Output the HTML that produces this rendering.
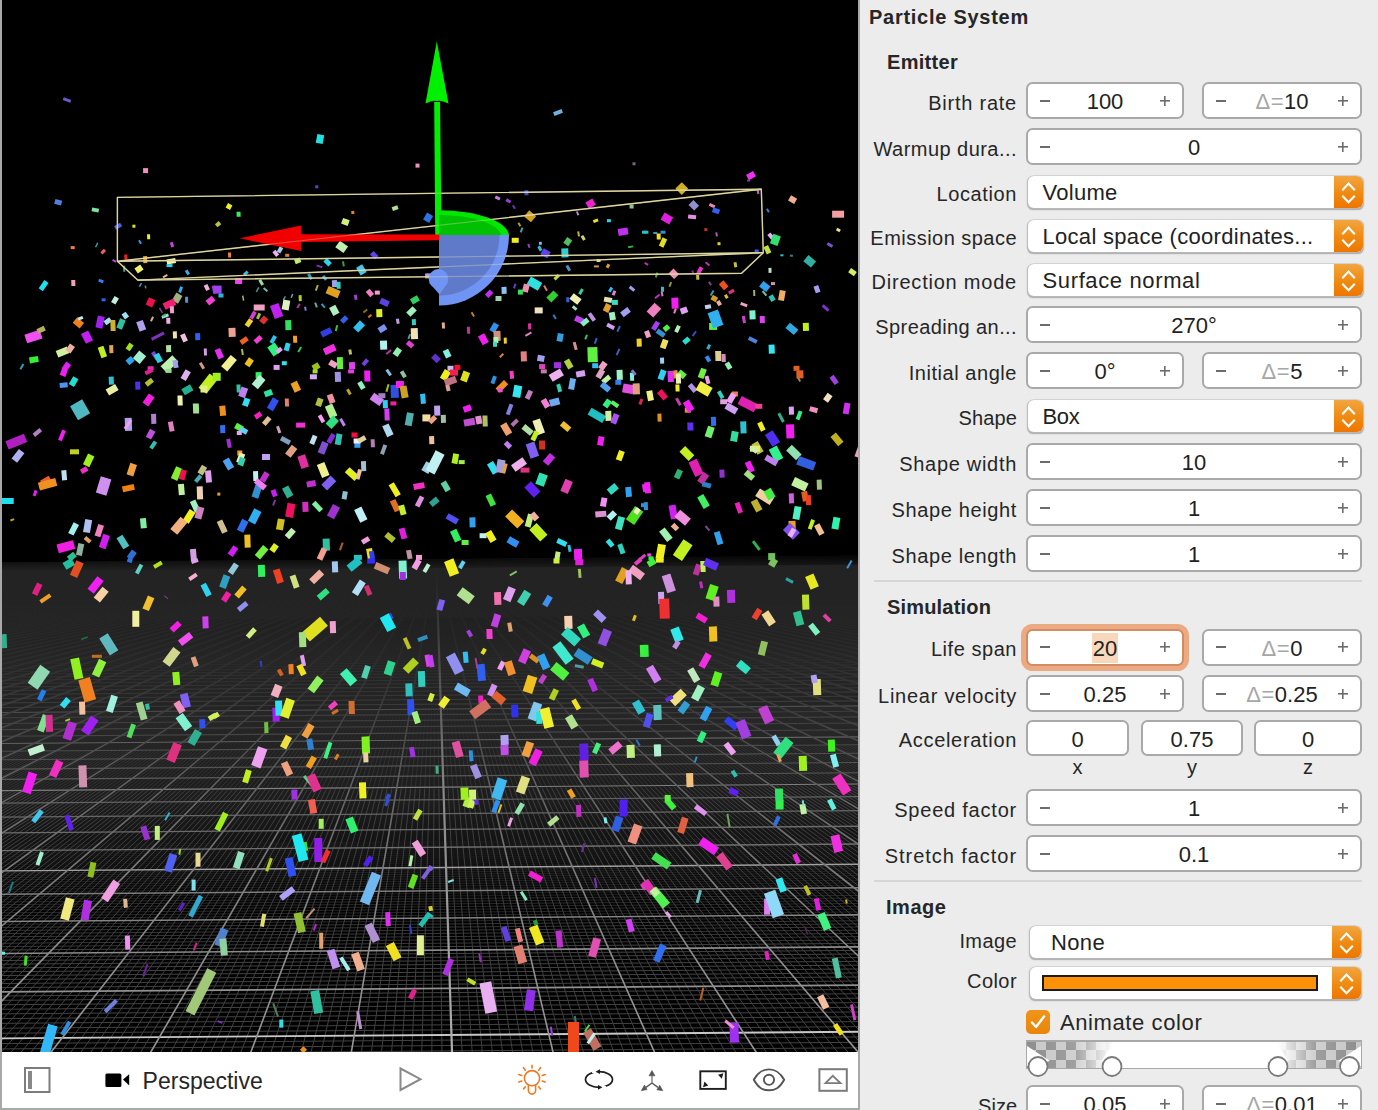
<!DOCTYPE html>
<html><head><meta charset="utf-8"><style>
*{box-sizing:border-box}
html,body{margin:0;padding:0;width:1378px;height:1110px;overflow:hidden;background:#ececec;font-family:"Liberation Sans",sans-serif}
#view{position:absolute;left:0;top:0;width:860px;height:1110px;background:#a9a9a9}
#scene{position:absolute;left:2px;top:0}
#tb{position:absolute;left:2px;top:1052px;width:856px;height:56px;background:#fff}
#persp{position:absolute;left:140.6px;top:15.5px;font-size:23px;color:#262626;letter-spacing:0px;white-space:nowrap}
#insp{position:absolute;left:860px;top:0;width:518px;height:1110px;background:#ececec;color:#262626}
.ptitle{position:absolute;left:869px;top:6px;font-size:20px;font-weight:700;letter-spacing:0.73px;white-space:nowrap;color:#262626}
.hdr{position:absolute;font-size:20px;font-weight:700;white-space:nowrap;color:#262626}
.lbl{position:absolute;right:361px;font-size:20px;white-space:nowrap;color:#262626;line-height:20px;height:20px}
.stp{position:absolute;background:#fff;border:2px solid #a9a9a9;border-radius:6.5px}
.stp.focus{border-color:#d38b61;box-shadow:0 0 0 5px #ebaa81}
.stp .mi{position:absolute;left:12px;top:50%;margin-top:-1px;width:10px;height:2px;background:#6c6c6c}
.stp .pl{position:absolute;right:12px;top:50%;margin-top:-5px;width:10px;height:10px;background:linear-gradient(#6c6c6c,#6c6c6c) center/10px 1.6px no-repeat,linear-gradient(#6c6c6c,#6c6c6c) center/1.6px 10px no-repeat}
.stp .val{position:absolute;left:0;right:0;top:50%;margin-top:-11.5px;text-align:center;font-size:22px;line-height:26px;color:#222;white-space:nowrap}
.dl{color:#a6a6a6;letter-spacing:0.5px}
.hl{background:#f8d7bb;padding:3px 1px 2px}
.pop{position:absolute;background:#fff;border-radius:6px;box-shadow:0 0 0 0.6px #c4c4c4,0 1px 1.2px 0.3px rgba(0,0,0,0.28)}
.ptxt{position:absolute;left:14.5px;top:4.2px;font-size:22px;line-height:26px;color:#222;white-space:nowrap;letter-spacing:0.45px}
.arr{position:absolute;right:0;top:0;width:29px;height:100%;border-radius:0 6px 6px 0;background:linear-gradient(#f2a540,#ef8a10 55%,#ee7500)}
.arr svg{position:absolute;left:0;top:0}
.sw{position:absolute;left:12px;top:8px;width:276px;height:16px;background:#fd9208;border:2px solid #1a1a1a}
.sep{position:absolute;left:874px;width:488px;height:2px;background:#d6d6d6}
.axl{position:absolute;top:756px;text-align:center;font-size:20px;color:#262626}
.chk{position:absolute;left:1026px;top:1010px;width:24px;height:24px;border-radius:5px;background:linear-gradient(#f0951a,#e8850c)}
.chk svg{position:absolute;left:0;top:0}
.anim{position:absolute;left:1060px;top:1010px;font-size:22px;white-space:nowrap;letter-spacing:0.6px;color:#262626}
.grad{position:absolute;left:1026px;top:1040px;width:336px;height:29px}
</style></head><body>
<div id="view">
<svg id="scene" width="856" height="1052" viewBox="2 0 856 1052">
<rect x="2" y="0" width="856" height="1052" fill="#000"/>
<defs><linearGradient id="haze" gradientUnits="userSpaceOnUse" x1="0" y1="559" x2="0" y2="1052"><stop offset="0" stop-color="#1e1e1e"/><stop offset="0.08" stop-color="#242424"/><stop offset="0.20" stop-color="#262626"/><stop offset="0.35" stop-color="#232323"/><stop offset="0.50" stop-color="#1c1c1c"/><stop offset="0.62" stop-color="#0e0e0e"/><stop offset="0.72" stop-color="#000"/><stop offset="1" stop-color="#000"/></linearGradient></defs>
<path d="M-1563.9 574.4L2435.9 543.6L858 1052L2 1052Z" fill="url(#haze)"/>
<path d="M-260.1 1061.98L1139.8 1051.20M-260.2 1056.39L1139.8 1045.61M-260.2 1050.94L1139.7 1040.16M-260.3 1045.60L1139.7 1034.82M-260.4 1035.27L1139.6 1024.49M-260.4 1030.26L1139.6 1019.48M-260.4 1025.37L1139.5 1014.59M-260.5 1020.57L1139.5 1009.79M-260.5 1015.88L1139.5 1005.10M-260.5 1011.28L1139.4 1000.50M-260.6 1006.77L1139.4 995.99M-260.6 1002.35L1139.4 991.57M-260.6 998.02L1139.3 987.24M-260.7 989.61L1139.3 978.83M-260.7 985.53L1139.2 974.75M-260.8 981.52L1139.2 970.74M-260.8 977.59L1139.2 966.81M-260.8 973.74L1139.1 962.96M-260.9 969.95L1139.1 959.17M-260.9 966.24L1139.1 955.46M-260.9 962.59L1139.0 951.81M-260.9 959.00L1139.0 948.23M-261.0 952.03L1139.0 941.25" stroke="#434343" stroke-opacity="1.0" stroke-width="1" fill="none"/>
<path d="M-261.0 948.63L1138.9 937.85M-261.0 945.30L1138.9 934.52M-261.1 942.02L1138.9 931.24M-261.1 938.79L1138.9 928.01M-261.1 935.62L1138.8 924.84M-261.1 932.51L1138.8 921.73M-261.2 929.44L1138.8 918.66" stroke="#434343" stroke-opacity="0.8" stroke-width="1" fill="none"/>
<path d="M-261.2 926.43L1138.8 915.65M-261.2 920.55L1138.7 909.77M-261.3 917.68L1138.7 906.90M-261.3 914.86L1138.7 904.08M-261.3 912.08L1138.7 901.30M-261.3 909.35L1138.6 898.57M-261.3 906.65L1138.6 895.87M-261.4 904.00L1138.6 893.22" stroke="#434343" stroke-opacity="0.6" stroke-width="1" fill="none"/>
<path d="M-261.4 901.39L1138.6 890.61M-261.4 898.82L1138.6 888.04M-261.4 893.80L1138.5 883.02M-261.5 891.34L1138.5 880.56M-261.5 888.92L1138.5 878.15M-261.5 886.54L1138.5 875.76M-261.5 884.19L1138.4 873.41M-261.5 881.88L1138.4 871.10M-261.6 879.60L1138.4 868.82M-261.6 877.35L1138.4 866.57M-261.6 875.13L1138.4 864.35" stroke="#434343" stroke-opacity="0.4" stroke-width="1" fill="none"/>
<path d="M-261.6 870.79L1138.3 860.01M-261.6 868.66L1138.3 857.88M-261.7 866.57L1138.3 855.79M-261.7 864.50L1138.3 853.72M-261.7 862.46L1138.3 851.68M-261.7 860.45L1138.3 849.67M-261.7 858.46L1138.2 847.68M-261.7 856.50L1138.2 845.72M-261.7 854.57L1138.2 843.79M-261.8 850.78L1138.2 840.00M-261.8 848.92L1138.2 838.14M-261.8 847.09L1138.2 836.31" stroke="#434343" stroke-opacity="0.2" stroke-width="1" fill="none"/>
<path d="M2.2 712.3L-113.4 753.2M5.3 712.3L-109.5 753.2M8.4 712.3L-105.7 753.2M14.5 712.2L-97.9 753.1M17.6 712.2L-94.0 753.1M20.6 712.2L-90.1 753.1M23.7 712.2L-86.2 753.0M26.8 712.2L-82.4 753.0M29.8 712.1L-78.5 753.0M32.9 712.1L-74.6 752.9M36.0 712.1L-70.7 752.9M39.0 712.1L-66.8 752.9M45.2 712.0L-59.0 752.8M48.2 712.0L-55.2 752.8M51.3 712.0L-51.3 752.8M54.4 711.9L-47.4 752.7M57.4 711.9L-43.5 752.7M60.5 711.9L-39.6 752.7M63.6 711.9L-35.7 752.6M66.7 711.8L-31.8 752.6M69.7 711.8L-28.0 752.6M75.9 711.8L-20.2 752.5M78.9 711.8L-16.3 752.5M82.0 711.7L-12.4 752.5M85.1 711.7L-8.5 752.4M88.1 711.7L-4.6 752.4M91.2 711.7L-0.8 752.4M94.3 711.6L3.1 752.3M97.3 711.6L7.0 752.3M100.4 711.6L10.9 752.3M106.5 711.5L18.7 752.2M109.6 711.5L22.6 752.2M112.7 711.5L26.4 752.2M115.7 711.5L30.3 752.1M118.8 711.4L34.2 752.1M121.9 711.4L38.1 752.1M124.9 711.4L42.0 752.0M128.0 711.4L45.9 752.0M131.1 711.4L49.8 752.0M137.2 711.3L57.5 751.9M140.3 711.3L61.4 751.9M143.3 711.3L65.3 751.9M146.4 711.2L69.2 751.8M149.5 711.2L73.1 751.8M152.5 711.2L76.9 751.8M155.6 711.2L80.8 751.7M158.7 711.1L84.7 751.7M161.7 711.1L88.6 751.7M167.9 711.1L96.4 751.6M170.9 711.0L100.3 751.6M174.0 711.0L104.1 751.6M177.1 711.0L108.0 751.5M180.1 711.0L111.9 751.5M183.2 711.0L115.8 751.5M186.3 710.9L119.7 751.4M189.3 710.9L123.6 751.4M192.4 710.9L127.5 751.4M198.5 710.8L135.2 751.3M201.6 710.8L139.1 751.3M204.7 710.8L143.0 751.3M207.8 710.8L146.9 751.2M210.8 710.7L150.8 751.2M213.9 710.7L154.7 751.2M217.0 710.7L158.5 751.1M220.0 710.7L162.4 751.1M223.1 710.6L166.3 751.1M229.2 710.6L174.1 751.0M232.3 710.6L178.0 751.0M235.4 710.5L181.9 751.0M238.4 710.5L185.7 750.9M241.5 710.5L189.6 750.9M244.6 710.5L193.5 750.9M247.6 710.5L197.4 750.8M250.7 710.4L201.3 750.8M253.8 710.4L205.2 750.8M259.9 710.4L212.9 750.7M263.0 710.3L216.8 750.7M266.0 710.3L220.7 750.7M269.1 710.3L224.6 750.6M272.2 710.3L228.5 750.6M275.2 710.2L232.4 750.6M278.3 710.2L236.2 750.5M281.4 710.2L240.1 750.5M284.4 710.2L244.0 750.5M290.6 710.1L251.8 750.4M293.6 710.1L255.7 750.4M296.7 710.1L259.6 750.4M299.8 710.1L263.4 750.3M302.8 710.0L267.3 750.3M305.9 710.0L271.2 750.3M309.0 710.0L275.1 750.2M312.0 710.0L279.0 750.2M315.1 709.9L282.9 750.2M321.2 709.9L290.6 750.1M324.3 709.9L294.5 750.1M327.4 709.8L298.4 750.1M330.4 709.8L302.3 750.0M333.5 709.8L306.2 750.0M336.6 709.8L310.1 750.0M339.7 709.7L314.0 749.9M342.7 709.7L317.8 749.9M345.8 709.7L321.7 749.9M351.9 709.7L329.5 749.8M355.0 709.6L333.4 749.8M358.1 709.6L337.3 749.8M361.1 709.6L341.2 749.7M364.2 709.6L345.0 749.7M367.3 709.5L348.9 749.7M370.3 709.5L352.8 749.6M373.4 709.5L356.7 749.6M376.5 709.5L360.6 749.6M382.6 709.4L368.4 749.5M385.7 709.4L372.2 749.5M388.7 709.4L376.1 749.5M391.8 709.3L380.0 749.4M394.9 709.3L383.9 749.4M397.9 709.3L387.8 749.4M401.0 709.3L391.7 749.3M404.1 709.3L395.6 749.3M407.1 709.2L399.4 749.3M413.3 709.2L407.2 749.2M416.3 709.2L411.1 749.2M419.4 709.1L415.0 749.2M422.5 709.1L418.9 749.1M425.5 709.1L422.7 749.1M428.6 709.1L426.6 749.1M431.7 709.0L430.5 749.0M434.7 709.0L434.4 749.0M437.8 709.0L438.3 749.0M443.9 708.9L446.1 748.9M447.0 708.9L449.9 748.9M450.1 708.9L453.8 748.9M453.1 708.9L457.7 748.8M456.2 708.8L461.6 748.8M459.3 708.8L465.5 748.8M462.3 708.8L469.4 748.7M465.4 708.8L473.3 748.7M468.5 708.8L477.1 748.7M474.6 708.7L484.9 748.6M477.7 708.7L488.8 748.6M480.8 708.7L492.7 748.6M483.8 708.6L496.6 748.5M486.9 708.6L500.5 748.5M490.0 708.6L504.3 748.5M493.0 708.6L508.2 748.4M496.1 708.5L512.1 748.4M499.2 708.5L516.0 748.4M505.3 708.5L523.8 748.3M508.4 708.4L527.7 748.3M511.4 708.4L531.5 748.3M514.5 708.4L535.4 748.2M517.6 708.4L539.3 748.2M520.6 708.4L543.2 748.2M523.7 708.3L547.1 748.2M526.8 708.3L551.0 748.1M529.8 708.3L554.9 748.1M536.0 708.2L562.6 748.0M539.0 708.2L566.5 748.0M542.1 708.2L570.4 748.0M545.2 708.2L574.3 747.9M548.2 708.1L578.2 747.9M551.3 708.1L582.0 747.9M554.4 708.1L585.9 747.9M557.4 708.1L589.8 747.8M560.5 708.0L593.7 747.8M566.6 708.0L601.5 747.7M569.7 708.0L605.4 747.7M572.8 708.0L609.2 747.7M575.8 707.9L613.1 747.6M578.9 707.9L617.0 747.6M582.0 707.9L620.9 747.6M585.0 707.9L624.8 747.6M588.1 707.8L628.7 747.5M591.2 707.8L632.6 747.5M597.3 707.8L640.3 747.4M600.4 707.7L644.2 747.4M603.4 707.7L648.1 747.4M606.5 707.7L652.0 747.3M609.6 707.7L655.9 747.3M612.6 707.6L659.8 747.3M615.7 707.6L663.6 747.3M618.8 707.6L667.5 747.2M621.9 707.6L671.4 747.2M628.0 707.5L679.2 747.1M631.1 707.5L683.1 747.1M634.1 707.5L687.0 747.1M637.2 707.5L690.8 747.0M640.3 707.4L694.7 747.0M643.3 707.4L698.6 747.0M646.4 707.4L702.5 747.0M649.5 707.4L706.4 746.9M652.5 707.3L710.3 746.9M658.7 707.3L718.0 746.8M661.7 707.3L721.9 746.8M664.8 707.2L725.8 746.8M667.9 707.2L729.7 746.7M670.9 707.2L733.6 746.7M674.0 707.2L737.5 746.7M677.1 707.1L741.3 746.7M680.1 707.1L745.2 746.6M683.2 707.1L749.1 746.6M689.3 707.1L756.9 746.5M692.4 707.0L760.8 746.5M695.5 707.0L764.7 746.5M698.5 707.0L768.5 746.4M701.6 707.0L772.4 746.4M704.7 706.9L776.3 746.4M707.7 706.9L780.2 746.4M710.8 706.9L784.1 746.3M713.9 706.9L788.0 746.3M720.0 706.8L795.7 746.2M723.1 706.8L799.6 746.2M726.1 706.8L803.5 746.2M729.2 706.7L807.4 746.1M732.3 706.7L811.3 746.1M735.3 706.7L815.2 746.1M738.4 706.7L819.1 746.1M741.5 706.7L822.9 746.0M744.5 706.6L826.8 746.0M750.7 706.6L834.6 745.9M753.8 706.6L838.5 745.9M756.8 706.5L842.4 745.9M759.9 706.5L846.3 745.8M763.0 706.5L850.1 745.8M766.0 706.5L854.0 745.8M769.1 706.4L857.9 745.8M772.2 706.4L861.8 745.7M775.2 706.4L865.7 745.7M781.4 706.3L873.5 745.6M784.4 706.3L877.3 745.6M787.5 706.3L881.2 745.6M790.6 706.3L885.1 745.5M793.6 706.3L889.0 745.5M796.7 706.2L892.9 745.5M799.8 706.2L896.8 745.5M802.8 706.2L900.7 745.4M805.9 706.2L904.5 745.4M812.0 706.1L912.3 745.3M815.1 706.1L916.2 745.3M818.2 706.1L920.1 745.3M821.2 706.0L924.0 745.2M824.3 706.0L927.8 745.2M827.4 706.0L931.7 745.2M830.4 706.0L935.6 745.2M833.5 705.9L939.5 745.1M836.6 705.9L943.4 745.1M842.7 705.9L951.2 745.0M845.8 705.8L955.0 745.0M848.8 705.8L958.9 745.0M851.9 705.8L962.8 744.9M855.0 705.8L966.7 744.9" stroke="#404040" stroke-opacity="0.3" stroke-width="1" fill="none"/>
<path d="M3.1 752.3L-88.0 793.0M7.0 752.3L-83.3 793.0M10.9 752.3L-78.6 793.0M18.7 752.2L-69.2 792.9M22.6 752.2L-64.5 792.9M26.4 752.2L-59.8 792.8M30.3 752.1L-55.1 792.8M34.2 752.1L-50.4 792.8M38.1 752.1L-45.7 792.7M42.0 752.0L-41.0 792.7M45.9 752.0L-36.3 792.6M49.8 752.0L-31.6 792.6M57.5 751.9L-22.2 792.5M61.4 751.9L-17.5 792.5M65.3 751.9L-12.8 792.5M69.2 751.8L-8.0 792.4M73.1 751.8L-3.3 792.4M76.9 751.8L1.4 792.4M80.8 751.7L6.1 792.3M84.7 751.7L10.8 792.3M88.6 751.7L15.5 792.2M96.4 751.6L24.9 792.2M100.3 751.6L29.6 792.1M104.1 751.6L34.3 792.1M108.0 751.5L39.0 792.1M111.9 751.5L43.7 792.0M115.8 751.5L48.4 792.0M119.7 751.4L53.1 792.0M123.6 751.4L57.8 791.9M127.5 751.4L62.5 791.9M135.2 751.3L71.9 791.8M139.1 751.3L76.6 791.8M143.0 751.3L81.3 791.7M146.9 751.2L86.0 791.7M150.8 751.2L90.7 791.7M154.7 751.2L95.4 791.6M158.5 751.1L100.1 791.6M162.4 751.1L104.8 791.6M166.3 751.1L109.5 791.5M174.1 751.0L118.9 791.4M178.0 751.0L123.6 791.4M181.9 751.0L128.3 791.4M185.7 750.9L133.1 791.3M189.6 750.9L137.8 791.3M193.5 750.9L142.5 791.3M197.4 750.8L147.2 791.2M201.3 750.8L151.9 791.2M205.2 750.8L156.6 791.2M212.9 750.7L166.0 791.1M216.8 750.7L170.7 791.0M220.7 750.7L175.4 791.0M224.6 750.6L180.1 791.0M228.5 750.6L184.8 790.9M232.4 750.6L189.5 790.9M236.2 750.5L194.2 790.9M240.1 750.5L198.9 790.8M244.0 750.5L203.6 790.8M251.8 750.4L213.0 790.7M255.7 750.4L217.7 790.7M259.6 750.4L222.4 790.7M263.4 750.3L227.1 790.6M267.3 750.3L231.8 790.6M271.2 750.3L236.5 790.5M275.1 750.2L241.2 790.5M279.0 750.2L245.9 790.5M282.9 750.2L250.6 790.4M290.6 750.1L260.0 790.4M294.5 750.1L264.7 790.3M298.4 750.1L269.5 790.3M302.3 750.0L274.2 790.3M306.2 750.0L278.9 790.2M310.1 750.0L283.6 790.2M314.0 749.9L288.3 790.1M317.8 749.9L293.0 790.1M321.7 749.9L297.7 790.1M329.5 749.8L307.1 790.0M333.4 749.8L311.8 790.0M337.3 749.8L316.5 789.9M341.2 749.7L321.2 789.9M345.0 749.7L325.9 789.9M348.9 749.7L330.6 789.8M352.8 749.6L335.3 789.8M356.7 749.6L340.0 789.7M360.6 749.6L344.7 789.7M368.4 749.5L354.1 789.6M372.2 749.5L358.8 789.6M376.1 749.5L363.5 789.6M380.0 749.4L368.2 789.5M383.9 749.4L372.9 789.5M387.8 749.4L377.6 789.5M391.7 749.3L382.3 789.4M395.6 749.3L387.0 789.4M399.4 749.3L391.7 789.3M407.2 749.2L401.1 789.3M411.1 749.2L405.8 789.2M415.0 749.2L410.6 789.2M418.9 749.1L415.3 789.2M422.7 749.1L420.0 789.1M426.6 749.1L424.7 789.1M430.5 749.0L429.4 789.1M434.4 749.0L434.1 789.0M438.3 749.0L438.8 789.0M446.1 748.9L448.2 788.9M449.9 748.9L452.9 788.9M453.8 748.9L457.6 788.8M457.7 748.8L462.3 788.8M461.6 748.8L467.0 788.8M465.5 748.8L471.7 788.7M469.4 748.7L476.4 788.7M473.3 748.7L481.1 788.7M477.1 748.7L485.8 788.6M484.9 748.6L495.2 788.6M488.8 748.6L499.9 788.5M492.7 748.6L504.6 788.5M496.6 748.5L509.3 788.4M500.5 748.5L514.0 788.4M504.3 748.5L518.7 788.4M508.2 748.4L523.4 788.3M512.1 748.4L528.1 788.3M516.0 748.4L532.8 788.3M523.8 748.3L542.2 788.2M527.7 748.3L546.9 788.2M531.5 748.3L551.7 788.1M535.4 748.2L556.4 788.1M539.3 748.2L561.1 788.0M543.2 748.2L565.8 788.0M547.1 748.2L570.5 788.0M551.0 748.1L575.2 787.9M554.9 748.1L579.9 787.9M562.6 748.0L589.3 787.8M566.5 748.0L594.0 787.8M570.4 748.0L598.7 787.8M574.3 747.9L603.4 787.7M578.2 747.9L608.1 787.7M582.0 747.9L612.8 787.6M585.9 747.9L617.5 787.6M589.8 747.8L622.2 787.6M593.7 747.8L626.9 787.5M601.5 747.7L636.3 787.5M605.4 747.7L641.0 787.4M609.2 747.7L645.7 787.4M613.1 747.6L650.4 787.4M617.0 747.6L655.1 787.3M620.9 747.6L659.8 787.3M624.8 747.6L664.5 787.2M628.7 747.5L669.2 787.2M632.6 747.5L673.9 787.2M640.3 747.4L683.3 787.1M644.2 747.4L688.0 787.1M648.1 747.4L692.8 787.0M652.0 747.3L697.5 787.0M655.9 747.3L702.2 787.0M659.8 747.3L706.9 786.9M663.6 747.3L711.6 786.9M667.5 747.2L716.3 786.8M671.4 747.2L721.0 786.8M679.2 747.1L730.4 786.7M683.1 747.1L735.1 786.7M687.0 747.1L739.8 786.7M690.8 747.0L744.5 786.6M694.7 747.0L749.2 786.6M698.6 747.0L753.9 786.6M702.5 747.0L758.6 786.5M706.4 746.9L763.3 786.5M710.3 746.9L768.0 786.5M718.0 746.8L777.4 786.4M721.9 746.8L782.1 786.3M725.8 746.8L786.8 786.3M729.7 746.7L791.5 786.3M733.6 746.7L796.2 786.2M737.5 746.7L800.9 786.2M741.3 746.7L805.6 786.2M745.2 746.6L810.3 786.1M749.1 746.6L815.0 786.1M756.9 746.5L824.4 786.0M760.8 746.5L829.2 786.0M764.7 746.5L833.9 785.9M768.5 746.4L838.6 785.9M772.4 746.4L843.3 785.9M776.3 746.4L848.0 785.8M780.2 746.4L852.7 785.8M784.1 746.3L857.4 785.8M788.0 746.3L862.1 785.7M795.7 746.2L871.5 785.7M799.6 746.2L876.2 785.6M803.5 746.2L880.9 785.6M807.4 746.1L885.6 785.5M811.3 746.1L890.3 785.5M815.2 746.1L895.0 785.5M819.1 746.1L899.7 785.4M822.9 746.0L904.4 785.4M826.8 746.0L909.1 785.4M834.6 745.9L918.5 785.3M838.5 745.9L923.2 785.3M842.4 745.9L927.9 785.2M846.3 745.8L932.6 785.2M850.1 745.8L937.3 785.1M854.0 745.8L942.0 785.1M857.9 745.8L946.7 785.1" stroke="#404040" stroke-opacity="0.6" stroke-width="1" fill="none"/>
<path d="M6.1 792.3L-536.0 1086.5M10.8 792.3L-525.4 1086.4M15.5 792.2L-514.8 1086.3M24.9 792.2L-493.5 1086.2M29.6 792.1L-482.9 1086.1M34.3 792.1L-472.2 1086.0M39.0 792.1L-461.6 1085.9M43.7 792.0L-451.0 1085.8M48.4 792.0L-440.3 1085.8M53.1 792.0L-429.7 1085.7M57.8 791.9L-419.1 1085.6M62.5 791.9L-408.4 1085.5M71.9 791.8L-387.2 1085.4M76.6 791.8L-376.5 1085.3M81.3 791.7L-365.9 1085.2M86.0 791.7L-355.3 1085.1M90.7 791.7L-344.6 1085.0M95.4 791.6L-334.0 1084.9M100.1 791.6L-323.4 1084.9M104.8 791.6L-312.7 1084.8M109.5 791.5L-302.1 1084.7M118.9 791.4L-280.8 1084.5M123.6 791.4L-270.2 1084.5M128.3 791.4L-259.6 1084.4M133.1 791.3L-248.9 1084.3M137.8 791.3L-238.3 1084.2M142.5 791.3L-227.7 1084.1M147.2 791.2L-217.0 1084.0M151.9 791.2L-206.4 1084.0M156.6 791.2L-195.8 1083.9M166.0 791.1L-174.5 1083.7M170.7 791.0L-163.9 1083.6M175.4 791.0L-153.2 1083.6M180.1 791.0L-142.6 1083.5M184.8 790.9L-132.0 1083.4M189.5 790.9L-121.3 1083.3M194.2 790.9L-110.7 1083.2M198.9 790.8L-100.1 1083.1M203.6 790.8L-89.4 1083.1M213.0 790.7L-68.2 1082.9M217.7 790.7L-57.5 1082.8M222.4 790.7L-46.9 1082.7M227.1 790.6L-36.3 1082.7M231.8 790.6L-25.6 1082.6M236.5 790.5L-15.0 1082.5M241.2 790.5L-4.3 1082.4M245.9 790.5L6.3 1082.3M250.6 790.4L16.9 1082.2M260.0 790.4L38.2 1082.1M264.7 790.3L48.8 1082.0M269.5 790.3L59.5 1081.9M274.2 790.3L70.1 1081.8M278.9 790.2L80.7 1081.8M283.6 790.2L91.4 1081.7M288.3 790.1L102.0 1081.6M293.0 790.1L112.6 1081.5M297.7 790.1L123.3 1081.4M307.1 790.0L144.5 1081.3M311.8 790.0L155.2 1081.2M316.5 789.9L165.8 1081.1M321.2 789.9L176.4 1081.0M325.9 789.9L187.1 1080.9M330.6 789.8L197.7 1080.9M335.3 789.8L208.3 1080.8M340.0 789.7L219.0 1080.7M344.7 789.7L229.6 1080.6M354.1 789.6L250.9 1080.4M358.8 789.6L261.5 1080.4M363.5 789.6L272.1 1080.3M368.2 789.5L282.8 1080.2M372.9 789.5L293.4 1080.1M377.6 789.5L304.0 1080.0M382.3 789.4L314.7 1079.9M387.0 789.4L325.3 1079.9M391.7 789.3L335.9 1079.8M401.1 789.3L357.2 1079.6M405.8 789.2L367.8 1079.5M410.6 789.2L378.5 1079.5M415.3 789.2L389.1 1079.4M420.0 789.1L399.7 1079.3M424.7 789.1L410.4 1079.2M429.4 789.1L421.0 1079.1M434.1 789.0L431.6 1079.0M438.8 789.0L442.3 1079.0M448.2 788.9L463.5 1078.8M452.9 788.9L474.2 1078.7M457.6 788.8L484.8 1078.6M462.3 788.8L495.4 1078.6M467.0 788.8L506.1 1078.5M471.7 788.7L516.7 1078.4M476.4 788.7L527.3 1078.3M481.1 788.7L538.0 1078.2M485.8 788.6L548.6 1078.1M495.2 788.6L569.9 1078.0M499.9 788.5L580.5 1077.9M504.6 788.5L591.1 1077.8M509.3 788.4L601.8 1077.7M514.0 788.4L612.4 1077.7M518.7 788.4L623.0 1077.6M523.4 788.3L633.7 1077.5M528.1 788.3L644.3 1077.4M532.8 788.3L654.9 1077.3M542.2 788.2L676.2 1077.2M546.9 788.2L686.8 1077.1M551.7 788.1L697.5 1077.0M556.4 788.1L708.1 1076.9M561.1 788.0L718.7 1076.8M565.8 788.0L729.4 1076.8M570.5 788.0L740.0 1076.7M575.2 787.9L750.6 1076.6M579.9 787.9L761.3 1076.5M589.3 787.8L782.5 1076.3M594.0 787.8L793.2 1076.3M598.7 787.8L803.8 1076.2M603.4 787.7L814.4 1076.1M608.1 787.7L825.1 1076.0M612.8 787.6L835.7 1075.9M617.5 787.6L846.3 1075.9M622.2 787.6L857.0 1075.8M626.9 787.5L867.6 1075.7M636.3 787.5L888.9 1075.5M641.0 787.4L899.5 1075.4M645.7 787.4L910.1 1075.4M650.4 787.4L920.8 1075.3M655.1 787.3L931.4 1075.2M659.8 787.3L942.0 1075.1M664.5 787.2L952.7 1075.0M669.2 787.2L963.3 1075.0M673.9 787.2L974.0 1074.9M683.3 787.1L995.2 1074.7M688.0 787.1L1005.9 1074.6M692.8 787.0L1016.5 1074.5M697.5 787.0L1027.1 1074.5M702.2 787.0L1037.8 1074.4M706.9 786.9L1048.4 1074.3M711.6 786.9L1059.0 1074.2M716.3 786.8L1069.7 1074.1M721.0 786.8L1080.3 1074.1M730.4 786.7L1101.6 1073.9M735.1 786.7L1112.2 1073.8M739.8 786.7L1122.8 1073.7M744.5 786.6L1133.5 1073.6M749.2 786.6L1144.1 1073.6M753.9 786.6L1154.7 1073.5M758.6 786.5L1165.4 1073.4M763.3 786.5L1176.0 1073.3M768.0 786.5L1186.6 1073.2M777.4 786.4L1207.9 1073.1M782.1 786.3L1218.5 1073.0M786.8 786.3L1229.2 1072.9M791.5 786.3L1239.8 1072.8M796.2 786.2L1250.4 1072.7M800.9 786.2L1261.1 1072.7M805.6 786.2L1271.7 1072.6M810.3 786.1L1282.3 1072.5M815.0 786.1L1293.0 1072.4M824.4 786.0L1314.2 1072.3M829.2 786.0L1324.9 1072.2M833.9 785.9L1335.5 1072.1M838.6 785.9L1346.1 1072.0M843.3 785.9L1356.8 1071.9M848.0 785.8L1367.4 1071.8M852.7 785.8L1378.0 1071.8M857.4 785.8L1388.7 1071.7" stroke="#404040" stroke-opacity="1.0" stroke-width="1" fill="none"/>
<path d="M-260.3 1040.38L1139.6 1029.60" stroke="rgb(200,200,200)" stroke-width="1.89"/>
<path d="M-260.7 993.78L1139.3 983.00" stroke="rgb(145,145,145)" stroke-width="1.76"/>
<path d="M-261.0 955.49L1139.0 944.71" stroke="rgb(139,139,139)" stroke-width="1.65"/>
<path d="M-261.2 923.47L1138.7 912.69" stroke="rgb(132,132,132)" stroke-width="1.55"/>
<path d="M-261.4 896.29L1138.5 885.51" stroke="rgb(126,126,126)" stroke-width="1.48"/>
<path d="M-261.6 872.94L1138.4 862.16" stroke="rgb(162,162,162)" stroke-width="1.41"/>
<path d="M-261.8 852.66L1138.2 841.88" stroke="rgb(113,113,113)" stroke-width="1.35"/>
<path d="M-261.9 834.88L1138.1 824.10" stroke="rgb(107,107,107)" stroke-width="1.30"/>
<path d="M-262.0 819.17L1137.9 808.39" stroke="rgb(102,102,102)" stroke-width="1.26"/>
<path d="M-262.1 805.18L1137.8 794.40" stroke="rgb(98,98,98)" stroke-width="1.22"/>
<path d="M-262.2 792.65L1137.7 781.87" stroke="rgb(127,127,127)" stroke-width="1.18"/>
<path d="M-262.3 781.36L1137.6 770.58" stroke="rgb(90,90,90)" stroke-width="1.15"/>
<path d="M-262.4 771.13L1137.6 760.35" stroke="rgb(86,86,86)" stroke-width="1.12"/>
<path d="M-262.5 761.82L1137.5 751.04" stroke="rgb(83,83,83)" stroke-width="1.10"/>
<path d="M-262.5 753.32L1137.4 742.54" stroke="rgb(80,80,80)" stroke-width="1.10"/>
<path d="M-262.6 745.52L1137.4 734.74" stroke="rgb(105,105,105)" stroke-width="1.10"/>
<path d="M-262.6 738.33L1137.3 727.55" stroke="rgb(75,75,75)" stroke-width="1.10"/>
<path d="M-262.7 731.70L1137.3 720.92" stroke="rgb(73,73,73)" stroke-width="1.10"/>
<path d="M-262.7 725.55L1137.2 714.77" stroke="rgb(71,71,71)" stroke-width="1.10"/>
<path d="M-262.8 719.84L1137.2 709.06" stroke="rgb(68,68,68)" stroke-width="1.10"/>
<path d="M-262.8 714.52L1137.1 703.74" stroke="rgb(90,90,90)" stroke-width="1.10"/>
<path d="M-262.9 709.55L1137.1 698.77" stroke="rgb(65,65,65)" stroke-width="1.10"/>
<path d="M-262.9 704.90L1137.1 694.12" stroke="rgb(63,63,63)" stroke-width="1.10"/>
<path d="M-262.9 700.54L1137.0 689.76" stroke="rgb(61,61,61)" stroke-width="1.10"/>
<path d="M-263.0 696.44L1137.0 685.66" stroke="rgb(60,60,60)" stroke-width="1.10"/>
<path d="M-263.0 692.58L1137.0 681.80" stroke="rgb(59,59,59)" stroke-width="1.10"/>
<path d="M-263.0 688.94L1136.9 678.16" stroke="rgb(57,57,57)" stroke-width="1.10"/>
<path d="M-263.0 685.50L1136.9 674.72" stroke="rgb(56,56,56)" stroke-width="1.10"/>
<path d="M-263.1 682.24L1136.9 671.46" stroke="rgb(55,55,55)" stroke-width="1.10"/>
<path d="M-263.1 679.16L1136.9 668.38" stroke="rgb(54,54,54)" stroke-width="1.10"/>
<path d="M-263.1 676.23L1136.8 665.45" stroke="rgb(52,52,52)" stroke-width="1.10"/>
<path d="M-263.1 673.45L1136.8 662.67" stroke="rgb(50,50,50)" stroke-width="1.10"/>
<path d="M-263.2 670.81L1136.8 660.03" stroke="rgb(48,48,48)" stroke-width="1.10"/>
<path d="M-263.2 668.28L1136.8 657.50" stroke="rgb(46,46,46)" stroke-width="1.10"/>
<path d="M-263.2 665.88L1136.8 655.10" stroke="rgb(45,45,45)" stroke-width="1.10"/>
<path d="M-263.2 663.58L1136.7 652.81" stroke="rgb(43,43,43)" stroke-width="1.10"/>
<path d="M-263.2 661.39L1136.7 650.61" stroke="rgb(42,42,42)" stroke-width="1.10"/>
<path d="M-263.2 659.29L1136.7 648.51" stroke="rgb(41,41,41)" stroke-width="1.10"/>
<path d="M-263.3 657.28L1136.7 646.50" stroke="rgb(40,40,40)" stroke-width="1.10"/>
<path d="M-263.3 655.36L1136.7 644.58" stroke="rgb(39,39,39)" stroke-width="1.10"/>
<path d="M-263.3 653.51L1136.7 642.73" stroke="rgb(38,38,38)" stroke-width="1.10"/>
<path d="M-263.3 651.73L1136.7 640.95" stroke="rgb(38,38,38)" stroke-width="1.10"/>
<path d="M-263.3 650.03L1136.6 639.25" stroke="rgb(37,37,37)" stroke-width="1.10"/>
<path d="M-263.3 648.39L1136.6 637.61" stroke="rgb(36,36,36)" stroke-width="1.10"/>
<path d="M-263.3 646.81L1136.6 636.03" stroke="rgb(36,36,36)" stroke-width="1.10"/>
<path d="M-263.4 645.29L1136.6 634.51" stroke="rgb(35,35,35)" stroke-width="1.10"/>
<path d="M-263.4 643.82L1136.6 633.04" stroke="rgb(35,35,35)" stroke-width="1.10"/>
<path d="M-263.4 642.41L1136.6 631.63" stroke="rgb(34,34,34)" stroke-width="1.10"/>
<path d="M-263.4 641.05L1136.6 630.27" stroke="rgb(34,34,34)" stroke-width="1.10"/>
<path d="M-263.4 639.73L1136.6 628.95" stroke="rgb(34,34,34)" stroke-width="1.10"/>
<path d="M-263.4 638.46L1136.5 627.68" stroke="rgb(33,33,33)" stroke-width="1.10"/>
<path d="M-263.4 637.23L1136.5 626.45" stroke="rgb(33,33,33)" stroke-width="1.10"/>
<path d="M-263.4 636.04L1136.5 625.26" stroke="rgb(33,33,33)" stroke-width="1.10"/>
<path d="M-263.4 634.89L1136.5 624.11" stroke="rgb(32,32,32)" stroke-width="1.10"/>
<path d="M-263.4 633.77L1136.5 622.99" stroke="rgb(32,32,32)" stroke-width="1.10"/>
<path d="M-263.5 632.69L1136.5 621.91" stroke="rgb(32,32,32)" stroke-width="1.10"/>
<path d="M-263.5 631.64L1136.5 620.86" stroke="rgb(32,32,32)" stroke-width="1.10"/>
<path d="M-263.5 630.63L1136.5 619.85" stroke="rgb(32,32,32)" stroke-width="1.10"/>
<path d="M-263.5 629.64L1136.5 618.86" stroke="rgb(31,31,31)" stroke-width="1.10"/>
<path d="M-263.5 628.68L1136.5 617.91" stroke="rgb(31,31,31)" stroke-width="1.10"/>
<path d="M-263.5 627.76L1136.5 616.98" stroke="rgb(31,31,31)" stroke-width="1.10"/>
<path d="M-263.5 626.85L1136.5 616.07" stroke="rgb(31,31,31)" stroke-width="1.10"/>
<path d="M-263.5 625.98L1136.5 615.20" stroke="rgb(31,31,31)" stroke-width="1.10"/>
<path d="M-263.5 625.12L1136.4 614.34" stroke="rgb(31,31,31)" stroke-width="1.10"/>
<path d="M-263.5 624.29L1136.4 613.51" stroke="rgb(31,31,31)" stroke-width="1.10"/>
<path d="M-263.5 623.49L1136.4 612.71" stroke="rgb(31,31,31)" stroke-width="1.10"/>
<defs><linearGradient id="dmaj" gradientUnits="userSpaceOnUse" x1="0" y1="559" x2="0" y2="1052">
<stop offset="0.000" stop-color="rgb(30,30,30)"/>
<stop offset="0.081" stop-color="rgb(36,36,36)"/>
<stop offset="0.162" stop-color="rgb(46,46,46)"/>
<stop offset="0.243" stop-color="rgb(58,58,58)"/>
<stop offset="0.365" stop-color="rgb(80,80,80)"/>
<stop offset="0.487" stop-color="rgb(100,100,100)"/>
<stop offset="0.649" stop-color="rgb(125,125,125)"/>
<stop offset="0.811" stop-color="rgb(142,142,142)"/>
<stop offset="1.000" stop-color="rgb(152,152,152)"/>
</linearGradient>
<linearGradient id="dctr" gradientUnits="userSpaceOnUse" x1="0" y1="559" x2="0" y2="1052"><stop offset="0" stop-color="#3a3a3a"/><stop offset="0.1" stop-color="#555"/><stop offset="0.5" stop-color="#8a8a8a"/><stop offset="1" stop-color="#b0b0b0"/></linearGradient></defs>
<path d="M411.5 561.2L-5927.3 1128.0" stroke="url(#dmaj)" stroke-width="1.6"/>
<path d="M411.9 561.2L-5821.0 1127.2" stroke="url(#dmaj)" stroke-width="1.6"/>
<path d="M412.3 561.2L-5714.6 1126.4" stroke="url(#dmaj)" stroke-width="1.6"/>
<path d="M412.8 561.2L-5608.3 1125.6" stroke="url(#dmaj)" stroke-width="1.6"/>
<path d="M413.2 561.2L-5502.0 1124.7" stroke="url(#dmaj)" stroke-width="1.6"/>
<path d="M413.6 561.2L-5395.6 1123.9" stroke="url(#dmaj)" stroke-width="1.6"/>
<path d="M414.0 561.2L-5289.3 1123.1" stroke="url(#dmaj)" stroke-width="1.6"/>
<path d="M414.4 561.2L-5183.0 1122.3" stroke="url(#dmaj)" stroke-width="1.6"/>
<path d="M414.8 561.2L-5076.6 1121.5" stroke="url(#dmaj)" stroke-width="1.6"/>
<path d="M415.2 561.2L-4970.3 1120.6" stroke="url(#dmaj)" stroke-width="1.6"/>
<path d="M415.6 561.2L-4863.9 1119.8" stroke="url(#dmaj)" stroke-width="1.6"/>
<path d="M416.0 561.2L-4757.6 1119.0" stroke="url(#dmaj)" stroke-width="1.6"/>
<path d="M416.4 561.2L-4651.3 1118.2" stroke="url(#dmaj)" stroke-width="1.6"/>
<path d="M416.8 561.1L-4544.9 1117.4" stroke="url(#dmaj)" stroke-width="1.6"/>
<path d="M417.3 561.1L-4438.6 1116.5" stroke="url(#dmaj)" stroke-width="1.6"/>
<path d="M417.7 561.1L-4332.3 1115.7" stroke="url(#dmaj)" stroke-width="1.6"/>
<path d="M418.1 561.1L-4225.9 1114.9" stroke="url(#dmaj)" stroke-width="1.6"/>
<path d="M418.5 561.1L-4119.6 1114.1" stroke="url(#dmaj)" stroke-width="1.6"/>
<path d="M418.9 561.1L-4013.2 1113.3" stroke="url(#dmaj)" stroke-width="1.6"/>
<path d="M419.3 561.1L-3906.9 1112.5" stroke="url(#dmaj)" stroke-width="1.6"/>
<path d="M419.7 561.1L-3800.6 1111.6" stroke="url(#dmaj)" stroke-width="1.6"/>
<path d="M420.1 561.1L-3694.2 1110.8" stroke="url(#dmaj)" stroke-width="1.6"/>
<path d="M420.5 561.1L-3587.9 1110.0" stroke="url(#dmaj)" stroke-width="1.6"/>
<path d="M420.9 561.1L-3481.6 1109.2" stroke="url(#dmaj)" stroke-width="1.6"/>
<path d="M421.3 561.1L-3375.2 1108.4" stroke="url(#dmaj)" stroke-width="1.6"/>
<path d="M421.8 561.1L-3268.9 1107.5" stroke="url(#dmaj)" stroke-width="1.6"/>
<path d="M422.2 561.1L-3162.6 1106.7" stroke="url(#dmaj)" stroke-width="1.6"/>
<path d="M422.6 561.1L-3056.2 1105.9" stroke="url(#dmaj)" stroke-width="1.6"/>
<path d="M423.0 561.1L-2949.9 1105.1" stroke="url(#dmaj)" stroke-width="1.6"/>
<path d="M423.4 561.1L-2843.5 1104.3" stroke="url(#dmaj)" stroke-width="1.6"/>
<path d="M423.8 561.1L-2737.2 1103.4" stroke="url(#dmaj)" stroke-width="1.6"/>
<path d="M424.2 561.1L-2630.9 1102.6" stroke="url(#dmaj)" stroke-width="1.6"/>
<path d="M424.6 561.1L-2524.5 1101.8" stroke="url(#dmaj)" stroke-width="1.6"/>
<path d="M425.0 561.1L-2418.2 1101.0" stroke="url(#dmaj)" stroke-width="1.6"/>
<path d="M425.4 561.1L-2311.9 1100.2" stroke="url(#dmaj)" stroke-width="1.6"/>
<path d="M425.8 561.1L-2205.5 1099.4" stroke="url(#dmaj)" stroke-width="1.6"/>
<path d="M426.2 561.1L-2099.2 1098.5" stroke="url(#dmaj)" stroke-width="1.6"/>
<path d="M426.7 561.1L-1992.8 1097.7" stroke="url(#dmaj)" stroke-width="1.6"/>
<path d="M427.1 561.1L-1886.5 1096.9" stroke="url(#dmaj)" stroke-width="1.6"/>
<path d="M427.5 561.1L-1780.2 1096.1" stroke="url(#dmaj)" stroke-width="1.6"/>
<path d="M427.9 561.1L-1673.8 1095.3" stroke="url(#dmaj)" stroke-width="1.6"/>
<path d="M428.3 561.1L-1567.5 1094.4" stroke="url(#dmaj)" stroke-width="1.6"/>
<path d="M428.7 561.1L-1461.2 1093.6" stroke="url(#dmaj)" stroke-width="1.6"/>
<path d="M429.1 561.1L-1354.8 1092.8" stroke="url(#dmaj)" stroke-width="1.6"/>
<path d="M429.5 561.0L-1248.5 1092.0" stroke="url(#dmaj)" stroke-width="1.6"/>
<path d="M429.9 561.0L-1142.2 1091.2" stroke="url(#dmaj)" stroke-width="1.6"/>
<path d="M430.3 561.0L-1035.8 1090.3" stroke="url(#dmaj)" stroke-width="1.6"/>
<path d="M430.7 561.0L-929.5 1089.5" stroke="url(#dmaj)" stroke-width="1.6"/>
<path d="M431.2 561.0L-823.1 1088.7" stroke="url(#dmaj)" stroke-width="1.6"/>
<path d="M431.6 561.0L-716.8 1087.9" stroke="url(#dmaj)" stroke-width="1.6"/>
<path d="M432.0 561.0L-610.5 1087.1" stroke="url(#dmaj)" stroke-width="1.6"/>
<path d="M432.4 561.0L-504.1 1086.3" stroke="url(#dmaj)" stroke-width="1.6"/>
<path d="M432.8 561.0L-397.8 1085.4" stroke="url(#dmaj)" stroke-width="1.6"/>
<path d="M433.2 561.0L-291.5 1084.6" stroke="url(#dmaj)" stroke-width="1.6"/>
<path d="M433.6 561.0L-185.1 1083.8" stroke="url(#dmaj)" stroke-width="1.6"/>
<path d="M434.0 561.0L-78.8 1083.0" stroke="url(#dmaj)" stroke-width="1.6"/>
<path d="M434.4 561.0L27.6 1082.2" stroke="url(#dmaj)" stroke-width="1.6"/>
<path d="M434.8 561.0L133.9 1081.3" stroke="url(#dmaj)" stroke-width="1.6"/>
<path d="M435.2 561.0L240.2 1080.5" stroke="url(#dmaj)" stroke-width="1.6"/>
<path d="M435.7 561.0L346.6 1079.7" stroke="url(#dmaj)" stroke-width="1.6"/>
<path d="M436.1 561.0L452.9 1078.9" stroke="url(#dctr)" stroke-width="2.2"/>
<path d="M436.5 561.0L559.2 1078.1" stroke="url(#dmaj)" stroke-width="1.6"/>
<path d="M436.9 561.0L665.6 1077.2" stroke="url(#dmaj)" stroke-width="1.6"/>
<path d="M437.3 561.0L771.9 1076.4" stroke="url(#dmaj)" stroke-width="1.6"/>
<path d="M437.7 561.0L878.2 1075.6" stroke="url(#dmaj)" stroke-width="1.6"/>
<path d="M438.1 561.0L984.6 1074.8" stroke="url(#dmaj)" stroke-width="1.6"/>
<path d="M438.5 561.0L1090.9 1074.0" stroke="url(#dmaj)" stroke-width="1.6"/>
<path d="M438.9 561.0L1197.3 1073.2" stroke="url(#dmaj)" stroke-width="1.6"/>
<path d="M439.3 561.0L1303.6 1072.3" stroke="url(#dmaj)" stroke-width="1.6"/>
<path d="M439.7 561.0L1409.9 1071.5" stroke="url(#dmaj)" stroke-width="1.6"/>
<path d="M440.2 561.0L1516.3 1070.7" stroke="url(#dmaj)" stroke-width="1.6"/>
<path d="M440.6 561.0L1622.6 1069.9" stroke="url(#dmaj)" stroke-width="1.6"/>
<path d="M441.0 561.0L1728.9 1069.1" stroke="url(#dmaj)" stroke-width="1.6"/>
<path d="M441.4 561.0L1835.3 1068.2" stroke="url(#dmaj)" stroke-width="1.6"/>
<path d="M441.8 561.0L1941.6 1067.4" stroke="url(#dmaj)" stroke-width="1.6"/>
<path d="M442.2 561.0L2048.0 1066.6" stroke="url(#dmaj)" stroke-width="1.6"/>
<path d="M442.6 560.9L2154.3 1065.8" stroke="url(#dmaj)" stroke-width="1.6"/>
<path d="M443.0 560.9L2260.6 1065.0" stroke="url(#dmaj)" stroke-width="1.6"/>
<path d="M443.4 560.9L2367.0 1064.1" stroke="url(#dmaj)" stroke-width="1.6"/>
<path d="M443.8 560.9L2473.3 1063.3" stroke="url(#dmaj)" stroke-width="1.6"/>
<path d="M444.2 560.9L2579.6 1062.5" stroke="url(#dmaj)" stroke-width="1.6"/>
<path d="M444.7 560.9L2686.0 1061.7" stroke="url(#dmaj)" stroke-width="1.6"/>
<path d="M445.1 560.9L2792.3 1060.9" stroke="url(#dmaj)" stroke-width="1.6"/>
<path d="M445.5 560.9L2898.6 1060.1" stroke="url(#dmaj)" stroke-width="1.6"/>
<path d="M445.9 560.9L3005.0 1059.2" stroke="url(#dmaj)" stroke-width="1.6"/>
<path d="M446.3 560.9L3111.3 1058.4" stroke="url(#dmaj)" stroke-width="1.6"/>
<path d="M446.7 560.9L3217.7 1057.6" stroke="url(#dmaj)" stroke-width="1.6"/>
<path d="M447.1 560.9L3324.0 1056.8" stroke="url(#dmaj)" stroke-width="1.6"/>
<path d="M447.5 560.9L3430.3 1056.0" stroke="url(#dmaj)" stroke-width="1.6"/>
<path d="M447.9 560.9L3536.7 1055.1" stroke="url(#dmaj)" stroke-width="1.6"/>
<path d="M448.3 560.9L3643.0 1054.3" stroke="url(#dmaj)" stroke-width="1.6"/>
<path d="M448.7 560.9L3749.3 1053.5" stroke="url(#dmaj)" stroke-width="1.6"/>
<path d="M449.2 560.9L3855.7 1052.7" stroke="url(#dmaj)" stroke-width="1.6"/>
<path d="M449.6 560.9L3962.0 1051.9" stroke="url(#dmaj)" stroke-width="1.6"/>
<path d="M450.0 560.9L4068.4 1051.0" stroke="url(#dmaj)" stroke-width="1.6"/>
<path d="M450.4 560.9L4174.7 1050.2" stroke="url(#dmaj)" stroke-width="1.6"/>
<path d="M450.8 560.9L4281.0 1049.4" stroke="url(#dmaj)" stroke-width="1.6"/>
<path d="M451.2 560.9L4387.4 1048.6" stroke="url(#dmaj)" stroke-width="1.6"/>
<path d="M451.6 560.9L4493.7 1047.8" stroke="url(#dmaj)" stroke-width="1.6"/>
<path d="M452.0 560.9L4600.0 1047.0" stroke="url(#dmaj)" stroke-width="1.6"/>
<path d="M452.4 560.9L4706.4 1046.1" stroke="url(#dmaj)" stroke-width="1.6"/>
<path d="M452.8 560.9L4812.7 1045.3" stroke="url(#dmaj)" stroke-width="1.6"/>
<path d="M453.2 560.9L4919.0 1044.5" stroke="url(#dmaj)" stroke-width="1.6"/>
<path d="M453.7 560.9L5025.4 1043.7" stroke="url(#dmaj)" stroke-width="1.6"/>
<path d="M454.1 560.9L5131.7 1042.9" stroke="url(#dmaj)" stroke-width="1.6"/>
<path d="M454.5 560.9L5238.1 1042.0" stroke="url(#dmaj)" stroke-width="1.6"/>
<path d="M454.9 560.9L5344.4 1041.2" stroke="url(#dmaj)" stroke-width="1.6"/>
<path d="M455.3 560.9L5450.7 1040.4" stroke="url(#dmaj)" stroke-width="1.6"/>
<path d="M455.7 560.8L5557.1 1039.6" stroke="url(#dmaj)" stroke-width="1.6"/>
<path d="M456.1 560.8L5663.4 1038.8" stroke="url(#dmaj)" stroke-width="1.6"/>
<path d="M456.5 560.8L5769.7 1037.9" stroke="url(#dmaj)" stroke-width="1.6"/>
<path d="M456.9 560.8L5876.1 1037.1" stroke="url(#dmaj)" stroke-width="1.6"/>
<path d="M457.3 560.8L5982.4 1036.3" stroke="url(#dmaj)" stroke-width="1.6"/>
<path d="M457.7 560.8L6088.8 1035.5" stroke="url(#dmaj)" stroke-width="1.6"/>
<path d="M458.2 560.8L6195.1 1034.7" stroke="url(#dmaj)" stroke-width="1.6"/>
<path d="M458.6 560.8L6301.4 1033.9" stroke="url(#dmaj)" stroke-width="1.6"/>
<path d="M459.0 560.8L6407.8 1033.0" stroke="url(#dmaj)" stroke-width="1.6"/>
<path d="M459.4 560.8L6514.1 1032.2" stroke="url(#dmaj)" stroke-width="1.6"/>
<path d="M459.8 560.8L6620.4 1031.4" stroke="url(#dmaj)" stroke-width="1.6"/>
<path d="M460.2 560.8L6726.8 1030.6" stroke="url(#dmaj)" stroke-width="1.6"/>
<defs><linearGradient id="fog2" gradientUnits="userSpaceOnUse" x1="0" y1="555" x2="0" y2="780"><stop offset="0" stop-color="#232323" stop-opacity="1"/><stop offset="0.12" stop-color="#232323" stop-opacity="0.92"/><stop offset="0.30" stop-color="#232323" stop-opacity="0.6"/><stop offset="0.55" stop-color="#232323" stop-opacity="0.3"/><stop offset="1" stop-color="#232323" stop-opacity="0"/></linearGradient></defs>
<rect x="2" y="550" width="856" height="232" fill="url(#fog2)"/>
<path d="M2 0L858 0L858 555.8L2 562.3Z" fill="#000"/>
<defs><linearGradient id="hzsoft" x1="0" y1="0" x2="0" y2="1"><stop offset="0" stop-color="#000" stop-opacity="0.85"/><stop offset="1" stop-color="#000" stop-opacity="0"/></linearGradient></defs>
<path d="M2 562.3L858 555.8L858 564.8L2 571.3Z" fill="url(#hzsoft)"/>
<g><rect x="63.0" y="98.5" width="8" height="3" fill="#6a5ad0" transform="rotate(20 67.0 100.0)"/><rect x="316.5" y="134.5" width="7" height="9" fill="#20e0e0" transform="rotate(10 320.0 139.0)"/><rect x="143.1" y="168.1" width="5" height="5" fill="#f090c0" transform="rotate(0 145.6 170.6)"/><rect x="415.5" y="163.6" width="4" height="4" fill="#f090c0" transform="rotate(0 417.5 165.6)"/><rect x="553.5" y="110.5" width="9" height="4" fill="#70b0e0" transform="rotate(-20 558.0 112.5)"/><rect x="747.0" y="172.6" width="8" height="6" fill="#f030f0" transform="rotate(-30 751.0 175.6)"/><rect x="632.5" y="162.3" width="3" height="3" fill="#806080" transform="rotate(0 634.0 163.8)"/><rect x="54.7" y="199.8" width="7" height="5" fill="#5080e0" transform="rotate(15 58.2 202.3)"/><rect x="91.8" y="208.0" width="7" height="4" fill="#80e0a0" transform="rotate(10 95.3 210.0)"/><rect x="114.6" y="224.2" width="7" height="4" fill="#5060e0" transform="rotate(-30 118.1 226.2)"/><rect x="132.4" y="224.7" width="3" height="3" fill="#e0e020" transform="rotate(0 133.9 226.2)"/><rect x="146.1" y="235.3" width="5" height="3" fill="#f0f020" transform="rotate(88 148.6 236.8)"/><rect x="138.0" y="241.0" width="4" height="2" fill="#30a0f0" transform="rotate(60 140.0 242.0)"/><rect x="169.5" y="243.2" width="5" height="3" fill="#d040e0" transform="rotate(70 172.0 244.7)"/><rect x="70.7" y="246.1" width="4" height="3" fill="#f08040" transform="rotate(0 72.7 247.6)"/><rect x="94.2" y="244.2" width="5" height="1.5" fill="#30a0a0" transform="rotate(-65 96.7 245.0)"/><rect x="100.7" y="250.1" width="5" height="3" fill="#f06060" transform="rotate(-45 103.2 251.6)"/><rect x="112.3" y="259.8" width="4" height="2" fill="#c040e0" transform="rotate(30 114.3 260.8)"/><rect x="123.3" y="255.5" width="5" height="3" fill="#f02020" transform="rotate(88 125.8 257.0)"/><rect x="141.7" y="257.6" width="7" height="4" fill="#f0a020" transform="rotate(88 145.2 259.6)"/><rect x="166.7" y="258.8" width="9" height="5" fill="#f0f0b0" transform="rotate(-10 171.2 261.3)"/><rect x="166.5" y="264.1" width="6" height="3" fill="#30d0f0" transform="rotate(0 169.5 265.6)"/><rect x="135.5" y="266.0" width="7" height="6" fill="#f0f070" transform="rotate(-35 139.0 269.0)"/><rect x="121.1" y="267.7" width="6" height="2" fill="#40a090" transform="rotate(88 124.1 268.7)"/><rect x="184.9" y="270.9" width="5" height="3" fill="#30b0f0" transform="rotate(60 187.4 272.4)"/><rect x="162.7" y="275.2" width="5" height="2" fill="#f0b090" transform="rotate(-30 165.2 276.2)"/><rect x="38.6" y="283.1" width="10" height="5" fill="#20e0f0" transform="rotate(-55 43.6 285.6)"/><rect x="70.3" y="281.0" width="6" height="4" fill="#f0a0c0" transform="rotate(88 73.3 283.0)"/><rect x="98.5" y="279.5" width="5" height="3" fill="#3080f0" transform="rotate(20 101.0 281.0)"/><rect x="203.8" y="285.5" width="6" height="4" fill="#f0b0e0" transform="rotate(65 206.8 287.5)"/><rect x="177.6" y="288.1" width="6" height="3" fill="#30b0f0" transform="rotate(-70 180.6 289.6)"/><rect x="138.4" y="284.1" width="4" height="1.5" fill="#30a0c0" transform="rotate(-60 140.4 284.8)"/><rect x="144.0" y="286.2" width="3" height="1.5" fill="#40a080" transform="rotate(80 145.5 287.0)"/><rect x="101.6" y="298.3" width="4" height="3" fill="#3060f0" transform="rotate(0 103.6 299.8)"/><rect x="111.5" y="297.7" width="7" height="5" fill="#c0f0e0" transform="rotate(-60 115.0 300.2)"/><rect x="146.6" y="298.9" width="8" height="7" fill="#f01050" transform="rotate(-65 150.6 302.4)"/><rect x="172.7" y="294.6" width="9" height="7" fill="#a0b080" transform="rotate(-60 177.2 298.1)"/><rect x="163.5" y="300.6" width="12" height="7" fill="#f02070" transform="rotate(-25 169.5 304.1)"/><rect x="168.5" y="307.8" width="7" height="4" fill="#f0a0d0" transform="rotate(88 172.0 309.8)"/><rect x="183.6" y="298.3" width="6" height="3" fill="#6090c0" transform="rotate(88 186.6 299.8)"/><rect x="206.5" y="297.7" width="8" height="6" fill="#f040d0" transform="rotate(-38 210.5 300.7)"/><rect x="210.0" y="288.1" width="8" height="3" fill="#a040e0" transform="rotate(80 214.0 289.6)"/><rect x="157.9" y="309.6" width="6" height="1.5" fill="#8040a0" transform="rotate(60 160.9 310.4)"/><rect x="161.7" y="314.6" width="7" height="3" fill="#a0e0f0" transform="rotate(-20 165.2 316.1)"/><rect x="162.3" y="314.2" width="4" height="2" fill="#40c040" transform="rotate(-30 164.3 315.2)"/><rect x="165.3" y="318.7" width="6" height="4" fill="#f0b0e0" transform="rotate(88 168.3 320.7)"/><rect x="149.5" y="318.0" width="5" height="2" fill="#d0b090" transform="rotate(-65 152.0 319.0)"/><rect x="122.3" y="313.1" width="6" height="5" fill="#a0e0f8" transform="rotate(55 125.3 315.6)"/><rect x="94.1" y="318.6" width="12" height="7" fill="#a020f0" transform="rotate(-78 100.1 322.1)"/><rect x="104.3" y="318.7" width="7" height="5" fill="#a0e0f0" transform="rotate(-35 107.8 321.2)"/><rect x="107.5" y="323.0" width="11" height="5" fill="#d0b030" transform="rotate(88 113.0 325.5)"/><rect x="116.0" y="321.1" width="10" height="6" fill="#30c0a0" transform="rotate(-68 121.0 324.1)"/><rect x="73.9" y="319.4" width="9" height="7" fill="#f08020" transform="rotate(40 78.4 322.9)"/><rect x="78.0" y="316.8" width="5" height="3" fill="#c0f0f0" transform="rotate(-20 80.5 318.3)"/><rect x="136.2" y="322.3" width="10" height="7" fill="#b0a0f0" transform="rotate(70 141.2 325.8)"/><rect x="150.8" y="334.6" width="14" height="3" fill="#8030c0" transform="rotate(-28 157.8 336.1)"/><rect x="171.4" y="332.9" width="7" height="4" fill="#f0e0b0" transform="rotate(88 174.9 334.9)"/><rect x="180.0" y="335.3" width="8" height="5" fill="#f0c0e0" transform="rotate(66 184.0 337.8)"/><rect x="194.2" y="334.1" width="7" height="5" fill="#3060f0" transform="rotate(88 197.7 336.6)"/><rect x="25.4" y="332.1" width="16" height="9" fill="#f050f0" transform="rotate(-18 33.4 336.6)"/><rect x="37.1" y="327.3" width="8" height="5" fill="#b0b060" transform="rotate(-25 41.1 329.8)"/><rect x="81.5" y="333.1" width="11" height="8" fill="#c020f0" transform="rotate(63 87.0 337.1)"/><rect x="96.9" y="349.0" width="11" height="6" fill="#c0f020" transform="rotate(70 102.4 352.0)"/><rect x="107.3" y="347.1" width="8" height="4" fill="#e0a060" transform="rotate(88 111.3 349.1)"/><rect x="126.1" y="344.4" width="7" height="5" fill="#a0e020" transform="rotate(-56 129.6 346.9)"/><rect x="56.6" y="348.5" width="12" height="7" fill="#d0f0a0" transform="rotate(-22 62.6 352.0)"/><rect x="66.2" y="345.6" width="8" height="6" fill="#f0b0a0" transform="rotate(-56 70.2 348.6)"/><rect x="29.4" y="356.7" width="9" height="6" fill="#30f030" transform="rotate(-10 33.9 359.7)"/><rect x="134.5" y="352.7" width="10" height="9" fill="#a0f0d0" transform="rotate(-50 139.5 357.2)"/><rect x="126.6" y="357.6" width="7" height="6" fill="#30a0f0" transform="rotate(-40 130.1 360.6)"/><rect x="150.9" y="353.5" width="8" height="4" fill="#8040e0" transform="rotate(55 154.9 355.5)"/><rect x="153.8" y="355.0" width="9" height="6" fill="#30d0e0" transform="rotate(63 158.3 358.0)"/><rect x="165.1" y="346.1" width="7" height="5" fill="#b0e0a0" transform="rotate(88 168.6 348.6)"/><rect x="161.5" y="359.5" width="16" height="9" fill="#c0f0b0" transform="rotate(-43 169.5 364.0)"/><rect x="171.5" y="361.5" width="8" height="5" fill="#a0a0f0" transform="rotate(80 175.5 364.0)"/><rect x="201.9" y="350.5" width="7" height="3" fill="#d0a0e0" transform="rotate(88 205.4 352.0)"/><rect x="198.5" y="364.2" width="7" height="3" fill="#d0a080" transform="rotate(60 202.0 365.7)"/><rect x="62.4" y="363.6" width="8" height="6" fill="#e020f0" transform="rotate(-55 66.4 366.6)"/><rect x="18.9" y="365.6" width="6" height="2" fill="#30a0b0" transform="rotate(-60 21.9 366.6)"/><rect x="147.6" y="366.3" width="6" height="4" fill="#e030c0" transform="rotate(0 150.6 368.3)"/><rect x="226.5" y="204.0" width="5" height="5" fill="#f0f020" transform="rotate(30 229.0 206.5)"/><rect x="236.1" y="212.2" width="5" height="4" fill="#30f060" transform="rotate(88 238.6 214.2)"/><rect x="215.6" y="222.2" width="5" height="4" fill="#c0c040" transform="rotate(-40 218.1 224.2)"/><rect x="341.9" y="218.9" width="7" height="6" fill="#d0f080" transform="rotate(20 345.4 221.9)"/><rect x="392.1" y="206.2" width="6" height="4" fill="#b0e090" transform="rotate(-20 395.1 208.2)"/><rect x="351.3" y="211.0" width="3" height="3" fill="#f08020" transform="rotate(0 352.8 212.5)"/><rect x="336.7" y="242.8" width="10" height="8" fill="#c0f0b0" transform="rotate(35 341.7 246.8)"/><rect x="370.7" y="252.8" width="7" height="5" fill="#6040f0" transform="rotate(45 374.2 255.3)"/><rect x="272.8" y="251.3" width="6" height="4" fill="#f0b0f0" transform="rotate(52 275.8 253.3)"/><rect x="277.0" y="247.8" width="6" height="4" fill="#a0d0f0" transform="rotate(-60 280.0 249.8)"/><rect x="227.1" y="253.5" width="5" height="3" fill="#f08040" transform="rotate(88 229.6 255.0)"/><rect x="285.2" y="253.8" width="4" height="3" fill="#e08030" transform="rotate(0 287.2 255.3)"/><rect x="294.7" y="258.3" width="6" height="5" fill="#c0f060" transform="rotate(-20 297.7 260.8)"/><rect x="324.1" y="259.7" width="7" height="5" fill="#30d0f0" transform="rotate(45 327.6 262.2)"/><rect x="356.9" y="266.4" width="9" height="7" fill="#40c8f0" transform="rotate(60 361.4 269.9)"/><rect x="340.9" y="262.9" width="5" height="2" fill="#30a040" transform="rotate(80 343.4 263.9)"/><rect x="316.4" y="265.4" width="6" height="2" fill="#8030c0" transform="rotate(20 319.4 266.4)"/><rect x="243.3" y="271.8" width="5" height="3" fill="#30c0f0" transform="rotate(-40 245.8 273.3)"/><rect x="235.1" y="278.0" width="7" height="6" fill="#f040f0" transform="rotate(0 238.6 281.0)"/><rect x="213.6" y="285.6" width="8" height="8" fill="#a040f0" transform="rotate(0 217.6 289.6)"/><rect x="218.5" y="293.5" width="5" height="4" fill="#30b0e0" transform="rotate(0 221.0 295.5)"/><rect x="258.2" y="280.9" width="6" height="3" fill="#90e0a0" transform="rotate(60 261.2 282.4)"/><rect x="255.0" y="288.9" width="5" height="1.5" fill="#40a090" transform="rotate(-60 257.5 289.6)"/><rect x="263.0" y="288.6" width="5" height="2" fill="#60c0c0" transform="rotate(40 265.5 289.6)"/><rect x="307.0" y="275.2" width="6" height="3" fill="#30a0d0" transform="rotate(60 310.0 276.7)"/><rect x="322.1" y="276.4" width="5" height="3" fill="#30a0e0" transform="rotate(50 324.6 277.9)"/><rect x="331.0" y="281.1" width="7" height="5" fill="#a0a0f0" transform="rotate(88 334.5 283.6)"/><rect x="335.1" y="283.3" width="7" height="4" fill="#30d0c0" transform="rotate(88 338.6 285.3)"/><rect x="326.6" y="288.1" width="13" height="8" fill="#e0a020" transform="rotate(23 333.1 292.1)"/><rect x="313.8" y="286.8" width="6" height="2" fill="#b0b020" transform="rotate(-70 316.8 287.8)"/><rect x="366.4" y="290.5" width="7" height="5" fill="#f080c0" transform="rotate(50 369.9 293.0)"/><rect x="374.8" y="290.6" width="5" height="4" fill="#f0a0d0" transform="rotate(0 377.3 292.6)"/><rect x="353.2" y="295.8" width="5" height="3" fill="#a040d0" transform="rotate(80 355.7 297.3)"/><rect x="297.2" y="296.6" width="6" height="3" fill="#b0d020" transform="rotate(88 300.2 298.1)"/><rect x="282.3" y="297.4" width="4" height="1.5" fill="#40a0a0" transform="rotate(-60 284.3 298.1)"/><rect x="290.0" y="295.2" width="4" height="1.5" fill="#60b0a0" transform="rotate(-70 292.0 296.0)"/><rect x="240.7" y="297.4" width="5" height="1.5" fill="#a0c060" transform="rotate(80 243.2 298.1)"/><rect x="380.0" y="299.4" width="9" height="6" fill="#6040e0" transform="rotate(25 384.5 302.4)"/><rect x="410.9" y="296.8" width="8" height="6" fill="#30d060" transform="rotate(-30 414.9 299.8)"/><rect x="281.0" y="301.5" width="10" height="7" fill="#e0f0c0" transform="rotate(-80 286.0 305.0)"/><rect x="253.7" y="304.5" width="11" height="6" fill="#f0a0c0" transform="rotate(0 259.2 307.5)"/><rect x="269.6" y="306.5" width="14" height="9" fill="#c020f0" transform="rotate(70 276.6 311.0)"/><rect x="313.5" y="304.0" width="5" height="2" fill="#50b0a0" transform="rotate(70 316.0 305.0)"/><rect x="320.7" y="304.8" width="5" height="2" fill="#30a0c0" transform="rotate(50 323.2 305.8)"/><rect x="329.8" y="306.9" width="9" height="7" fill="#b0f0c0" transform="rotate(62 334.3 310.4)"/><rect x="296.0" y="304.8" width="5" height="2" fill="#b030a0" transform="rotate(-60 298.5 305.8)"/><rect x="303.4" y="307.7" width="4" height="2" fill="#8080e0" transform="rotate(80 305.4 308.7)"/><rect x="375.3" y="310.2" width="8" height="6" fill="#e0f020" transform="rotate(88 379.3 313.2)"/><rect x="407.0" y="308.5" width="9" height="6" fill="#a0f0c0" transform="rotate(-45 411.5 311.5)"/><rect x="249.0" y="313.2" width="8" height="4" fill="#d040d0" transform="rotate(-60 253.0 315.2)"/><rect x="255.6" y="314.6" width="6" height="3" fill="#a0c040" transform="rotate(-65 258.6 316.1)"/><rect x="260.3" y="317.0" width="7" height="6" fill="#e03030" transform="rotate(-50 263.8 320.0)"/><rect x="244.9" y="320.4" width="8" height="5" fill="#f0d030" transform="rotate(-55 248.9 322.9)"/><rect x="283.3" y="322.2" width="10" height="6" fill="#30e060" transform="rotate(88 288.3 325.2)"/><rect x="340.7" y="317.0" width="7" height="5" fill="#3060f0" transform="rotate(-45 344.2 319.5)"/><rect x="362.8" y="310.0" width="5" height="2" fill="#807020" transform="rotate(-40 365.3 311.0)"/><rect x="367.9" y="315.1" width="4" height="2" fill="#e07020" transform="rotate(-40 369.9 316.1)"/><rect x="354.1" y="322.9" width="10" height="7" fill="#30c0f0" transform="rotate(-47 359.1 326.4)"/><rect x="378.4" y="325.6" width="8" height="6" fill="#8090f0" transform="rotate(-33 382.4 328.6)"/><rect x="395.3" y="319.7" width="5" height="3" fill="#c0a0e0" transform="rotate(80 397.8 321.2)"/><rect x="410.9" y="320.1" width="6" height="4" fill="#30d0c0" transform="rotate(88 413.9 322.1)"/><rect x="408.9" y="330.2" width="11" height="7" fill="#f0e0b0" transform="rotate(88 414.4 333.7)"/><rect x="406.8" y="335.6" width="5" height="2" fill="#50a0a0" transform="rotate(-70 409.3 336.6)"/><rect x="320.8" y="329.3" width="11" height="6" fill="#3040e0" transform="rotate(-27 326.3 332.3)"/><rect x="333.5" y="327.1" width="6" height="2" fill="#40c040" transform="rotate(-75 336.5 328.1)"/><rect x="227.6" y="328.8" width="9" height="7" fill="#f0a090" transform="rotate(88 232.1 332.3)"/><rect x="240.1" y="338.1" width="8" height="5" fill="#f06020" transform="rotate(-35 244.1 340.6)"/><rect x="254.1" y="337.0" width="8" height="5" fill="#f040d0" transform="rotate(-43 258.1 339.5)"/><rect x="269.2" y="337.5" width="8" height="4" fill="#30c0f0" transform="rotate(-60 273.2 339.5)"/><rect x="291.6" y="337.2" width="7" height="4" fill="#f0a020" transform="rotate(88 295.1 339.2)"/><rect x="268.6" y="345.0" width="11" height="9" fill="#30f080" transform="rotate(55 274.1 349.5)"/><rect x="276.2" y="348.3" width="6" height="4" fill="#f0a0f0" transform="rotate(-40 279.2 350.3)"/><rect x="283.2" y="344.4" width="8" height="5" fill="#30d0f0" transform="rotate(-75 287.2 346.9)"/><rect x="296.7" y="348.5" width="6" height="2" fill="#40c040" transform="rotate(-60 299.7 349.5)"/><rect x="323.7" y="346.0" width="12" height="7" fill="#f030e0" transform="rotate(-25 329.7 349.5)"/><rect x="347.7" y="350.5" width="5" height="3" fill="#c0c060" transform="rotate(80 350.2 352.0)"/><rect x="379.1" y="341.7" width="9" height="7" fill="#b0f0f0" transform="rotate(88 383.6 345.2)"/><rect x="385.7" y="351.0" width="6" height="2" fill="#c030a0" transform="rotate(-40 388.7 352.0)"/><rect x="393.3" y="349.0" width="8" height="6" fill="#90f0b0" transform="rotate(-55 397.3 352.0)"/><rect x="406.6" y="341.8" width="7" height="5" fill="#e040d0" transform="rotate(40 410.1 344.3)"/><rect x="214.3" y="350.7" width="10" height="6" fill="#e030f0" transform="rotate(66 219.3 353.7)"/><rect x="239.4" y="351.0" width="6" height="2" fill="#a0c040" transform="rotate(80 242.4 352.0)"/><rect x="221.5" y="359.2" width="15" height="8" fill="#f0f090" transform="rotate(-50 229.0 363.2)"/><rect x="245.2" y="359.3" width="8" height="6" fill="#f0c020" transform="rotate(-56 249.2 362.3)"/><rect x="281.8" y="361.2" width="5" height="4" fill="#30e0f0" transform="rotate(0 284.3 363.2)"/><rect x="273.6" y="364.9" width="6" height="5" fill="#e0a0f0" transform="rotate(0 276.6 367.4)"/><rect x="312.5" y="363.6" width="7" height="6" fill="#a0c020" transform="rotate(-30 316.0 366.6)"/><rect x="334.0" y="360.2" width="12" height="6" fill="#60f040" transform="rotate(88 340.0 363.2)"/><rect x="329.1" y="361.0" width="8" height="6" fill="#f0a0c0" transform="rotate(30 333.1 364.0)"/><rect x="348.5" y="362.7" width="7" height="6" fill="#e040f0" transform="rotate(88 352.0 365.7)"/><rect x="361.8" y="360.3" width="7" height="4" fill="#7040e0" transform="rotate(-50 365.3 362.3)"/><rect x="424.1" y="214.2" width="8" height="7" fill="#3070e0" transform="rotate(-60 428.1 217.7)"/><rect x="425.1" y="273.4" width="6" height="5" fill="#b0a0f0" transform="rotate(0 428.1 275.9)"/><rect x="315.3" y="185.3" width="3" height="3" fill="#6040d0" transform="rotate(0 316.8 186.8)"/><rect x="523.9" y="190.8" width="5" height="4" fill="#3050e0" transform="rotate(88 526.4 192.8)"/><rect x="495.1" y="196.5" width="5" height="3" fill="#c080e0" transform="rotate(25 497.6 198.0)"/><rect x="505.9" y="199.4" width="5" height="3" fill="#9040d0" transform="rotate(30 508.4 200.9)"/><rect x="511.9" y="206.0" width="4" height="2" fill="#7030c0" transform="rotate(60 513.9 207.0)"/><rect x="525.6" y="212.3" width="9" height="8" fill="#d0a020" transform="rotate(40 530.1 216.3)"/><rect x="586.6" y="200.1" width="8" height="7" fill="#f020d0" transform="rotate(-30 590.6 203.6)"/><rect x="629.6" y="204.5" width="4" height="4" fill="#90c090" transform="rotate(0 631.6 206.5)"/><rect x="593.2" y="219.2" width="5" height="3" fill="#f0e020" transform="rotate(-20 595.7 220.7)"/><rect x="606.9" y="219.2" width="4" height="3" fill="#30d0f0" transform="rotate(0 608.9 220.7)"/><rect x="575.6" y="212.4" width="4" height="2" fill="#c080e0" transform="rotate(70 577.6 213.4)"/><rect x="618.1" y="228.2" width="10" height="7" fill="#c030f0" transform="rotate(-10 623.1 231.7)"/><rect x="511.7" y="237.8" width="7" height="5" fill="#f0f020" transform="rotate(0 515.2 240.3)"/><rect x="517.4" y="223.5" width="4" height="2" fill="#b0a020" transform="rotate(60 519.4 224.5)"/><rect x="519.1" y="229.0" width="5" height="2" fill="#40a0a0" transform="rotate(-70 521.6 230.0)"/><rect x="564.3" y="238.6" width="7" height="6" fill="#50c060" transform="rotate(-55 567.8 241.6)"/><rect x="576.1" y="232.9" width="5" height="2" fill="#c0b040" transform="rotate(80 578.6 233.9)"/><rect x="580.7" y="236.4" width="5" height="3" fill="#d0d080" transform="rotate(60 583.2 237.9)"/><rect x="560.4" y="249.3" width="9" height="7" fill="#30d0d0" transform="rotate(88 564.9 252.8)"/><rect x="541.5" y="249.8" width="8" height="7" fill="#6040f0" transform="rotate(30 545.5 253.3)"/><rect x="537.4" y="247.0" width="5" height="3" fill="#30c0d0" transform="rotate(60 539.9 248.5)"/><rect x="538.9" y="241.8" width="3" height="3" fill="#80b0f0" transform="rotate(0 540.4 243.3)"/><rect x="526.9" y="244.9" width="4" height="2" fill="#a040d0" transform="rotate(70 528.9 245.9)"/><rect x="628.1" y="245.8" width="5" height="2" fill="#30b040" transform="rotate(-10 630.6 246.8)"/><rect x="565.3" y="266.7" width="6" height="3" fill="#5090c0" transform="rotate(60 568.3 268.2)"/><rect x="553.7" y="275.7" width="6" height="3" fill="#c0e030" transform="rotate(-45 556.7 277.2)"/><rect x="596.6" y="259.0" width="4" height="3" fill="#e0e080" transform="rotate(0 598.6 260.5)"/><rect x="606.0" y="264.4" width="4" height="3" fill="#e0a020" transform="rotate(-60 608.0 265.9)"/><rect x="593.9" y="265.4" width="5" height="2" fill="#d09060" transform="rotate(0 596.4 266.4)"/><rect x="527.9" y="279.1" width="13" height="9" fill="#30e0e0" transform="rotate(30 534.4 283.6)"/><rect x="521.9" y="285.2" width="8" height="6" fill="#f090b0" transform="rotate(-75 525.9 288.2)"/><rect x="517.9" y="289.6" width="5" height="5" fill="#30e060" transform="rotate(0 520.4 292.1)"/><rect x="542.5" y="287.2" width="6" height="2" fill="#d08070" transform="rotate(60 545.5 288.2)"/><rect x="512.2" y="285.1" width="5" height="2" fill="#6040d0" transform="rotate(-70 514.7 286.1)"/><rect x="485.6" y="291.3" width="7" height="5" fill="#c030f0" transform="rotate(-45 489.1 293.8)"/><rect x="500.6" y="287.9" width="7" height="5" fill="#90c0f0" transform="rotate(88 504.1 290.4)"/><rect x="495.5" y="296.0" width="6" height="5" fill="#a0d0b0" transform="rotate(0 498.5 298.5)"/><rect x="547.4" y="292.9" width="10" height="7" fill="#30d030" transform="rotate(-45 552.4 296.4)"/><rect x="565.3" y="298.3" width="5" height="3" fill="#3060e0" transform="rotate(88 567.8 299.8)"/><rect x="570.5" y="295.5" width="10" height="7" fill="#f0f0b0" transform="rotate(38 575.5 299.0)"/><rect x="578.0" y="290.1" width="6" height="3" fill="#30d0a0" transform="rotate(-60 581.0 291.6)"/><rect x="572.1" y="306.5" width="5" height="3" fill="#a0e0c0" transform="rotate(40 574.6 308.0)"/><rect x="534.7" y="307.4" width="8" height="6" fill="#f0e0c0" transform="rotate(0 538.7 310.4)"/><rect x="552.1" y="315.9" width="5" height="2" fill="#3080c0" transform="rotate(60 554.6 316.9)"/><rect x="574.8" y="317.0" width="10" height="6" fill="#c040f0" transform="rotate(25 579.8 320.0)"/><rect x="580.9" y="319.6" width="8" height="5" fill="#80f0c0" transform="rotate(-40 584.9 322.1)"/><rect x="587.3" y="315.0" width="9" height="4" fill="#c090e0" transform="rotate(56 591.8 317.0)"/><rect x="604.0" y="297.3" width="8" height="5" fill="#e0e0b0" transform="rotate(10 608.0 299.8)"/><rect x="611.9" y="299.9" width="6" height="5" fill="#30e0c0" transform="rotate(0 614.9 302.4)"/><rect x="608.1" y="288.1" width="5" height="3" fill="#30c0f0" transform="rotate(-60 610.6 289.6)"/><rect x="611.5" y="291.5" width="5" height="3" fill="#e080d0" transform="rotate(-70 614.0 293.0)"/><rect x="629.0" y="287.2" width="6" height="3" fill="#a0a0f0" transform="rotate(40 632.0 288.7)"/><rect x="603.2" y="305.0" width="8" height="6" fill="#e0a030" transform="rotate(-65 607.2 308.0)"/><rect x="608.3" y="313.1" width="8" height="6" fill="#a0f0c0" transform="rotate(80 612.3 316.1)"/><rect x="621.0" y="309.1" width="9" height="6" fill="#a0a0f0" transform="rotate(-37 625.5 312.1)"/><rect x="606.6" y="324.4" width="8" height="4" fill="#d0a0f0" transform="rotate(28 610.6 326.4)"/><rect x="615.6" y="327.9" width="6" height="2" fill="#3070c0" transform="rotate(-65 618.6 328.9)"/><rect x="440.4" y="324.0" width="6" height="3" fill="#e0b080" transform="rotate(88 443.4 325.5)"/><rect x="465.0" y="328.8" width="7" height="3" fill="#c030a0" transform="rotate(88 468.5 330.3)"/><rect x="470.3" y="313.4" width="5" height="2" fill="#c08020" transform="rotate(60 472.8 314.4)"/><rect x="489.7" y="324.6" width="9" height="6" fill="#3090f0" transform="rotate(-60 494.2 327.6)"/><rect x="492.1" y="332.3" width="10" height="7" fill="#d09080" transform="rotate(88 497.1 335.8)"/><rect x="493.4" y="337.0" width="5" height="6" fill="#b0f0b0" transform="rotate(0 495.9 340.0)"/><rect x="493.0" y="341.8" width="4" height="5" fill="#30e0c0" transform="rotate(0 495.0 344.3)"/><rect x="478.4" y="335.7" width="10" height="7" fill="#f020f0" transform="rotate(62 483.4 339.2)"/><rect x="502.3" y="339.1" width="6" height="3" fill="#f0d020" transform="rotate(88 505.3 340.6)"/><rect x="526.6" y="324.9" width="6" height="3" fill="#e030a0" transform="rotate(88 529.6 326.4)"/><rect x="524.9" y="333.1" width="7" height="2" fill="#e080c0" transform="rotate(-30 528.4 334.1)"/><rect x="556.1" y="334.5" width="8" height="6" fill="#30a0e0" transform="rotate(-80 560.1 337.5)"/><rect x="583.6" y="336.1" width="5" height="2" fill="#30c080" transform="rotate(-70 586.1 337.1)"/><rect x="592.7" y="339.9" width="6" height="2" fill="#3060c0" transform="rotate(-70 595.7 340.9)"/><rect x="571.2" y="344.5" width="8" height="3" fill="#d09090" transform="rotate(75 575.2 346.0)"/><rect x="585.1" y="349.6" width="15" height="10" fill="#60f040" transform="rotate(88 592.6 354.6)"/><rect x="432.0" y="355.4" width="8" height="6" fill="#6030d0" transform="rotate(45 436.0 358.4)"/><rect x="443.1" y="350.7" width="8" height="6" fill="#80f0e0" transform="rotate(65 447.1 353.7)"/><rect x="499.1" y="354.5" width="5" height="2" fill="#e08020" transform="rotate(-45 501.6 355.5)"/><rect x="518.8" y="353.3" width="10" height="6" fill="#e08080" transform="rotate(88 523.8 356.3)"/><rect x="537.4" y="355.4" width="7" height="6" fill="#a0a0f0" transform="rotate(10 540.9 358.4)"/><rect x="564.2" y="361.0" width="9" height="6" fill="#b0d040" transform="rotate(60 568.7 364.0)"/><rect x="554.0" y="362.2" width="7" height="6" fill="#a030e0" transform="rotate(0 557.5 365.2)"/><rect x="539.1" y="364.1" width="6" height="5" fill="#e040c0" transform="rotate(0 542.1 366.6)"/><rect x="592.2" y="363.2" width="6" height="5" fill="#30c0f0" transform="rotate(0 595.2 365.7)"/><rect x="598.9" y="362.7" width="8" height="6" fill="#f0a0c0" transform="rotate(-55 602.9 365.7)"/><rect x="614.5" y="351.0" width="7" height="2" fill="#4060c0" transform="rotate(-65 618.0 352.0)"/><rect x="635.2" y="340.1" width="8" height="5" fill="#f0d020" transform="rotate(88 639.2 342.6)"/><rect x="447.5" y="365.8" width="6" height="5" fill="#c0c0f0" transform="rotate(0 450.5 368.3)"/><rect x="454.4" y="364.9" width="6" height="5" fill="#f01030" transform="rotate(0 457.4 367.4)"/><rect x="642.0" y="230.7" width="4" height="3" fill="#30c0c0" transform="rotate(0 644.0 232.2)"/><rect x="677.3" y="184.1" width="9" height="9" fill="#d0b020" transform="rotate(45 681.8 188.6)"/><rect x="689.8" y="201.8" width="8" height="7" fill="#9090d0" transform="rotate(45 693.8 205.3)"/><rect x="709.1" y="204.2" width="6" height="3" fill="#f080c0" transform="rotate(25 712.1 205.7)"/><rect x="712.5" y="208.3" width="7" height="5" fill="#3060f0" transform="rotate(20 716.0 210.8)"/><rect x="661.9" y="214.5" width="10" height="8" fill="#e020e0" transform="rotate(30 666.9 218.5)"/><rect x="688.1" y="214.8" width="8" height="4" fill="#e090e0" transform="rotate(5 692.1 216.8)"/><rect x="789.1" y="196.7" width="7" height="6" fill="#f0b090" transform="rotate(30 792.6 199.7)"/><rect x="832.1" y="210.7" width="12" height="7" fill="#f0a0a0" transform="rotate(0 838.1 214.2)"/><rect x="756.0" y="191.0" width="4" height="2" fill="#c060c0" transform="rotate(80 758.0 192.0)"/><rect x="765.9" y="209.5" width="4" height="2" fill="#3080d0" transform="rotate(60 767.9 210.5)"/><rect x="836.4" y="228.5" width="4" height="3" fill="#f0e080" transform="rotate(30 838.4 230.0)"/><rect x="644.4" y="230.7" width="4" height="3" fill="#30c0c0" transform="rotate(0 646.4 232.2)"/><rect x="653.3" y="232.0" width="4" height="2" fill="#30a0c0" transform="rotate(0 655.3 233.0)"/><rect x="660.5" y="230.7" width="5" height="3" fill="#3090d0" transform="rotate(0 663.0 232.2)"/><rect x="655.7" y="234.5" width="6" height="4" fill="#f0e020" transform="rotate(88 658.7 236.5)"/><rect x="658.5" y="240.0" width="9" height="5" fill="#e0e020" transform="rotate(-65 663.0 242.5)"/><rect x="704.3" y="228.1" width="3" height="3" fill="#c03020" transform="rotate(0 705.8 229.6)"/><rect x="714.6" y="233.4" width="4" height="2" fill="#a060c0" transform="rotate(80 716.6 234.4)"/><rect x="717.5" y="242.2" width="3" height="3" fill="#e0d020" transform="rotate(0 719.0 243.7)"/><rect x="767.8" y="234.1" width="6" height="4" fill="#e0b0f0" transform="rotate(50 770.8 236.1)"/><rect x="770.4" y="235.9" width="10" height="8" fill="#30e070" transform="rotate(-70 775.4 239.9)"/><rect x="763.4" y="247.3" width="8" height="5" fill="#c0e040" transform="rotate(65 767.4 249.8)"/><rect x="754.6" y="249.5" width="4" height="4" fill="#3060e0" transform="rotate(0 756.6 251.5)"/><rect x="826.9" y="243.5" width="6" height="3" fill="#8050d0" transform="rotate(30 829.9 245.0)"/><rect x="804.7" y="257.3" width="10" height="8" fill="#30b0a0" transform="rotate(40 809.7 261.3)"/><rect x="780.4" y="254.3" width="3" height="2" fill="#30c0c0" transform="rotate(0 781.9 255.3)"/><rect x="789.9" y="254.7" width="3" height="2" fill="#308080" transform="rotate(0 791.4 255.7)"/><rect x="849.0" y="269.6" width="7" height="5" fill="#d0f060" transform="rotate(35 852.5 272.1)"/><rect x="705.0" y="262.9" width="5" height="2" fill="#c030c0" transform="rotate(40 707.5 263.9)"/><rect x="644.4" y="262.9" width="4" height="2" fill="#c030c0" transform="rotate(30 646.4 263.9)"/><rect x="732.9" y="263.2" width="5" height="3" fill="#c0c040" transform="rotate(80 735.4 264.7)"/><rect x="696.3" y="268.4" width="7" height="4" fill="#f030d0" transform="rotate(-60 699.8 270.4)"/><rect x="690.9" y="271.4" width="4" height="2" fill="#8030a0" transform="rotate(70 692.9 272.4)"/><rect x="669.8" y="270.3" width="8" height="7" fill="#f090c0" transform="rotate(45 673.8 273.8)"/><rect x="695.2" y="275.7" width="5" height="3" fill="#c0c040" transform="rotate(88 697.7 277.2)"/><rect x="654.1" y="274.0" width="5" height="2" fill="#50a040" transform="rotate(-70 656.6 275.0)"/><rect x="767.5" y="268.9" width="5" height="3" fill="#c0e0c0" transform="rotate(88 770.0 270.4)"/><rect x="719.7" y="282.3" width="8" height="6" fill="#f05020" transform="rotate(50 723.7 285.3)"/><rect x="667.8" y="283.4" width="5" height="2" fill="#80a040" transform="rotate(-70 670.3 284.4)"/><rect x="660.0" y="287.7" width="5" height="3" fill="#30c0d0" transform="rotate(88 662.5 289.2)"/><rect x="659.6" y="292.8" width="5" height="2" fill="#d080c0" transform="rotate(80 662.1 293.8)"/><rect x="654.3" y="295.4" width="6" height="2" fill="#c030c0" transform="rotate(-40 657.3 296.4)"/><rect x="708.0" y="282.6" width="4" height="2" fill="#8040a0" transform="rotate(60 710.0 283.6)"/><rect x="709.1" y="292.0" width="6" height="2" fill="#30a0b0" transform="rotate(-60 712.1 293.0)"/><rect x="728.4" y="290.1" width="6" height="3" fill="#e03080" transform="rotate(-30 731.4 291.6)"/><rect x="711.3" y="296.0" width="6" height="5" fill="#d0a020" transform="rotate(30 714.3 298.5)"/><rect x="716.5" y="301.2" width="5" height="4" fill="#f0b0a0" transform="rotate(60 719.0 303.2)"/><rect x="724.3" y="294.9" width="4" height="3" fill="#e0c020" transform="rotate(60 726.3 296.4)"/><rect x="760.3" y="283.0" width="9" height="7" fill="#30a0f0" transform="rotate(38 764.8 286.5)"/><rect x="751.2" y="292.0" width="6" height="2" fill="#a0b060" transform="rotate(88 754.2 293.0)"/><rect x="761.5" y="292.3" width="6" height="2" fill="#70c0a0" transform="rotate(50 764.5 293.3)"/><rect x="769.0" y="295.6" width="6" height="5" fill="#30c0b0" transform="rotate(60 772.0 298.1)"/><rect x="771.0" y="282.1" width="4" height="3" fill="#d090c0" transform="rotate(0 773.0 283.6)"/><rect x="776.9" y="292.5" width="10" height="6" fill="#f0b060" transform="rotate(-80 781.9 295.5)"/><rect x="813.5" y="286.7" width="7" height="5" fill="#a0a0f0" transform="rotate(70 817.0 289.2)"/><rect x="821.6" y="306.5" width="8" height="3" fill="#8030d0" transform="rotate(42 825.6 308.0)"/><rect x="647.9" y="305.6" width="12" height="9" fill="#f080c0" transform="rotate(-48 653.9 310.1)"/><rect x="669.5" y="299.7" width="11" height="7" fill="#f020f0" transform="rotate(88 675.0 303.2)"/><rect x="672.5" y="310.0" width="5" height="2" fill="#f080c0" transform="rotate(-70 675.0 311.0)"/><rect x="680.5" y="307.4" width="7" height="6" fill="#e0a0f0" transform="rotate(-20 684.0 310.4)"/><rect x="705.0" y="304.7" width="6" height="4" fill="#c0d0f0" transform="rotate(-10 708.0 306.7)"/><rect x="740.4" y="303.1" width="7" height="3" fill="#f0a0c0" transform="rotate(20 743.9 304.6)"/><rect x="748.0" y="311.9" width="9" height="6" fill="#80f0d0" transform="rotate(88 752.5 314.9)"/><rect x="758.8" y="317.0" width="7" height="5" fill="#e040f0" transform="rotate(88 762.3 319.5)"/><rect x="740.4" y="318.0" width="7" height="3" fill="#d040d0" transform="rotate(80 743.9 319.5)"/><rect x="709.1" y="322.9" width="8" height="7" fill="#60f040" transform="rotate(0 713.1 326.4)"/><rect x="707.5" y="313.5" width="16" height="11" fill="#30b0f0" transform="rotate(70 715.5 319.0)"/><rect x="651.1" y="323.3" width="9" height="5" fill="#a040f0" transform="rotate(-58 655.6 325.8)"/><rect x="663.4" y="325.6" width="6" height="5" fill="#50f040" transform="rotate(-40 666.4 328.1)"/><rect x="656.2" y="330.7" width="9" height="5" fill="#3090d0" transform="rotate(35 660.7 333.2)"/><rect x="674.0" y="326.9" width="7" height="4" fill="#b0f0b0" transform="rotate(-65 677.5 328.9)"/><rect x="691.3" y="332.7" width="6" height="2" fill="#3050c0" transform="rotate(-55 694.3 333.7)"/><rect x="644.1" y="331.6" width="7" height="5" fill="#f0a0c0" transform="rotate(70 647.6 334.1)"/><rect x="659.7" y="341.0" width="9" height="6" fill="#f0e060" transform="rotate(-70 664.2 344.0)"/><rect x="682.9" y="338.1" width="7" height="5" fill="#20e0d0" transform="rotate(-40 686.4 340.6)"/><rect x="706.2" y="345.4" width="5" height="3" fill="#30b0d0" transform="rotate(-65 708.7 346.9)"/><rect x="786.4" y="325.4" width="11" height="7" fill="#30a8e0" transform="rotate(40 791.9 328.9)"/><rect x="801.9" y="323.9" width="8" height="6" fill="#c0f020" transform="rotate(88 805.9 326.9)"/><rect x="748.3" y="338.0" width="9" height="4" fill="#5080e0" transform="rotate(26 752.8 340.0)"/><rect x="767.2" y="346.1" width="9" height="6" fill="#30e8f0" transform="rotate(88 771.7 349.1)"/><rect x="713.3" y="353.0" width="10" height="6" fill="#e0d090" transform="rotate(88 718.3 356.0)"/><rect x="719.7" y="356.0" width="8" height="4" fill="#d090c0" transform="rotate(88 723.7 358.0)"/><rect x="705.0" y="356.9" width="6" height="4" fill="#3090f0" transform="rotate(60 708.0 358.9)"/><rect x="659.1" y="358.6" width="6" height="4" fill="#a0d0f0" transform="rotate(88 662.1 360.6)"/><rect x="725.0" y="363.2" width="7" height="5" fill="#90f0b0" transform="rotate(60 728.5 365.7)"/><rect x="793.5" y="365.8" width="6" height="5" fill="#e06020" transform="rotate(0 796.5 368.3)"/><rect x="747.1" y="179.5" width="3" height="2" fill="#8040c0" transform="rotate(0 748.6 180.5)"/><rect x="60.2" y="369.6" width="7" height="6" fill="#f020f0" transform="rotate(-70 63.7 372.6)"/><rect x="59.7" y="382.6" width="8" height="5" fill="#5090f0" transform="rotate(-5 63.7 385.1)"/><rect x="69.1" y="378.6" width="9" height="6" fill="#20e0d0" transform="rotate(-60 73.6 381.6)"/><rect x="72.1" y="402.7" width="16" height="14" fill="#50b8c0" transform="rotate(60 80.1 409.7)"/><rect x="107.3" y="378.1" width="8" height="5" fill="#30c0d0" transform="rotate(88 111.3 380.6)"/><rect x="106.6" y="386.2" width="11" height="7" fill="#e8f0a0" transform="rotate(-30 112.1 389.7)"/><rect x="133.8" y="383.2" width="8" height="5" fill="#5030f0" transform="rotate(88 137.8 385.7)"/><rect x="145.3" y="379.8" width="8" height="5" fill="#b0c030" transform="rotate(-38 149.3 382.3)"/><rect x="143.1" y="396.5" width="11" height="7" fill="#f020e0" transform="rotate(-55 148.6 400.0)"/><rect x="144.9" y="369.7" width="8" height="4" fill="#e02090" transform="rotate(-25 148.9 371.7)"/><rect x="165.6" y="368.9" width="6" height="4" fill="#90e090" transform="rotate(0 168.6 370.9)"/><rect x="180.7" y="372.1" width="10" height="6" fill="#e0b0f0" transform="rotate(-60 185.7 375.1)"/><rect x="199.0" y="378.7" width="18" height="10" fill="#c0f020" transform="rotate(-52 208.0 383.7)"/><rect x="200.5" y="385.5" width="7" height="7" fill="#e0f080" transform="rotate(0 204.0 389.0)"/><rect x="182.4" y="386.2" width="10" height="7" fill="#20b090" transform="rotate(-30 187.4 389.7)"/><rect x="175.1" y="398.0" width="10" height="5" fill="#f0f0b0" transform="rotate(88 180.1 400.5)"/><rect x="191.0" y="405.5" width="10" height="6" fill="#a0e090" transform="rotate(88 196.0 408.5)"/><rect x="121.9" y="420.9" width="13" height="7" fill="#b0a0f0" transform="rotate(88 128.4 424.4)"/><rect x="122.5" y="422.9" width="11" height="3" fill="#f0a0f0" transform="rotate(-55 128.0 424.4)"/><rect x="148.7" y="416.3" width="10" height="5" fill="#b080d0" transform="rotate(88 153.7 418.8)"/><rect x="166.2" y="424.0" width="10" height="5" fill="#e080c0" transform="rotate(80 171.2 426.5)"/><rect x="146.1" y="431.2" width="9" height="6" fill="#c050e0" transform="rotate(-62 150.6 434.2)"/><rect x="149.2" y="443.0" width="8" height="4" fill="#30c0b0" transform="rotate(-55 153.2 445.0)"/><rect x="6.3" y="437.1" width="20" height="9" fill="#b020c0" transform="rotate(-22 16.3 441.6)"/><rect x="32.8" y="430.5" width="9" height="4" fill="#b080c0" transform="rotate(-40 37.3 432.5)"/><rect x="56.5" y="433.4" width="11" height="4" fill="#f020f0" transform="rotate(-68 62.0 435.4)"/><rect x="12.0" y="452.4" width="12" height="7" fill="#b0b0f0" transform="rotate(-52 18.0 455.9)"/><rect x="70.0" y="449.3" width="9" height="5" fill="#c0d020" transform="rotate(0 74.5 451.8)"/><rect x="82.7" y="456.9" width="12" height="7" fill="#a0f020" transform="rotate(-65 88.7 460.4)"/><rect x="80.7" y="467.6" width="7" height="5" fill="#f030c0" transform="rotate(-30 84.2 470.1)"/><rect x="59.2" y="472.8" width="10" height="5" fill="#c0e0f0" transform="rotate(85 64.2 475.3)"/><rect x="41.6" y="477.6" width="10" height="9" fill="#f06020" transform="rotate(-30 46.6 482.1)"/><rect x="38.6" y="480.3" width="18" height="8" fill="#f09020" transform="rotate(-15 47.6 484.3)"/><rect x="32.1" y="491.7" width="6" height="3" fill="#e020f0" transform="rotate(-70 35.1 493.2)"/><rect x="1.7" y="498.0" width="12" height="6" fill="#20e0f0" transform="rotate(0 7.7 501.0)"/><rect x="95.1" y="480.6" width="17" height="11" fill="#d090f0" transform="rotate(-73 103.6 486.1)"/><rect x="125.8" y="466.1" width="12" height="7" fill="#f0a040" transform="rotate(-72 131.8 469.6)"/><rect x="122.4" y="485.1" width="12" height="6" fill="#f08010" transform="rotate(-12 128.4 488.1)"/><rect x="170.2" y="470.1" width="13" height="7" fill="#80f030" transform="rotate(-66 176.7 473.6)"/><rect x="177.8" y="471.8" width="10" height="6" fill="#f01050" transform="rotate(-75 182.8 474.8)"/><rect x="197.8" y="467.1" width="9" height="6" fill="#c0c080" transform="rotate(-60 202.3 470.1)"/><rect x="194.2" y="476.7" width="8" height="4" fill="#40b0c0" transform="rotate(-50 198.2 478.7)"/><rect x="202.5" y="473.5" width="12" height="6" fill="#e0a0f0" transform="rotate(85 208.5 476.5)"/><rect x="175.9" y="486.5" width="11" height="6" fill="#c0f0a0" transform="rotate(85 181.4 489.5)"/><rect x="193.4" y="489.9" width="13" height="6" fill="#f0d0b0" transform="rotate(88 199.9 492.9)"/><rect x="189.1" y="503.1" width="12" height="6" fill="#a0f0c0" transform="rotate(65 195.1 506.1)"/><rect x="193.4" y="509.4" width="12" height="7" fill="#d080c0" transform="rotate(-75 199.4 512.9)"/><rect x="182.7" y="512.9" width="13" height="7" fill="#f0f020" transform="rotate(-58 189.2 516.4)"/><rect x="170.9" y="521.3" width="16" height="9" fill="#f0b080" transform="rotate(-50 178.9 525.8)"/><rect x="138.4" y="520.2" width="10" height="6" fill="#80f0a0" transform="rotate(85 143.4 523.2)"/><rect x="67.6" y="525.9" width="12" height="6" fill="#a0f0f0" transform="rotate(-63 73.6 528.9)"/><rect x="81.1" y="522.6" width="13" height="7" fill="#b0c0f0" transform="rotate(-80 87.6 526.1)"/><rect x="93.3" y="527.6" width="12" height="6" fill="#f080c0" transform="rotate(-72 99.3 530.6)"/><rect x="97.4" y="538.0" width="14" height="7" fill="#d020f0" transform="rotate(-72 104.4 541.5)"/><rect x="116.4" y="538.5" width="13" height="7" fill="#50c0c0" transform="rotate(58 122.9 542.0)"/><rect x="84.1" y="537.8" width="7" height="4" fill="#e0a060" transform="rotate(40 87.6 539.8)"/><rect x="57.4" y="542.2" width="17" height="9" fill="#f020e0" transform="rotate(-15 65.9 546.7)"/><rect x="74.1" y="546.4" width="12" height="6" fill="#90b0a0" transform="rotate(-78 80.1 549.4)"/><rect x="67.9" y="553.6" width="8" height="6" fill="#30c090" transform="rotate(-40 71.9 556.6)"/><rect x="127.3" y="551.9" width="9" height="6" fill="#3070d0" transform="rotate(-55 131.8 554.9)"/><rect x="187.9" y="551.5" width="11" height="6" fill="#d0a0e0" transform="rotate(85 193.4 554.5)"/><rect x="10.3" y="518.8" width="4" height="2" fill="#c0a020" transform="rotate(-20 12.3 519.8)"/><rect x="212.7" y="372.8" width="8" height="8" fill="#a0f020" transform="rotate(0 216.7 376.8)"/><rect x="255.6" y="372.1" width="6" height="6" fill="#30f060" transform="rotate(0 258.6 375.1)"/><rect x="252.6" y="378.0" width="12" height="8" fill="#b0f0d0" transform="rotate(-50 258.6 382.0)"/><rect x="234.6" y="386.5" width="8" height="4" fill="#30c0a0" transform="rotate(88 238.6 388.5)"/><rect x="238.2" y="388.8" width="10" height="7" fill="#c080f0" transform="rotate(-70 243.2 392.3)"/><rect x="242.2" y="399.2" width="8" height="6" fill="#30e0f0" transform="rotate(-70 246.2 402.2)"/><rect x="264.4" y="390.1" width="8" height="6" fill="#30e0a0" transform="rotate(-20 268.4 393.1)"/><rect x="266.9" y="400.7" width="12" height="7" fill="#3050f0" transform="rotate(-60 272.9 404.2)"/><rect x="290.8" y="383.3" width="10" height="7" fill="#f0a020" transform="rotate(65 295.8 386.8)"/><rect x="282.9" y="400.5" width="8" height="4" fill="#e08070" transform="rotate(88 286.9 402.5)"/><rect x="217.7" y="407.7" width="10" height="6" fill="#f09020" transform="rotate(85 222.7 410.7)"/><rect x="254.6" y="412.9" width="7" height="5" fill="#f020c0" transform="rotate(-35 258.1 415.4)"/><rect x="262.2" y="418.5" width="9" height="5" fill="#e0c090" transform="rotate(-50 266.7 421.0)"/><rect x="218.7" y="426.6" width="8" height="5" fill="#3070f0" transform="rotate(88 222.7 429.1)"/><rect x="235.0" y="424.3" width="8" height="6" fill="#60f040" transform="rotate(30 239.0 427.3)"/><rect x="239.6" y="428.0" width="8" height="5" fill="#60d0f0" transform="rotate(30 243.6 430.5)"/><rect x="236.8" y="431.0" width="5" height="4" fill="#f0a0f0" transform="rotate(0 239.3 433.0)"/><rect x="275.2" y="428.1" width="7" height="3" fill="#d0a0c0" transform="rotate(70 278.7 429.6)"/><rect x="296.1" y="422.6" width="9" height="5" fill="#f030d0" transform="rotate(0 300.6 425.1)"/><rect x="315.4" y="399.2" width="8" height="6" fill="#b0c040" transform="rotate(-70 319.4 402.2)"/><rect x="326.6" y="395.8" width="9" height="6" fill="#f090a0" transform="rotate(70 331.1 398.8)"/><rect x="324.6" y="407.1" width="13" height="8" fill="#b0f090" transform="rotate(66 331.1 411.1)"/><rect x="326.8" y="418.2" width="11" height="8" fill="#30e080" transform="rotate(-47 332.3 422.2)"/><rect x="317.5" y="416.8" width="8" height="4" fill="#f0a0f0" transform="rotate(60 321.5 418.8)"/><rect x="338.5" y="420.7" width="8" height="3" fill="#c080f0" transform="rotate(60 342.5 422.2)"/><rect x="332.9" y="373.8" width="10" height="6" fill="#a090e0" transform="rotate(88 337.9 376.8)"/><rect x="309.9" y="374.3" width="7" height="5" fill="#d0b0f0" transform="rotate(0 313.4 376.8)"/><rect x="312.6" y="369.4" width="5" height="4" fill="#a0e020" transform="rotate(0 315.1 371.4)"/><rect x="348.1" y="369.4" width="6" height="4" fill="#e040e0" transform="rotate(0 351.1 371.4)"/><rect x="361.8" y="373.0" width="11" height="6" fill="#f020f0" transform="rotate(88 367.3 376.0)"/><rect x="357.4" y="382.9" width="8" height="5" fill="#90f0c0" transform="rotate(60 361.4 385.4)"/><rect x="345.9" y="390.4" width="6" height="3" fill="#c0a020" transform="rotate(60 348.9 391.9)"/><rect x="385.2" y="371.1" width="7" height="3" fill="#80c0e0" transform="rotate(55 388.7 372.6)"/><rect x="399.8" y="372.3" width="7" height="4" fill="#90c0a0" transform="rotate(60 403.3 374.3)"/><rect x="370.8" y="395.4" width="12" height="8" fill="#d080f0" transform="rotate(35 376.8 399.4)"/><rect x="378.4" y="393.2" width="7" height="5" fill="#a080c0" transform="rotate(0 381.9 395.7)"/><rect x="388.2" y="387.4" width="13" height="8" fill="#3050e0" transform="rotate(88 394.7 391.4)"/><rect x="395.9" y="381.0" width="8" height="7" fill="#f020f0" transform="rotate(0 399.9 384.5)"/><rect x="398.1" y="388.4" width="12" height="7" fill="#d0a020" transform="rotate(80 404.1 391.9)"/><rect x="381.3" y="401.7" width="8" height="5" fill="#30d0f0" transform="rotate(88 385.3 404.2)"/><rect x="390.4" y="401.4" width="6" height="4" fill="#f020a0" transform="rotate(0 393.4 403.4)"/><rect x="383.5" y="387.0" width="8" height="2" fill="#a0c020" transform="rotate(-75 387.5 388.0)"/><rect x="381.0" y="412.0" width="12" height="5" fill="#d040f0" transform="rotate(88 387.0 414.5)"/><rect x="418.0" y="396.3" width="10" height="5" fill="#30c0f0" transform="rotate(85 423.0 398.8)"/><rect x="402.8" y="415.8" width="13" height="7" fill="#50b0b0" transform="rotate(-80 409.3 419.3)"/><rect x="422.4" y="414.4" width="8" height="7" fill="#f0e0a0" transform="rotate(0 426.4 417.9)"/><rect x="381.9" y="426.8" width="12" height="7" fill="#b0d8f0" transform="rotate(65 387.9 430.3)"/><rect x="224.5" y="441.3" width="9" height="4" fill="#a030d0" transform="rotate(80 229.0 443.3)"/><rect x="280.5" y="438.0" width="10" height="5" fill="#80a0c0" transform="rotate(28 285.5 440.5)"/><rect x="285.7" y="447.8" width="11" height="7" fill="#e0a080" transform="rotate(-52 291.2 451.3)"/><rect x="308.9" y="437.3" width="9" height="5" fill="#c0e0f0" transform="rotate(-68 313.4 439.8)"/><rect x="317.2" y="444.4" width="12" height="7" fill="#8050d0" transform="rotate(-68 323.2 447.9)"/><rect x="326.1" y="436.0" width="10" height="5" fill="#8030d0" transform="rotate(-60 331.1 438.5)"/><rect x="333.1" y="436.3" width="11" height="6" fill="#30c0b0" transform="rotate(-80 338.6 439.3)"/><rect x="351.5" y="432.5" width="6" height="5" fill="#f01040" transform="rotate(0 354.5 435.0)"/><rect x="354.4" y="442.8" width="6" height="5" fill="#30a0f0" transform="rotate(0 357.4 445.3)"/><rect x="353.6" y="438.5" width="7" height="5" fill="#f0f0f0" transform="rotate(0 357.1 441.0)"/><rect x="357.9" y="436.8" width="8" height="5" fill="#e0d0a0" transform="rotate(-30 361.9 439.3)"/><rect x="368.8" y="441.3" width="8" height="4" fill="#b080b0" transform="rotate(88 372.8 443.3)"/><rect x="378.6" y="447.6" width="10" height="4" fill="#90a0b0" transform="rotate(-70 383.6 449.6)"/><rect x="262.0" y="454.0" width="8" height="6" fill="#c0a0f0" transform="rotate(0 266.0 457.0)"/><rect x="237.3" y="450.5" width="5" height="5" fill="#f0a020" transform="rotate(0 239.8 453.0)"/><rect x="235.7" y="455.2" width="10" height="6" fill="#f0f0b0" transform="rotate(-70 240.7 458.2)"/><rect x="237.5" y="458.6" width="8" height="6" fill="#30d0b0" transform="rotate(-70 241.5 461.6)"/><rect x="222.9" y="460.6" width="11" height="7" fill="#50a0f0" transform="rotate(60 228.4 464.1)"/><rect x="296.7" y="457.6" width="13" height="8" fill="#e030a0" transform="rotate(72 303.2 461.6)"/><rect x="316.2" y="466.1" width="14" height="8" fill="#f0f090" transform="rotate(68 323.2 470.1)"/><rect x="345.5" y="470.6" width="13" height="7" fill="#e0f020" transform="rotate(42 352.0 474.1)"/><rect x="353.8" y="472.4" width="10" height="4" fill="#f0c0a0" transform="rotate(-75 358.8 474.4)"/><rect x="358.6" y="463.7" width="10" height="5" fill="#a0c0d0" transform="rotate(88 363.6 466.2)"/><rect x="422.3" y="463.6" width="10" height="8" fill="#a0d0e0" transform="rotate(-60 427.3 467.6)"/><rect x="250.7" y="473.6" width="10" height="5" fill="#c0f0f0" transform="rotate(88 255.7 476.1)"/><rect x="259.6" y="474.0" width="10" height="6" fill="#c030d0" transform="rotate(-60 264.6 477.0)"/><rect x="250.4" y="488.0" width="13" height="7" fill="#3090d0" transform="rotate(-72 256.9 491.5)"/><rect x="254.4" y="481.3" width="12" height="6" fill="#f080f0" transform="rotate(40 260.4 484.3)"/><rect x="270.6" y="490.7" width="7" height="5" fill="#c020f0" transform="rotate(70 274.1 493.2)"/><rect x="271.1" y="501.7" width="6" height="2" fill="#8030a0" transform="rotate(-70 274.1 502.7)"/><rect x="282.2" y="488.4" width="11" height="7" fill="#30b090" transform="rotate(62 287.7 491.9)"/><rect x="306.7" y="480.8" width="9" height="6" fill="#c030d0" transform="rotate(-10 311.2 483.8)"/><rect x="322.3" y="479.0" width="13" height="8" fill="#8060f0" transform="rotate(-45 328.8 483.0)"/><rect x="340.7" y="492.8" width="8" height="5" fill="#90c0d0" transform="rotate(-80 344.7 495.3)"/><rect x="387.7" y="486.8" width="14" height="6" fill="#f0f020" transform="rotate(60 394.7 489.8)"/><rect x="413.5" y="483.1" width="11" height="6" fill="#f030c0" transform="rotate(-10 419.0 486.1)"/><rect x="414.1" y="499.0" width="11" height="5" fill="#e090e0" transform="rotate(-63 419.6 501.5)"/><rect x="389.1" y="502.6" width="12" height="6" fill="#e07020" transform="rotate(65 395.1 505.6)"/><rect x="397.4" y="507.0" width="10" height="6" fill="#c0f030" transform="rotate(75 402.4 510.0)"/><rect x="283.3" y="506.4" width="14" height="8" fill="#f01060" transform="rotate(-80 290.3 510.4)"/><rect x="300.4" y="503.9" width="10" height="6" fill="#d030c0" transform="rotate(88 305.4 506.9)"/><rect x="311.9" y="504.1" width="11" height="5" fill="#80f0a0" transform="rotate(47 317.4 506.6)"/><rect x="327.0" y="507.7" width="13" height="8" fill="#a030d0" transform="rotate(-62 333.5 511.7)"/><rect x="353.8" y="510.6" width="14" height="8" fill="#c0f0f8" transform="rotate(64 360.8 514.6)"/><rect x="247.7" y="512.4" width="14" height="8" fill="#30b0f0" transform="rotate(-63 254.7 516.4)"/><rect x="236.7" y="522.3" width="12" height="7" fill="#3070f0" transform="rotate(-64 242.7 525.8)"/><rect x="215.7" y="523.6" width="13" height="6" fill="#d0c090" transform="rotate(65 222.2 526.6)"/><rect x="274.9" y="520.9" width="11" height="7" fill="#d0c020" transform="rotate(-80 280.4 524.4)"/><rect x="285.3" y="530.5" width="10" height="6" fill="#c0f0b0" transform="rotate(-48 290.3 533.5)"/><rect x="241.0" y="538.2" width="13" height="6" fill="#f0c020" transform="rotate(88 247.5 541.2)"/><rect x="228.0" y="548.1" width="10" height="6" fill="#d020f0" transform="rotate(-55 233.0 551.1)"/><rect x="255.1" y="548.8" width="13" height="7" fill="#70f040" transform="rotate(-50 261.6 552.3)"/><rect x="270.1" y="545.0" width="8" height="6" fill="#e0f020" transform="rotate(-55 274.1 548.0)"/><rect x="320.3" y="541.1" width="12" height="7" fill="#30c0a0" transform="rotate(88 326.3 544.6)"/><rect x="316.0" y="551.0" width="12" height="6" fill="#f0a090" transform="rotate(-65 322.0 554.0)"/><rect x="385.0" y="534.4" width="10" height="6" fill="#b0c030" transform="rotate(40 390.0 537.4)"/><rect x="397.5" y="530.5" width="11" height="6" fill="#e020e0" transform="rotate(75 403.0 533.5)"/><rect x="361.6" y="537.8" width="8" height="5" fill="#f0a0e0" transform="rotate(-30 365.6 540.3)"/><rect x="364.9" y="550.5" width="10" height="6" fill="#f0e020" transform="rotate(80 369.9 553.5)"/><rect x="368.0" y="552.5" width="8" height="5" fill="#3040f0" transform="rotate(80 372.0 555.0)"/><rect x="337.3" y="545.3" width="8" height="2" fill="#b06020" transform="rotate(-70 341.3 546.3)"/><rect x="404.8" y="552.0" width="9" height="5" fill="#c090a0" transform="rotate(80 409.3 554.5)"/><rect x="416.0" y="554.9" width="6" height="5" fill="#f0a0d0" transform="rotate(0 419.0 557.4)"/><rect x="217.3" y="492.6" width="3" height="3" fill="#e0a020" transform="rotate(0 218.8 494.1)"/><rect x="353.9" y="554.9" width="8" height="5" fill="#30c0c0" transform="rotate(0 357.9 557.4)"/><rect x="440.4" y="371.6" width="10" height="7" fill="#f0f020" transform="rotate(-60 445.4 375.1)"/><rect x="450.0" y="369.6" width="8" height="6" fill="#f02050" transform="rotate(0 454.0 372.6)"/><rect x="444.5" y="377.6" width="12" height="7" fill="#c07080" transform="rotate(-20 450.5 381.1)"/><rect x="445.0" y="386.0" width="6" height="4" fill="#e0a090" transform="rotate(75 448.0 388.0)"/><rect x="460.1" y="373.0" width="10" height="7" fill="#e0e020" transform="rotate(-70 465.1 376.5)"/><rect x="507.8" y="372.8" width="8" height="4" fill="#f040c0" transform="rotate(85 511.8 374.8)"/><rect x="489.7" y="377.9" width="8" height="4" fill="#3090e0" transform="rotate(-70 493.7 379.9)"/><rect x="495.9" y="383.3" width="12" height="6" fill="#f09020" transform="rotate(-45 501.9 386.3)"/><rect x="497.7" y="388.2" width="5" height="4" fill="#f050d0" transform="rotate(0 500.2 390.2)"/><rect x="511.3" y="387.4" width="12" height="8" fill="#30e8f0" transform="rotate(-80 517.3 391.4)"/><rect x="524.4" y="392.3" width="9" height="5" fill="#c080c0" transform="rotate(-65 528.9 394.8)"/><rect x="540.8" y="369.4" width="6" height="4" fill="#c080a0" transform="rotate(0 543.8 371.4)"/><rect x="549.8" y="371.1" width="13" height="8" fill="#f0b0f0" transform="rotate(-30 556.3 375.1)"/><rect x="555.2" y="386.0" width="8" height="4" fill="#30d0b0" transform="rotate(75 559.2 388.0)"/><rect x="566.6" y="381.0" width="11" height="6" fill="#70b0f0" transform="rotate(-80 572.1 384.0)"/><rect x="576.1" y="370.8" width="9" height="6" fill="#d0a0f0" transform="rotate(-10 580.6 373.8)"/><rect x="595.8" y="370.8" width="9" height="6" fill="#e0a0c0" transform="rotate(-60 600.3 373.8)"/><rect x="614.7" y="371.8" width="10" height="6" fill="#a0f0c0" transform="rotate(88 619.7 374.8)"/><rect x="628.0" y="374.8" width="8" height="4" fill="#80f0e0" transform="rotate(88 632.0 376.8)"/><rect x="630.7" y="371.1" width="6" height="3" fill="#9070d0" transform="rotate(50 633.7 372.6)"/><rect x="601.8" y="376.9" width="9" height="5" fill="#c0f0a0" transform="rotate(-40 606.3 379.4)"/><rect x="600.5" y="384.1" width="10" height="6" fill="#50a0f0" transform="rotate(40 605.5 387.1)"/><rect x="615.3" y="379.8" width="6" height="5" fill="#3080f0" transform="rotate(0 618.3 382.3)"/><rect x="622.7" y="384.3" width="11" height="9" fill="#e050e0" transform="rotate(10 628.2 388.8)"/><rect x="630.8" y="385.3" width="11" height="7" fill="#e0a080" transform="rotate(88 636.3 388.8)"/><rect x="637.9" y="400.2" width="6" height="3" fill="#e02050" transform="rotate(-70 640.9 401.7)"/><rect x="541.0" y="400.4" width="9" height="6" fill="#f080d0" transform="rotate(60 545.5 403.4)"/><rect x="549.6" y="398.7" width="10" height="7" fill="#70a8f0" transform="rotate(-15 554.6 402.2)"/><rect x="603.2" y="400.4" width="8" height="6" fill="#30f080" transform="rotate(-55 607.2 403.4)"/><rect x="610.9" y="402.2" width="8" height="4" fill="#60f060" transform="rotate(35 614.9 404.2)"/><rect x="588.4" y="411.4" width="17" height="8" fill="#20c0c0" transform="rotate(30 596.9 415.4)"/><rect x="603.4" y="412.9" width="10" height="6" fill="#d0f0a0" transform="rotate(88 608.4 415.9)"/><rect x="609.9" y="415.8" width="10" height="6" fill="#b050f0" transform="rotate(-70 614.9 418.8)"/><rect x="432.2" y="407.7" width="10" height="6" fill="#c0a0f0" transform="rotate(88 437.2 410.7)"/><rect x="428.6" y="417.1" width="8" height="5" fill="#f0a080" transform="rotate(-45 432.6 419.6)"/><rect x="439.4" y="416.3" width="8" height="5" fill="#a0c0a0" transform="rotate(88 443.4 418.8)"/><rect x="427.7" y="437.7" width="8" height="5" fill="#f0c0a0" transform="rotate(88 431.7 440.2)"/><rect x="463.3" y="405.5" width="8" height="6" fill="#f020f0" transform="rotate(-20 467.3 408.5)"/><rect x="463.9" y="418.7" width="11" height="7" fill="#c050d0" transform="rotate(-10 469.4 422.2)"/><rect x="474.8" y="417.0" width="8" height="6" fill="#e090d0" transform="rotate(80 478.8 420.0)"/><rect x="479.6" y="418.5" width="11" height="5" fill="#b0c060" transform="rotate(88 485.1 421.0)"/><rect x="504.1" y="407.4" width="11" height="4" fill="#8080e0" transform="rotate(-70 509.6 409.4)"/><rect x="500.2" y="425.6" width="12" height="7" fill="#f0a070" transform="rotate(60 506.2 429.1)"/><rect x="510.7" y="420.7" width="8" height="4" fill="#b070b0" transform="rotate(-45 514.7 422.7)"/><rect x="522.1" y="426.9" width="11" height="6" fill="#b0e0a0" transform="rotate(40 527.6 429.9)"/><rect x="531.2" y="422.8" width="15" height="8" fill="#f0f0b0" transform="rotate(70 538.7 426.8)"/><rect x="529.8" y="433.4" width="10" height="5" fill="#c0f020" transform="rotate(-65 534.8 435.9)"/><rect x="560.6" y="423.5" width="10" height="6" fill="#f0c030" transform="rotate(40 565.6 426.5)"/><rect x="596.3" y="438.0" width="9" height="6" fill="#f020f0" transform="rotate(-80 600.8 441.0)"/><rect x="504.4" y="442.5" width="7" height="5" fill="#c080f0" transform="rotate(45 507.9 445.0)"/><rect x="524.9" y="445.6" width="15" height="9" fill="#8060f0" transform="rotate(71 532.4 450.1)"/><rect x="537.6" y="442.0" width="9" height="6" fill="#d03020" transform="rotate(88 542.1 445.0)"/><rect x="543.5" y="455.9" width="11" height="7" fill="#c030e0" transform="rotate(-50 549.0 459.4)"/><rect x="615.3" y="452.6" width="10" height="6" fill="#f0f020" transform="rotate(-70 620.3 455.6)"/><rect x="424.1" y="457.4" width="22" height="10" fill="#c0f0f0" transform="rotate(-63 435.1 462.4)"/><rect x="450.3" y="455.7" width="10" height="6" fill="#b0f020" transform="rotate(-80 455.3 458.7)"/><rect x="458.7" y="460.1" width="6" height="4" fill="#a0f040" transform="rotate(0 461.7 462.1)"/><rect x="487.0" y="464.4" width="12" height="7" fill="#30e0f0" transform="rotate(60 493.0 467.9)"/><rect x="494.0" y="462.2" width="13" height="8" fill="#a0a0e0" transform="rotate(-80 500.5 466.2)"/><rect x="499.5" y="466.4" width="10" height="4" fill="#e0a050" transform="rotate(-75 504.5 468.4)"/><rect x="512.0" y="460.5" width="14" height="8" fill="#f0b0f0" transform="rotate(-35 519.0 464.5)"/><rect x="520.5" y="467.6" width="9" height="5" fill="#e03080" transform="rotate(0 525.0 470.1)"/><rect x="535.6" y="475.1" width="12" height="9" fill="#30e0b0" transform="rotate(-70 541.6 479.6)"/><rect x="525.4" y="485.0" width="14" height="9" fill="#6020f0" transform="rotate(47 532.4 489.5)"/><rect x="560.1" y="482.4" width="13" height="8" fill="#e040b0" transform="rotate(-67 566.6 486.4)"/><rect x="440.7" y="483.4" width="10" height="6" fill="#60d0a0" transform="rotate(60 445.7 486.4)"/><rect x="429.8" y="498.8" width="9" height="6" fill="#30a090" transform="rotate(-40 434.3 501.8)"/><rect x="484.8" y="497.1" width="12" height="6" fill="#40e040" transform="rotate(65 490.8 500.1)"/><rect x="607.8" y="485.5" width="10" height="7" fill="#30d8c0" transform="rotate(-40 612.8 489.0)"/><rect x="623.6" y="488.9" width="10" height="6" fill="#30a0f0" transform="rotate(85 628.6 491.9)"/><rect x="640.0" y="486.6" width="8" height="3" fill="#e030e0" transform="rotate(80 644.0 488.1)"/><rect x="599.2" y="499.1" width="9" height="6" fill="#f090f0" transform="rotate(-80 603.7 502.1)"/><rect x="595.3" y="511.1" width="11" height="6" fill="#e090d0" transform="rotate(-5 600.8 514.1)"/><rect x="607.3" y="512.5" width="9" height="6" fill="#b0f0f0" transform="rotate(-45 611.8 515.5)"/><rect x="613.5" y="519.7" width="13" height="7" fill="#40e0c0" transform="rotate(-75 620.0 523.2)"/><rect x="626.6" y="510.5" width="16" height="10" fill="#50e020" transform="rotate(-55 634.6 515.5)"/><rect x="634.0" y="508.5" width="6" height="5" fill="#f0f0c0" transform="rotate(-55 637.0 511.0)"/><rect x="641.0" y="503.2" width="6" height="4" fill="#3090e0" transform="rotate(0 644.0 505.2)"/><rect x="446.3" y="515.9" width="12" height="6" fill="#5050f0" transform="rotate(30 452.3 518.9)"/><rect x="467.5" y="519.3" width="10" height="6" fill="#30a0f0" transform="rotate(88 472.5 522.3)"/><rect x="506.2" y="513.9" width="17" height="10" fill="#f0b020" transform="rotate(44 514.7 518.9)"/><rect x="522.8" y="517.6" width="13" height="6" fill="#c0f080" transform="rotate(-75 529.3 520.6)"/><rect x="530.4" y="513.4" width="8" height="6" fill="#f0b0a0" transform="rotate(50 534.4 516.4)"/><rect x="530.4" y="527.3" width="16" height="10" fill="#c0f020" transform="rotate(47 538.4 532.3)"/><rect x="449.7" y="532.2" width="12" height="7" fill="#30f060" transform="rotate(65 455.7 535.7)"/><rect x="461.6" y="540.0" width="7" height="5" fill="#60f040" transform="rotate(0 465.1 542.5)"/><rect x="479.6" y="533.2" width="7" height="5" fill="#c0f0f0" transform="rotate(0 483.1 535.7)"/><rect x="485.3" y="532.9" width="11" height="7" fill="#f0f020" transform="rotate(60 490.8 536.4)"/><rect x="507.5" y="538.5" width="11" height="7" fill="#3090f0" transform="rotate(30 513.0 542.0)"/><rect x="556.8" y="540.0" width="10" height="5" fill="#30e0f0" transform="rotate(25 561.8 542.5)"/><rect x="566.0" y="546.9" width="7" height="3" fill="#30c0e0" transform="rotate(80 569.5 548.4)"/><rect x="572.6" y="550.5" width="11" height="8" fill="#f020f0" transform="rotate(88 578.1 554.5)"/><rect x="606.1" y="540.7" width="8" height="5" fill="#30e0e0" transform="rotate(50 610.1 543.2)"/><rect x="616.4" y="546.4" width="10" height="5" fill="#30d0c0" transform="rotate(70 621.4 548.9)"/><rect x="553.5" y="553.2" width="8" height="5" fill="#c0f080" transform="rotate(-80 557.5 555.7)"/><rect x="638.3" y="555.9" width="8" height="3" fill="#e040c0" transform="rotate(-40 642.3 557.4)"/><rect x="657.1" y="371.8" width="10" height="6" fill="#30d0f0" transform="rotate(-70 662.1 374.8)"/><rect x="671.5" y="371.8" width="8" height="5" fill="#e09040" transform="rotate(80 675.5 374.3)"/><rect x="665.2" y="373.5" width="11" height="6" fill="#e030f0" transform="rotate(88 670.7 376.5)"/><rect x="677.8" y="371.3" width="8" height="6" fill="#60f040" transform="rotate(40 681.8 374.3)"/><rect x="673.4" y="376.1" width="10" height="5" fill="#f0f0b0" transform="rotate(88 678.4 378.6)"/><rect x="697.3" y="370.4" width="10" height="6" fill="#70f040" transform="rotate(-70 702.3 373.4)"/><rect x="703.5" y="377.9" width="8" height="4" fill="#f0a0e0" transform="rotate(75 707.5 379.9)"/><rect x="688.1" y="385.5" width="9" height="5" fill="#b090f0" transform="rotate(50 692.6 388.0)"/><rect x="697.1" y="383.8" width="14" height="10" fill="#f0f040" transform="rotate(30 704.1 388.8)"/><rect x="674.0" y="386.0" width="7" height="4" fill="#f0f020" transform="rotate(88 677.5 388.0)"/><rect x="645.1" y="392.7" width="10" height="6" fill="#f0f080" transform="rotate(80 650.1 395.7)"/><rect x="657.5" y="391.8" width="10" height="6" fill="#f01060" transform="rotate(50 662.5 394.8)"/><rect x="674.4" y="400.2" width="8" height="3" fill="#c040b0" transform="rotate(60 678.4 401.7)"/><rect x="684.8" y="407.7" width="6" height="5" fill="#f08060" transform="rotate(0 687.8 410.2)"/><rect x="683.1" y="402.4" width="11" height="7" fill="#f020f0" transform="rotate(60 688.6 405.9)"/><rect x="716.7" y="392.8" width="8" height="4" fill="#30d0c0" transform="rotate(60 720.7 394.8)"/><rect x="731.9" y="391.5" width="6" height="5" fill="#f08040" transform="rotate(0 734.9 394.0)"/><rect x="726.4" y="395.2" width="10" height="6" fill="#f0a0f0" transform="rotate(-60 731.4 398.2)"/><rect x="720.2" y="399.2" width="7" height="5" fill="#e0a0e0" transform="rotate(0 723.7 401.7)"/><rect x="725.4" y="405.0" width="12" height="7" fill="#d0a0f0" transform="rotate(30 731.4 408.5)"/><rect x="738.7" y="399.7" width="18" height="9" fill="#e020b0" transform="rotate(27 747.7 404.2)"/><rect x="755.3" y="403.8" width="7" height="5" fill="#f04090" transform="rotate(0 758.8 406.3)"/><rect x="795.9" y="370.8" width="8" height="7" fill="#e06020" transform="rotate(88 799.9 374.3)"/><rect x="796.5" y="378.4" width="5" height="2" fill="#a08060" transform="rotate(60 799.0 379.4)"/><rect x="829.6" y="377.4" width="9" height="5" fill="#a040e0" transform="rotate(55 834.1 379.9)"/><rect x="823.8" y="394.7" width="8" height="6" fill="#f0e0c0" transform="rotate(-55 827.8 397.7)"/><rect x="841.1" y="405.5" width="11" height="6" fill="#d030f0" transform="rotate(-80 846.6 408.5)"/><rect x="787.4" y="408.2" width="8" height="5" fill="#e0a0f0" transform="rotate(88 791.4 410.7)"/><rect x="794.6" y="413.4" width="9" height="4" fill="#30f080" transform="rotate(-70 799.1 415.4)"/><rect x="809.6" y="407.2" width="8" height="5" fill="#f090c0" transform="rotate(15 813.6 409.7)"/><rect x="776.1" y="416.1" width="10" height="3" fill="#30b090" transform="rotate(62 781.1 417.6)"/><rect x="655.5" y="415.6" width="8" height="4" fill="#e09020" transform="rotate(88 659.5 417.6)"/><rect x="686.4" y="423.5" width="8" height="6" fill="#6030f0" transform="rotate(88 690.4 426.5)"/><rect x="709.0" y="418.9" width="9" height="5" fill="#3070f0" transform="rotate(88 713.5 421.4)"/><rect x="704.2" y="428.5" width="11" height="7" fill="#70f070" transform="rotate(-72 709.7 432.0)"/><rect x="737.4" y="424.3" width="12" height="6" fill="#30c0d0" transform="rotate(88 743.4 427.3)"/><rect x="729.4" y="432.9" width="10" height="7" fill="#30e0a0" transform="rotate(-80 734.4 436.4)"/><rect x="756.9" y="424.0" width="9" height="5" fill="#f0f020" transform="rotate(65 761.4 426.5)"/><rect x="783.2" y="427.3" width="14" height="8" fill="#f020f0" transform="rotate(88 790.2 431.3)"/><rect x="765.5" y="434.0" width="14" height="9" fill="#5030f0" transform="rotate(57 772.5 438.5)"/><rect x="831.0" y="435.8" width="12" height="7" fill="#c0b020" transform="rotate(50 837.0 439.3)"/><rect x="751.6" y="444.4" width="12" height="7" fill="#c0c040" transform="rotate(60 757.6 447.9)"/><rect x="750.0" y="445.7" width="10" height="6" fill="#e0f070" transform="rotate(0 755.0 448.7)"/><rect x="749.7" y="447.6" width="8" height="4" fill="#d0f0b0" transform="rotate(40 753.7 449.6)"/><rect x="769.0" y="449.4" width="14" height="9" fill="#30f090" transform="rotate(62 776.0 453.9)"/><rect x="786.9" y="448.5" width="14" height="8" fill="#90e0b0" transform="rotate(45 793.9 452.5)"/><rect x="797.2" y="458.8" width="18" height="9" fill="#3060e0" transform="rotate(20 806.2 463.3)"/><rect x="764.8" y="457.4" width="13" height="6" fill="#c080f0" transform="rotate(30 771.3 460.4)"/><rect x="853.1" y="450.2" width="10" height="4" fill="#f0a0c0" transform="rotate(-70 858.1 452.2)"/><rect x="680.4" y="449.5" width="13" height="8" fill="#c0f020" transform="rotate(45 686.9 453.5)"/><rect x="688.0" y="463.4" width="16" height="9" fill="#e020b0" transform="rotate(65 696.0 467.9)"/><rect x="673.9" y="471.1" width="9" height="6" fill="#30b070" transform="rotate(-65 678.4 474.1)"/><rect x="697.7" y="474.7" width="11" height="7" fill="#c030a0" transform="rotate(-55 703.2 478.2)"/><rect x="702.1" y="482.5" width="9" height="5" fill="#3080c0" transform="rotate(15 706.6 485.0)"/><rect x="718.0" y="471.1" width="8" height="5" fill="#9030d0" transform="rotate(88 722.0 473.6)"/><rect x="744.3" y="463.7" width="11" height="6" fill="#f020f0" transform="rotate(65 749.8 466.7)"/><rect x="744.4" y="472.3" width="10" height="6" fill="#a0e080" transform="rotate(40 749.4 475.3)"/><rect x="642.1" y="484.8" width="11" height="6" fill="#f020f0" transform="rotate(85 647.6 487.8)"/><rect x="792.4" y="479.8" width="15" height="9" fill="#c0f0a0" transform="rotate(25 799.9 484.3)"/><rect x="814.3" y="482.2" width="10" height="5" fill="#a0c080" transform="rotate(88 819.3 484.7)"/><rect x="756.3" y="492.2" width="17" height="9" fill="#f0d0a0" transform="rotate(32 764.8 496.7)"/><rect x="764.6" y="490.1" width="10" height="8" fill="#40f040" transform="rotate(60 769.6 494.1)"/><rect x="800.0" y="493.3" width="10" height="6" fill="#e06020" transform="rotate(80 805.0 496.3)"/><rect x="803.5" y="497.6" width="10" height="5" fill="#f04020" transform="rotate(88 808.5 500.1)"/><rect x="786.4" y="495.9" width="10" height="5" fill="#d060e0" transform="rotate(88 791.4 498.4)"/><rect x="641.9" y="504.1" width="8" height="4" fill="#3090d0" transform="rotate(88 645.9 506.1)"/><rect x="697.0" y="498.0" width="13" height="7" fill="#40f060" transform="rotate(60 703.5 501.5)"/><rect x="733.3" y="505.3" width="11" height="5" fill="#f020c0" transform="rotate(70 738.8 507.8)"/><rect x="750.6" y="502.1" width="12" height="7" fill="#c0b030" transform="rotate(62 756.6 505.6)"/><rect x="790.5" y="509.4" width="13" height="7" fill="#50f0c0" transform="rotate(-80 797.0 512.9)"/><rect x="666.2" y="508.6" width="14" height="7" fill="#d020f0" transform="rotate(80 673.2 512.1)"/><rect x="675.6" y="513.3" width="14" height="9" fill="#f090e0" transform="rotate(40 682.6 517.8)"/><rect x="671.5" y="524.6" width="7" height="5" fill="#f0b090" transform="rotate(45 675.0 527.1)"/><rect x="704.5" y="527.3" width="6" height="2" fill="#8040a0" transform="rotate(50 707.5 528.3)"/><rect x="712.1" y="535.1" width="13" height="6" fill="#30a0f0" transform="rotate(73 718.6 538.1)"/><rect x="659.4" y="531.2" width="13" height="7" fill="#a0f0b0" transform="rotate(52 665.9 534.7)"/><rect x="786.2" y="523.3" width="12" height="7" fill="#f0a020" transform="rotate(88 792.2 526.8)"/><rect x="784.4" y="526.3" width="14" height="10" fill="#8050f0" transform="rotate(45 791.4 531.3)"/><rect x="787.4" y="530.1" width="9" height="5" fill="#f0b0f0" transform="rotate(-60 791.9 532.6)"/><rect x="806.4" y="522.4" width="10" height="4" fill="#c0f020" transform="rotate(-70 811.4 524.4)"/><rect x="813.8" y="526.5" width="11" height="6" fill="#f0c090" transform="rotate(62 819.3 529.5)"/><rect x="829.9" y="519.7" width="12" height="7" fill="#30f0b0" transform="rotate(-80 835.9 523.2)"/><rect x="750.8" y="544.0" width="11" height="3" fill="#30b050" transform="rotate(53 756.3 545.5)"/><rect x="653.2" y="547.8" width="15" height="8" fill="#f0f020" transform="rotate(-80 660.7 551.8)"/><rect x="673.2" y="544.6" width="19" height="11" fill="#c0f020" transform="rotate(-56 682.7 550.1)"/><rect x="768.2" y="553.1" width="7" height="7" fill="#70c060" transform="rotate(0 771.7 556.6)"/><rect x="647.3" y="553.4" width="4" height="3" fill="#f040f0" transform="rotate(0 649.3 554.9)"/><rect x="648.5" y="556.3" width="5" height="4" fill="#30f040" transform="rotate(0 651.0 558.3)"/><rect x="30.5" y="813.8" width="14" height="5" fill="#40c8f0" transform="rotate(-52 37.5 816.3)"/><rect x="61.5" y="820.2" width="15.5" height="5" fill="#6020f0" transform="rotate(72 69.2 822.7)"/><rect x="138.3" y="829.9" width="14" height="6" fill="#9a30d0" transform="rotate(72 145.3 832.9)"/><rect x="150.3" y="830.4" width="14" height="5" fill="#c0f080" transform="rotate(90 157.3 832.9)"/><rect x="162.8" y="815.3" width="9" height="2" fill="#30b0d0" transform="rotate(-60 167.3 816.3)"/><rect x="32.7" y="856.6" width="14" height="4" fill="#a0f0d0" transform="rotate(-71 39.7 858.6)"/><rect x="84.4" y="866.7" width="15" height="6" fill="#90c020" transform="rotate(-78 91.9 869.7)"/><rect x="161.7" y="858.9" width="18" height="8" fill="#5060f0" transform="rotate(-72 170.7 862.9)"/><rect x="191.0" y="857.2" width="14" height="5" fill="#e8d890" transform="rotate(90 198.0 859.7)"/><rect x="176.8" y="850.8" width="6" height="2" fill="#a0d020" transform="rotate(-80 179.8 851.8)"/><rect x="99.6" y="886.8" width="22" height="8" fill="#f0a0e0" transform="rotate(-56 110.6 890.8)"/><rect x="4.9" y="886.4" width="12" height="2" fill="#208080" transform="rotate(-70 10.9 887.4)"/><rect x="188.1" y="883.1" width="11" height="4" fill="#80e0f0" transform="rotate(90 193.6 885.1)"/><rect x="56.4" y="904.5" width="22" height="9" fill="#f0e880" transform="rotate(-75 67.4 909.0)"/><rect x="76.3" y="906.1" width="20" height="8" fill="#b030e0" transform="rotate(-80 86.3 910.1)"/><rect x="121.0" y="901.3" width="9" height="4" fill="#e0b890" transform="rotate(85 125.5 903.3)"/><rect x="184.2" y="903.7" width="23" height="5" fill="#30a8d0" transform="rotate(-63 195.7 906.2)"/><rect x="177.1" y="905.2" width="9" height="3" fill="#6020d0" transform="rotate(-60 181.6 906.7)"/><rect x="120.6" y="940.1" width="14" height="5" fill="#f090f0" transform="rotate(88 127.6 942.6)"/><rect x="191.2" y="945.4" width="8" height="2" fill="#d02090" transform="rotate(-70 195.2 946.4)"/><rect x="20.7" y="959.2" width="10" height="3" fill="#40e020" transform="rotate(-85 25.7 960.7)"/><rect x="138.8" y="969.3" width="13" height="2" fill="#7020a0" transform="rotate(-70 145.3 970.3)"/><rect x="176.9" y="986.8" width="48" height="10" fill="#a0c878" transform="rotate(-63 200.9 991.8)"/><rect x="102.8" y="1004.1" width="16" height="4" fill="#7080e0" transform="rotate(-45 110.8 1006.1)"/><rect x="58.3" y="1026.2" width="15" height="4" fill="#3090e0" transform="rotate(-60 65.8 1028.2)"/><rect x="33.8" y="1034.5" width="30" height="10" fill="#30b8f8" transform="rotate(-74 48.8 1039.5)"/><rect x="1.0" y="951.7" width="4" height="3" fill="#60f0f0" transform="rotate(0 3.0 953.2)"/><rect x="211.9" y="818.6" width="19" height="6" fill="#a0f020" transform="rotate(-63 221.4 821.6)"/><rect x="305.6" y="802.9" width="14" height="7" fill="#f06050" transform="rotate(80 312.6 806.4)"/><rect x="316.2" y="821.3" width="10" height="5" fill="#a0f060" transform="rotate(90 321.2 823.8)"/><rect x="344.4" y="821.0" width="15" height="8" fill="#30f070" transform="rotate(68 351.9 825.0)"/><rect x="300.9" y="844.5" width="9" height="4" fill="#40e030" transform="rotate(80 305.4 846.5)"/><rect x="286.6" y="842.7" width="27" height="10" fill="#20e8f0" transform="rotate(75 300.1 847.7)"/><rect x="306.3" y="846.0" width="24" height="8" fill="#9020e8" transform="rotate(90 318.3 850.0)"/><rect x="319.1" y="853.8" width="13" height="5" fill="#f03030" transform="rotate(-65 325.6 856.3)"/><rect x="281.1" y="863.0" width="19" height="8" fill="#3050f0" transform="rotate(78 290.6 867.0)"/><rect x="230.3" y="856.7" width="17" height="7" fill="#90e0c0" transform="rotate(-72 238.8 860.2)"/><rect x="262.0" y="863.2" width="14" height="3" fill="#b0d020" transform="rotate(-70 269.0 864.7)"/><rect x="362.7" y="858.8" width="11" height="5" fill="#5020f0" transform="rotate(-55 368.2 861.3)"/><rect x="410.9" y="844.9" width="16" height="7" fill="#f0a0d8" transform="rotate(58 418.9 848.4)"/><rect x="412.2" y="812.3" width="11" height="5" fill="#c0e040" transform="rotate(-60 417.7 814.8)"/><rect x="383.4" y="801.2" width="7" height="3" fill="#3050e0" transform="rotate(-70 386.9 802.7)"/><rect x="405.4" y="859.3" width="11" height="3" fill="#b0f0a0" transform="rotate(-80 410.9 860.8)"/><rect x="406.0" y="878.3" width="14" height="6" fill="#60e020" transform="rotate(-70 413.0 881.3)"/><rect x="420.1" y="871.8" width="12" height="4" fill="#8060e0" transform="rotate(-55 426.1 873.8)"/><rect x="354.5" y="883.5" width="32" height="10" fill="#70b8f0" transform="rotate(-68 370.5 888.5)"/><rect x="279.2" y="890.5" width="16" height="6" fill="#b0a0f8" transform="rotate(-38 287.2 893.5)"/><rect x="303.8" y="912.5" width="13" height="2" fill="#c09070" transform="rotate(-50 310.3 913.5)"/><rect x="289.7" y="918.6" width="20" height="8" fill="#90c030" transform="rotate(77 299.7 922.6)"/><rect x="256.6" y="918.3" width="13" height="4" fill="#e0e070" transform="rotate(-80 263.1 920.3)"/><rect x="311.4" y="926.1" width="7" height="2" fill="#c020d0" transform="rotate(-70 314.9 927.1)"/><rect x="313.2" y="938.7" width="16" height="4" fill="#e0a070" transform="rotate(90 321.2 940.7)"/><rect x="381.0" y="916.7" width="14" height="5" fill="#e030f0" transform="rotate(88 388.0 919.2)"/><rect x="362.8" y="928.8" width="19" height="8" fill="#b090d0" transform="rotate(64 372.3 932.8)"/><rect x="417.0" y="917.1" width="16" height="5" fill="#20c0b0" transform="rotate(-54 425.0 919.6)"/><rect x="406.2" y="928.4" width="9" height="2" fill="#3040d0" transform="rotate(80 410.7 929.4)"/><rect x="410.4" y="941.8" width="20" height="7" fill="#e0f090" transform="rotate(90 420.4 945.3)"/><rect x="385.2" y="947.1" width="17" height="9" fill="#f0e020" transform="rotate(63 393.7 951.6)"/><rect x="212.4" y="933.3" width="18" height="8" fill="#5080d0" transform="rotate(-70 221.4 937.3)"/><rect x="215.1" y="943.6" width="17" height="7" fill="#90d0a0" transform="rotate(85 223.6 947.1)"/><rect x="324.0" y="954.9" width="19" height="8" fill="#c090f0" transform="rotate(72 333.5 958.9)"/><rect x="337.4" y="961.9" width="15" height="4" fill="#a0f0f0" transform="rotate(58 344.9 963.9)"/><rect x="349.0" y="957.6" width="18" height="8" fill="#f0b090" transform="rotate(70 358.0 961.6)"/><rect x="305.2" y="997.5" width="23" height="9" fill="#30c0a0" transform="rotate(80 316.7 1002.0)"/><rect x="407.5" y="991.6" width="10" height="5" fill="#e02090" transform="rotate(-63 412.5 994.1)"/><rect x="350.2" y="1018.7" width="18" height="3" fill="#c090d0" transform="rotate(80 359.2 1020.2)"/><rect x="268.6" y="1009.0" width="14" height="2" fill="#508050" transform="rotate(70 275.6 1010.0)"/><rect x="277.3" y="1021.6" width="8" height="4" fill="#30e0e0" transform="rotate(90 281.3 1023.6)"/><rect x="301.0" y="1047.2" width="5" height="5" fill="#f09020" transform="rotate(45 303.5 1049.7)"/><rect x="217.5" y="1021.0" width="5" height="2" fill="#8030d0" transform="rotate(20 220.0 1022.0)"/><rect x="462.5" y="798.8" width="10" height="7" fill="#b0f040" transform="rotate(-70 467.5 802.3)"/><rect x="467.5" y="801.0" width="8" height="6" fill="#d0f060" transform="rotate(-70 471.5 804.0)"/><rect x="474.0" y="800.3" width="5" height="4" fill="#6030e0" transform="rotate(80 476.5 802.3)"/><rect x="489.3" y="803.9" width="13" height="5" fill="#3090f0" transform="rotate(-70 495.8 806.4)"/><rect x="495.4" y="807.6" width="9" height="2" fill="#e0c020" transform="rotate(-70 499.9 808.6)"/><rect x="513.7" y="806.1" width="12" height="5" fill="#90e0b0" transform="rotate(-60 519.7 808.6)"/><rect x="505.6" y="820.5" width="9" height="3" fill="#f0a0e0" transform="rotate(-70 510.1 822.0)"/><rect x="547.3" y="818.4" width="12" height="5" fill="#b0e090" transform="rotate(-40 553.3 820.9)"/><rect x="572.7" y="808.4" width="12" height="5" fill="#c030c0" transform="rotate(88 578.7 810.9)"/><rect x="615.1" y="804.0" width="17" height="8" fill="#5020f0" transform="rotate(90 623.6 808.0)"/><rect x="609.8" y="819.8" width="15" height="8" fill="#3060e0" transform="rotate(-72 617.3 823.8)"/><rect x="602.5" y="818.9" width="6" height="3" fill="#80f0f0" transform="rotate(80 605.5 820.4)"/><rect x="625.5" y="829.5" width="19" height="9" fill="#f09080" transform="rotate(-70 635.0 834.0)"/><rect x="578.7" y="846.7" width="9" height="2" fill="#7030a0" transform="rotate(-75 583.2 847.7)"/><rect x="528.6" y="873.5" width="14" height="6" fill="#f020d0" transform="rotate(28 535.6 876.5)"/><rect x="518.8" y="894.5" width="10" height="3" fill="#80f0c0" transform="rotate(58 523.8 896.0)"/><rect x="447.9" y="880.0" width="6" height="2" fill="#80e0e0" transform="rotate(-20 450.9 881.0)"/><rect x="590.7" y="881.9" width="10" height="2" fill="#8030c0" transform="rotate(80 595.7 882.9)"/><rect x="498.5" y="931.0" width="15" height="6" fill="#6040e0" transform="rotate(72 506.0 934.0)"/><rect x="512.0" y="932.6" width="14" height="5" fill="#f08080" transform="rotate(76 519.0 935.1)"/><rect x="527.2" y="930.6" width="19" height="9" fill="#f0e820" transform="rotate(68 536.7 935.1)"/><rect x="533.1" y="920.6" width="5" height="4" fill="#20a040" transform="rotate(70 535.6 922.6)"/><rect x="550.9" y="935.9" width="17" height="6" fill="#c030d0" transform="rotate(85 559.4 938.9)"/><rect x="511.4" y="949.9" width="18" height="9" fill="#e08070" transform="rotate(74 520.4 954.4)"/><rect x="585.1" y="943.6" width="19" height="8" fill="#e050b0" transform="rotate(-74 594.6 947.6)"/><rect x="623.7" y="922.5" width="13" height="6" fill="#d040f0" transform="rotate(75 630.2 925.5)"/><rect x="640.4" y="884.3" width="6" height="4" fill="#e040c0" transform="rotate(60 643.4 886.3)"/><rect x="439.7" y="963.9" width="17" height="6" fill="#b030e0" transform="rotate(-69 448.2 966.9)"/><rect x="475.5" y="956.8" width="9" height="2" fill="#a030c0" transform="rotate(80 480.0 957.8)"/><rect x="466.8" y="979.6" width="9" height="4" fill="#c0e020" transform="rotate(30 471.3 981.6)"/><rect x="472.8" y="991.5" width="31" height="12" fill="#e8b0f0" transform="rotate(79 488.3 997.5)"/><rect x="519.4" y="995.7" width="21" height="9" fill="#9030e8" transform="rotate(-82 529.9 1000.2)"/><rect x="547.0" y="1030.1" width="9" height="2" fill="#a040e0" transform="rotate(80 551.5 1031.1)"/><rect x="558.5" y="1031.5" width="30" height="11" fill="#f04818" transform="rotate(90 573.5 1037.0)"/><rect x="581.8" y="1035.0" width="21" height="9" fill="#c07060" transform="rotate(60 592.3 1039.5)"/><rect x="585.2" y="1036.9" width="12" height="3" fill="#c0f0f0" transform="rotate(-55 591.2 1038.4)"/><rect x="583.1" y="1027.2" width="8" height="2" fill="#40e040" transform="rotate(-55 587.1 1028.2)"/><rect x="572.3" y="1018.0" width="6" height="2" fill="#308070" transform="rotate(80 575.3 1019.0)"/><rect x="428.2" y="866.1" width="5" height="4" fill="#8060e0" transform="rotate(30 430.7 868.1)"/><rect x="428.2" y="906.5" width="5" height="4" fill="#e0d020" transform="rotate(80 430.7 908.5)"/><rect x="428.2" y="914.3" width="5" height="3" fill="#20c0c0" transform="rotate(30 430.7 915.8)"/><rect x="664.4" y="801.1" width="12" height="6" fill="#40f040" transform="rotate(50 670.4 804.1)"/><rect x="694.1" y="807.7" width="13" height="5" fill="#e090f0" transform="rotate(36 700.6 810.2)"/><rect x="674.9" y="821.9" width="16" height="7" fill="#e06040" transform="rotate(-73 682.9 825.4)"/><rect x="722.0" y="819.4" width="13" height="2" fill="#70a060" transform="rotate(80 728.5 820.4)"/><rect x="774.6" y="800.5" width="10" height="8" fill="#30f050" transform="rotate(90 779.6 804.5)"/><rect x="798.2" y="806.1" width="10" height="6" fill="#c0f0a0" transform="rotate(80 803.2 809.1)"/><rect x="800.2" y="802.4" width="6" height="2" fill="#80e0e0" transform="rotate(80 803.2 803.4)"/><rect x="771.7" y="818.9" width="10" height="4" fill="#3070e0" transform="rotate(-65 776.7 820.9)"/><rect x="826.3" y="802.0" width="11" height="5" fill="#60f0e0" transform="rotate(63 831.8 804.5)"/><rect x="699.1" y="841.6" width="19" height="9" fill="#f020f0" transform="rotate(34 708.6 846.1)"/><rect x="716.0" y="857.3" width="17" height="8" fill="#e04090" transform="rotate(53 724.5 861.3)"/><rect x="651.8" y="856.8" width="19" height="8" fill="#40e050" transform="rotate(34 661.3 860.8)"/><rect x="828.3" y="839.1" width="17" height="9" fill="#f030e0" transform="rotate(77 836.8 843.6)"/><rect x="791.6" y="856.1" width="10" height="5" fill="#e030d0" transform="rotate(65 796.6 858.6)"/><rect x="774.2" y="881.6" width="14" height="7" fill="#30e8f0" transform="rotate(70 781.2 885.1)"/><rect x="802.3" y="888.4" width="10" height="4" fill="#c0c020" transform="rotate(64 807.3 890.4)"/><rect x="759.1" y="903.7" width="16" height="6" fill="#e080f0" transform="rotate(90 767.1 906.7)"/><rect x="761.0" y="898.0" width="26" height="12" fill="#90d8f8" transform="rotate(70 774.0 904.0)"/><rect x="811.5" y="901.9" width="12" height="5" fill="#e020e0" transform="rotate(78 817.5 904.4)"/><rect x="815.8" y="917.5" width="17" height="8" fill="#40f080" transform="rotate(67 824.3 921.5)"/><rect x="641.6" y="883.1" width="15" height="8" fill="#e030b0" transform="rotate(55 649.1 887.1)"/><rect x="649.3" y="893.1" width="21" height="9" fill="#50f050" transform="rotate(50 659.8 897.6)"/><rect x="651.0" y="888.5" width="8" height="7" fill="#c0f0a0" transform="rotate(50 655.0 892.0)"/><rect x="664.9" y="913.1" width="7" height="3" fill="#f0a0f0" transform="rotate(50 668.4 914.6)"/><rect x="692.3" y="895.0" width="13" height="3" fill="#60c0c0" transform="rotate(-75 698.8 896.5)"/><rect x="844.4" y="900.5" width="4" height="2" fill="#d0b020" transform="rotate(80 846.4 901.5)"/><rect x="650.8" y="949.7" width="18" height="7" fill="#3070f0" transform="rotate(-67 659.8 953.2)"/><rect x="762.6" y="953.5" width="9" height="4" fill="#e020c0" transform="rotate(80 767.1 955.5)"/><rect x="826.8" y="965.0" width="20" height="6" fill="#50c0a0" transform="rotate(78 836.8 968.0)"/><rect x="695.3" y="993.1" width="13" height="2" fill="#c06020" transform="rotate(-76 701.8 994.1)"/><rect x="816.2" y="998.5" width="14" height="7" fill="#f0c0a0" transform="rotate(64 823.2 1002.0)"/><rect x="845.2" y="1010.8" width="16" height="3" fill="#d040d0" transform="rotate(78 853.2 1012.3)"/><rect x="832.4" y="1026.8" width="12" height="5" fill="#f0e020" transform="rotate(56 838.4 1029.3)"/><rect x="724.2" y="1028.2" width="20" height="9" fill="#a030f0" transform="rotate(88 734.2 1032.7)"/><rect x="724.0" y="1022.8" width="11" height="3" fill="#f090d0" transform="rotate(40 729.5 1024.3)"/><rect x="802.2" y="929.8" width="8" height="1.5" fill="#602060" transform="rotate(70 806.2 930.5)"/><rect x="63.8" y="559.9" width="10" height="8" fill="#20c0a0" transform="rotate(-30 68.8 563.9)"/><rect x="68.8" y="565.1" width="16" height="8" fill="#e05020" transform="rotate(-66 76.8 569.1)"/><rect x="87.6" y="580.9" width="16" height="8" fill="#f020f0" transform="rotate(-52 95.6 584.9)"/><rect x="94.2" y="590.6" width="14" height="8" fill="#f8d0a8" transform="rotate(-51 101.2 594.6)"/><rect x="31.2" y="586.2" width="12" height="6" fill="#e02080" transform="rotate(-64 37.2 589.2)"/><rect x="39.4" y="596.5" width="12" height="4" fill="#f0a020" transform="rotate(-35 45.4 598.5)"/><rect x="134.1" y="567.1" width="10" height="4" fill="#60d0c0" transform="rotate(-62 139.1 569.1)"/><rect x="153.4" y="562.8" width="9" height="4" fill="#b0e020" transform="rotate(-30 157.9 564.8)"/><rect x="141.4" y="599.8" width="14" height="7" fill="#f0c030" transform="rotate(-67 148.4 603.3)"/><rect x="127.8" y="615.3" width="16" height="7" fill="#f0f0a0" transform="rotate(90 135.8 618.8)"/><rect x="188.5" y="574.9" width="9" height="4" fill="#f8b0d0" transform="rotate(-35 193.0 576.9)"/><rect x="199.6" y="586.9" width="13" height="6" fill="#30d0f0" transform="rotate(63 206.1 589.9)"/><rect x="191.2" y="559.0" width="7" height="4" fill="#e0a0f0" transform="rotate(-20 194.7 561.0)"/><rect x="163.6" y="596.7" width="5" height="1" fill="#8040a0" transform="rotate(40 166.1 597.2)"/><rect x="170.1" y="623.6" width="11" height="6" fill="#f020e0" transform="rotate(-43 175.6 626.6)"/><rect x="199.5" y="619.3" width="12" height="6" fill="#d040f0" transform="rotate(88 205.5 622.3)"/><rect x="178.6" y="635.5" width="14" height="7" fill="#f050f0" transform="rotate(-37 185.6 639.0)"/><rect x="98.8" y="639.4" width="20" height="10" fill="#60b8c0" transform="rotate(58 108.8 644.4)"/><rect x="162.5" y="652.4" width="18" height="9" fill="#d0d890" transform="rotate(-53 171.5 656.9)"/><rect x="189.7" y="659.2" width="10" height="5" fill="#e0a080" transform="rotate(70 194.7 661.7)"/><rect x="-2.7" y="638.6" width="14" height="5" fill="#30b090" transform="rotate(88 4.3 641.1)"/><rect x="80.9" y="637.5" width="7" height="1.5" fill="#207040" transform="rotate(-20 84.4 638.3)"/><rect x="91.9" y="654.8" width="10" height="3" fill="#c07020" transform="rotate(0 96.9 656.3)"/><rect x="66.3" y="664.1" width="21" height="9" fill="#90f020" transform="rotate(78 76.8 668.6)"/><rect x="90.6" y="664.2" width="17" height="8" fill="#90f040" transform="rotate(-65 99.1 668.2)"/><rect x="27.9" y="671.2" width="22" height="12" fill="#90d8b0" transform="rotate(-55 38.9 677.2)"/><rect x="75.7" y="683.8" width="23" height="12" fill="#f08020" transform="rotate(74 87.2 689.8)"/><rect x="169.8" y="675.0" width="13" height="7" fill="#90f020" transform="rotate(85 176.3 678.5)"/><rect x="36.2" y="692.7" width="11" height="5" fill="#2080f0" transform="rotate(-64 41.7 695.2)"/><rect x="60.3" y="699.8" width="10" height="6" fill="#30e0f0" transform="rotate(-50 65.3 702.8)"/><rect x="75.7" y="705.2" width="13" height="6" fill="#f0c0a0" transform="rotate(88 82.2 708.2)"/><rect x="103.5" y="700.3" width="17" height="7" fill="#a0f0e0" transform="rotate(-72 112.0 703.8)"/><rect x="132.7" y="707.5" width="18" height="7" fill="#a0d090" transform="rotate(74 141.7 711.0)"/><rect x="144.5" y="704.7" width="6" height="4" fill="#30c0a0" transform="rotate(80 147.5 706.7)"/><rect x="178.4" y="696.6" width="14" height="8" fill="#8060f0" transform="rotate(76 185.4 700.6)"/><rect x="173.5" y="703.6" width="12" height="7" fill="#f090c0" transform="rotate(59 179.5 707.1)"/><rect x="175.9" y="717.7" width="16" height="9" fill="#80f0d0" transform="rotate(54 183.9 722.2)"/><rect x="197.8" y="720.7" width="9" height="6" fill="#3050f0" transform="rotate(88 202.3 723.7)"/><rect x="208.4" y="714.3" width="8" height="5" fill="#d0f060" transform="rotate(-30 212.4 716.8)"/><rect x="187.2" y="733.4" width="15" height="8" fill="#30b090" transform="rotate(-60 194.7 737.4)"/><rect x="34.8" y="719.8" width="17" height="7" fill="#80e090" transform="rotate(-70 43.3 723.3)"/><rect x="40.8" y="719.8" width="17" height="7" fill="#d03090" transform="rotate(88 49.3 723.3)"/><rect x="65.2" y="719.0" width="5" height="2" fill="#a0d020" transform="rotate(-20 67.7 720.0)"/><rect x="60.7" y="726.4" width="18" height="9" fill="#b030d0" transform="rotate(-71 69.7 730.9)"/><rect x="80.8" y="721.0" width="18" height="9" fill="#a020f0" transform="rotate(-56 89.8 725.5)"/><rect x="124.3" y="728.4" width="14" height="5" fill="#50e060" transform="rotate(-71 131.3 730.9)"/><rect x="164.6" y="748.0" width="19" height="9" fill="#e03080" transform="rotate(-68 174.1 752.5)"/><rect x="28.3" y="746.5" width="16" height="7" fill="#c0f0d0" transform="rotate(-20 36.3 750.0)"/><rect x="47.7" y="764.7" width="17" height="8" fill="#f030c0" transform="rotate(-65 56.2 768.7)"/><rect x="71.8" y="772.3" width="22" height="8" fill="#d090b0" transform="rotate(88 82.8 776.3)"/><rect x="19.1" y="778.3" width="21" height="9" fill="#f020f0" transform="rotate(-72 29.6 782.8)"/><rect x="127.3" y="558.6" width="5" height="4" fill="#3070e0" transform="rotate(20 129.8 560.6)"/><rect x="227.9" y="565.7" width="11" height="6" fill="#90c8d8" transform="rotate(-56 233.4 568.7)"/><rect x="255.5" y="567.3" width="12" height="7" fill="#30f060" transform="rotate(88 261.5 570.8)"/><rect x="271.4" y="572.7" width="14" height="7" fill="#f04020" transform="rotate(72 278.4 576.2)"/><rect x="288.1" y="578.6" width="13" height="6" fill="#d0e080" transform="rotate(71 294.6 581.6)"/><rect x="218.2" y="578.1" width="13" height="7" fill="#30a0c0" transform="rotate(-70 224.7 581.6)"/><rect x="234.5" y="589.0" width="12" height="6" fill="#f0c020" transform="rotate(-49 240.5 592.0)"/><rect x="221.2" y="593.8" width="10" height="6" fill="#f020a0" transform="rotate(-57 226.2 596.8)"/><rect x="237.2" y="604.0" width="11" height="5" fill="#9090f0" transform="rotate(-40 242.7 606.5)"/><rect x="309.7" y="573.4" width="14" height="7" fill="#f0b0a0" transform="rotate(-44 316.7 576.9)"/><rect x="317.2" y="591.2" width="12" height="6" fill="#30e080" transform="rotate(-41 323.2 594.2)"/><rect x="329.5" y="563.9" width="11" height="6" fill="#a0c8f0" transform="rotate(88 335.0 566.9)"/><rect x="347.5" y="560.3" width="14" height="8" fill="#20c0c0" transform="rotate(-39 354.5 564.3)"/><rect x="367.2" y="558.6" width="8" height="5" fill="#3030f0" transform="rotate(0 371.2 561.1)"/><rect x="374.5" y="564.7" width="15" height="7" fill="#d09070" transform="rotate(23 382.0 568.2)"/><rect x="393.8" y="565.7" width="18" height="8" fill="#80f0d0" transform="rotate(88 402.8 569.7)"/><rect x="399.8" y="572.0" width="6" height="8" fill="#a030e0" transform="rotate(0 402.8 576.0)"/><rect x="411.6" y="561.3" width="10" height="6" fill="#f0a0e0" transform="rotate(-60 416.6 564.3)"/><rect x="422.0" y="566.2" width="9" height="4" fill="#c0f0d0" transform="rotate(-60 426.5 568.2)"/><rect x="351.3" y="584.2" width="15" height="7" fill="#b0e0f8" transform="rotate(-58 358.8 587.7)"/><rect x="363.1" y="587.8" width="10" height="5" fill="#d03070" transform="rotate(67 368.1 590.3)"/><rect x="302.9" y="623.2" width="24" height="12" fill="#e0e020" transform="rotate(-41 314.9 629.2)"/><rect x="295.1" y="636.1" width="15" height="7" fill="#a0e080" transform="rotate(88 302.6 639.6)"/><rect x="326.9" y="624.1" width="12" height="6" fill="#f0a0d0" transform="rotate(88 332.9 627.1)"/><rect x="245.8" y="630.6" width="11" height="5" fill="#d0f080" transform="rotate(-48 251.3 633.1)"/><rect x="381.0" y="615.4" width="12" height="6" fill="#3050e0" transform="rotate(-30 387.0 618.4)"/><rect x="380.0" y="617.7" width="16" height="10" fill="#20e8f0" transform="rotate(62 388.0 622.7)"/><rect x="401.1" y="641.3" width="12" height="4" fill="#c0c020" transform="rotate(66 407.1 643.3)"/><rect x="417.7" y="636.3" width="10" height="4" fill="#3090c0" transform="rotate(-20 422.7 638.3)"/><rect x="422.0" y="658.1" width="12" height="5" fill="#e040f0" transform="rotate(80 428.0 660.6)"/><rect x="297.5" y="658.6" width="11" height="4" fill="#e0a0f0" transform="rotate(78 303.0 660.6)"/><rect x="258.1" y="662.8" width="6" height="2" fill="#3040d0" transform="rotate(80 261.1 663.8)"/><rect x="276.8" y="670.5" width="7" height="4" fill="#d06020" transform="rotate(60 280.3 672.5)"/><rect x="286.1" y="666.7" width="10" height="5" fill="#f08020" transform="rotate(88 291.1 669.2)"/><rect x="296.0" y="666.9" width="11" height="6" fill="#f0e020" transform="rotate(64 301.5 669.9)"/><rect x="307.6" y="680.4" width="16" height="8" fill="#90f060" transform="rotate(-53 315.6 684.4)"/><rect x="340.5" y="672.7" width="16" height="9" fill="#40f0b0" transform="rotate(49 348.5 677.2)"/><rect x="359.5" y="669.0" width="13" height="6" fill="#50d0b0" transform="rotate(-72 366.0 672.0)"/><rect x="382.6" y="664.2" width="14" height="8" fill="#30d090" transform="rotate(-72 389.6 668.2)"/><rect x="403.3" y="661.6" width="15" height="8" fill="#b0d020" transform="rotate(-46 410.8 665.6)"/><rect x="413.6" y="675.5" width="16" height="7" fill="#30d0c0" transform="rotate(88 421.6 679.0)"/><rect x="402.5" y="686.3" width="13" height="7" fill="#30c0c0" transform="rotate(88 409.0 689.8)"/><rect x="270.6" y="686.9" width="12" height="8" fill="#f0b0c0" transform="rotate(-68 276.6 690.9)"/><rect x="269.0" y="711.2" width="14" height="7" fill="#a020f0" transform="rotate(88 276.0 714.7)"/><rect x="271.3" y="704.7" width="15" height="7" fill="#30e0f0" transform="rotate(88 278.8 708.2)"/><rect x="278.0" y="703.7" width="19" height="9" fill="#e0f030" transform="rotate(-71 287.5 708.2)"/><rect x="328.4" y="702.9" width="9" height="5" fill="#f040c0" transform="rotate(-40 332.9 705.4)"/><rect x="331.5" y="710.4" width="7" height="3" fill="#d07020" transform="rotate(-30 335.0 711.9)"/><rect x="345.2" y="704.5" width="13" height="6" fill="#d07030" transform="rotate(88 351.7 707.5)"/><rect x="402.8" y="703.6" width="16" height="7" fill="#3050f0" transform="rotate(88 410.8 707.1)"/><rect x="410.2" y="714.5" width="12" height="6" fill="#a0f080" transform="rotate(72 416.2 717.5)"/><rect x="213.1" y="712.8" width="6" height="5" fill="#d0f060" transform="rotate(-30 216.1 715.3)"/><rect x="260.8" y="725.6" width="11" height="4" fill="#70c040" transform="rotate(88 266.3 727.6)"/><rect x="301.0" y="727.4" width="14" height="7" fill="#f0a040" transform="rotate(-60 308.0 730.9)"/><rect x="279.5" y="738.6" width="13" height="7" fill="#f0e040" transform="rotate(-63 286.0 742.1)"/><rect x="304.7" y="741.3" width="11" height="6" fill="#3080d0" transform="rotate(80 310.2 744.3)"/><rect x="319.4" y="748.4" width="17" height="4" fill="#40f080" transform="rotate(-72 327.9 750.4)"/><rect x="333.8" y="755.3" width="6" height="3" fill="#e08020" transform="rotate(-60 336.8 756.8)"/><rect x="357.3" y="741.0" width="17" height="8" fill="#80f020" transform="rotate(88 365.8 745.0)"/><rect x="360.8" y="754.8" width="10" height="5" fill="#e8d0a0" transform="rotate(88 365.8 757.3)"/><rect x="407.3" y="749.6" width="10" height="5" fill="#a030e0" transform="rotate(80 412.3 752.1)"/><rect x="249.3" y="752.3" width="20" height="10" fill="#f0a0f0" transform="rotate(-70 259.3 757.3)"/><rect x="305.3" y="759.3" width="12" height="6" fill="#f0a020" transform="rotate(-60 311.3 762.3)"/><rect x="280.0" y="765.2" width="14" height="7" fill="#f0a080" transform="rotate(65 287.0 768.7)"/><rect x="240.5" y="773.3" width="13" height="6" fill="#c0f020" transform="rotate(-73 247.0 776.3)"/><rect x="302.0" y="779.1" width="12" height="3" fill="#60d080" transform="rotate(50 308.0 780.6)"/><rect x="305.6" y="778.3" width="17" height="9" fill="#e03090" transform="rotate(66 314.1 782.8)"/><rect x="354.7" y="786.9" width="16" height="7" fill="#f0f020" transform="rotate(88 362.7 790.4)"/><rect x="289.4" y="791.7" width="10" height="6" fill="#a030e0" transform="rotate(88 294.4 794.7)"/><rect x="385.0" y="794.9" width="6" height="4" fill="#3050d0" transform="rotate(-60 388.0 796.9)"/><rect x="443.6" y="562.6" width="16" height="10" fill="#f0f020" transform="rotate(69 451.6 567.6)"/><rect x="457.8" y="562.8" width="8" height="4" fill="#60d0f0" transform="rotate(-60 461.8 564.8)"/><rect x="509.3" y="572.4" width="8" height="2" fill="#80c060" transform="rotate(-30 513.3 573.4)"/><rect x="458.2" y="590.7" width="15" height="10" fill="#b0e090" transform="rotate(37 465.7 595.7)"/><rect x="435.3" y="602.0" width="11" height="6" fill="#8060f0" transform="rotate(-74 440.8 605.0)"/><rect x="491.2" y="595.0" width="13" height="7" fill="#f070b0" transform="rotate(88 497.7 598.5)"/><rect x="502.4" y="590.2" width="14" height="8" fill="#e0a0f0" transform="rotate(-67 509.4 594.2)"/><rect x="517.1" y="593.9" width="14" height="8" fill="#40d0b0" transform="rotate(-58 524.1 597.9)"/><rect x="542.0" y="598.1" width="11" height="6" fill="#4090f0" transform="rotate(-60 547.5 601.1)"/><rect x="575.2" y="571.9" width="9" height="3" fill="#a0c060" transform="rotate(85 579.7 573.4)"/><rect x="553.5" y="558.5" width="6" height="5" fill="#d0f040" transform="rotate(0 556.5 561.0)"/><rect x="575.3" y="559.2" width="8" height="6" fill="#e020e0" transform="rotate(0 579.3 562.2)"/><rect x="614.6" y="571.6" width="15" height="8" fill="#e0a020" transform="rotate(-63 622.1 575.6)"/><rect x="629.1" y="568.5" width="15" height="8" fill="#f0a0c0" transform="rotate(37 636.6 572.5)"/><rect x="621.6" y="574.3" width="14" height="6" fill="#f0b0f0" transform="rotate(88 628.6 577.3)"/><rect x="634.1" y="559.7" width="8" height="4" fill="#e040c0" transform="rotate(-40 638.1 561.7)"/><rect x="489.5" y="617.1" width="13" height="7" fill="#c040e0" transform="rotate(-73 496.0 620.6)"/><rect x="505.5" y="625.1" width="9" height="4" fill="#e0a070" transform="rotate(80 510.0 627.1)"/><rect x="484.5" y="631.0" width="10" height="6" fill="#f040d0" transform="rotate(88 489.5 634.0)"/><rect x="466.1" y="631.5" width="7" height="4" fill="#a040e0" transform="rotate(60 469.6 633.5)"/><rect x="561.9" y="618.3" width="13" height="8" fill="#f8d0b0" transform="rotate(88 568.4 622.3)"/><rect x="593.8" y="612.7" width="12" height="7" fill="#a090f0" transform="rotate(44 599.8 616.2)"/><rect x="577.1" y="627.0" width="13" height="8" fill="#30f080" transform="rotate(61 583.6 631.0)"/><rect x="562.0" y="631.8" width="18" height="10" fill="#30d8c0" transform="rotate(42 571.0 636.8)"/><rect x="596.8" y="632.9" width="16" height="9" fill="#9050e0" transform="rotate(-68 604.8 637.4)"/><rect x="631.4" y="616.5" width="6" height="3" fill="#e0c020" transform="rotate(-70 634.4 618.0)"/><rect x="637.0" y="647.9" width="12" height="6" fill="#40f040" transform="rotate(88 643.0 650.9)"/><rect x="444.9" y="658.8" width="20" height="10" fill="#9090f0" transform="rotate(63 454.9 663.8)"/><rect x="460.2" y="654.8" width="11" height="5" fill="#30c0f0" transform="rotate(85 465.7 657.3)"/><rect x="480.6" y="649.3" width="6" height="4" fill="#e0e020" transform="rotate(-60 483.6 651.3)"/><rect x="472.8" y="668.5" width="17" height="8" fill="#3060f0" transform="rotate(85 481.3 672.5)"/><rect x="471.0" y="662.4" width="11" height="2" fill="#a04090" transform="rotate(80 476.5 663.4)"/><rect x="425.1" y="658.7" width="12" height="5" fill="#c040f0" transform="rotate(80 431.1 661.2)"/><rect x="496.9" y="663.1" width="9" height="5" fill="#f0a0f0" transform="rotate(-63 501.4 665.6)"/><rect x="503.0" y="664.2" width="14" height="8" fill="#f09030" transform="rotate(72 510.0 668.2)"/><rect x="517.5" y="652.3" width="14" height="8" fill="#d040e0" transform="rotate(-66 524.5 656.3)"/><rect x="529.3" y="655.9" width="10" height="5" fill="#e09020" transform="rotate(37 534.3 658.4)"/><rect x="536.1" y="657.7" width="15" height="8" fill="#30a0f0" transform="rotate(66 543.6 661.7)"/><rect x="552.0" y="648.0" width="22" height="10" fill="#40e8d0" transform="rotate(53 563.0 653.0)"/><rect x="574.6" y="651.8" width="17" height="9" fill="#3090d0" transform="rotate(33 583.1 656.3)"/><rect x="591.6" y="660.4" width="12" height="6" fill="#d0f020" transform="rotate(22 597.6 663.4)"/><rect x="574.8" y="664.9" width="9" height="3" fill="#50a0a0" transform="rotate(10 579.3 666.4)"/><rect x="551.3" y="666.4" width="17" height="10" fill="#50f040" transform="rotate(40 559.8 671.4)"/><rect x="538.0" y="676.5" width="9" height="5" fill="#c040d0" transform="rotate(-58 542.5 679.0)"/><rect x="521.5" y="679.4" width="17" height="10" fill="#f0c020" transform="rotate(-72 530.0 684.4)"/><rect x="586.2" y="682.0" width="13" height="6" fill="#b030e0" transform="rotate(66 592.7 685.0)"/><rect x="548.4" y="691.5" width="11" height="6" fill="#b0d020" transform="rotate(-64 553.9 694.5)"/><rect x="454.9" y="685.8" width="15" height="8" fill="#70b8f0" transform="rotate(30 462.4 689.8)"/><rect x="486.3" y="687.2" width="12" height="6" fill="#d090f0" transform="rotate(-66 492.3 690.2)"/><rect x="492.3" y="694.0" width="13" height="8" fill="#e06030" transform="rotate(40 498.8 698.0)"/><rect x="476.8" y="697.0" width="8" height="5" fill="#f020c0" transform="rotate(88 480.8 699.5)"/><rect x="470.2" y="704.3" width="20" height="10" fill="#d07060" transform="rotate(-37 480.2 709.3)"/><rect x="438.6" y="698.8" width="11" height="7" fill="#f0f030" transform="rotate(-55 444.1 702.3)"/><rect x="427.1" y="694.9" width="8" height="5" fill="#d0f040" transform="rotate(-70 431.1 697.4)"/><rect x="508.3" y="707.5" width="13" height="7" fill="#3030f0" transform="rotate(88 514.8 711.0)"/><rect x="525.9" y="706.9" width="18" height="9" fill="#80c8f0" transform="rotate(-70 534.9 711.4)"/><rect x="533.2" y="714.9" width="12" height="6" fill="#30e0e0" transform="rotate(88 539.2 717.9)"/><rect x="536.8" y="712.9" width="20" height="10" fill="#f0f030" transform="rotate(76 546.8 717.9)"/><rect x="570.7" y="702.0" width="11" height="5" fill="#f0e020" transform="rotate(60 576.2 704.5)"/><rect x="565.2" y="717.8" width="13" height="8" fill="#b0e090" transform="rotate(60 571.7 721.8)"/><rect x="632.2" y="703.1" width="13" height="8" fill="#30c0d0" transform="rotate(60 638.7 707.1)"/><rect x="499.6" y="736.0" width="10" height="8" fill="#b0a0f0" transform="rotate(88 504.6 740.0)"/><rect x="499.6" y="746.0" width="10" height="8" fill="#c050e0" transform="rotate(88 504.6 750.0)"/><rect x="520.3" y="745.3" width="15" height="8" fill="#f0a040" transform="rotate(-70 527.8 749.3)"/><rect x="527.6" y="753.3" width="16" height="8" fill="#f020e0" transform="rotate(-64 535.6 757.3)"/><rect x="575.5" y="747.5" width="17" height="9" fill="#6020e0" transform="rotate(88 584.0 752.0)"/><rect x="575.5" y="764.5" width="17" height="9" fill="#e050b0" transform="rotate(88 584.0 769.0)"/><rect x="591.1" y="745.7" width="11" height="5" fill="#40f080" transform="rotate(-66 596.6 748.2)"/><rect x="608.9" y="744.3" width="13" height="7" fill="#f070d0" transform="rotate(-40 615.4 747.8)"/><rect x="624.2" y="747.4" width="13" height="8" fill="#c0f080" transform="rotate(88 630.7 751.4)"/><rect x="449.7" y="745.3" width="16" height="8" fill="#e050a0" transform="rotate(74 457.7 749.3)"/><rect x="465.6" y="753.8" width="11" height="4" fill="#3090e0" transform="rotate(85 471.1 755.8)"/><rect x="468.9" y="768.0" width="14" height="7" fill="#a090e0" transform="rotate(67 475.9 771.5)"/><rect x="433.1" y="768.3" width="8" height="3" fill="#40b080" transform="rotate(88 437.1 769.8)"/><rect x="488.7" y="783.9" width="21" height="10" fill="#40b8f0" transform="rotate(-72 499.2 788.9)"/><rect x="514.5" y="780.5" width="17" height="9" fill="#e0e080" transform="rotate(-70 523.0 785.0)"/><rect x="458.6" y="789.6" width="12" height="8" fill="#a0f020" transform="rotate(88 464.6 793.6)"/><rect x="467.6" y="791.2" width="10" height="7" fill="#d0f080" transform="rotate(88 472.6 794.7)"/><rect x="566.8" y="791.1" width="9" height="5" fill="#f0a020" transform="rotate(60 571.3 793.6)"/><rect x="634.6" y="741.8" width="7" height="2" fill="#3070c0" transform="rotate(60 638.1 742.8)"/><rect x="647.5" y="559.6" width="8" height="6" fill="#40f040" transform="rotate(-30 651.5 562.6)"/><rect x="655.7" y="558.6" width="8" height="4" fill="#f0f020" transform="rotate(0 659.7 560.6)"/><rect x="691.8" y="566.7" width="11" height="6" fill="#c030a0" transform="rotate(-72 697.3 569.7)"/><rect x="697.5" y="564.0" width="11" height="5" fill="#c0f060" transform="rotate(88 703.0 566.5)"/><rect x="704.0" y="560.3" width="14" height="8" fill="#6030f0" transform="rotate(24 711.0 564.3)"/><rect x="659.8" y="578.9" width="18" height="9" fill="#d090e0" transform="rotate(72 668.8 583.4)"/><rect x="697.7" y="583.4" width="7" height="3" fill="#c030c0" transform="rotate(80 701.2 584.9)"/><rect x="704.6" y="587.9" width="15" height="9" fill="#60f020" transform="rotate(-72 712.1 592.4)"/><rect x="711.4" y="598.7" width="10" height="6" fill="#e090c0" transform="rotate(88 716.4 601.7)"/><rect x="724.6" y="592.3" width="13" height="8" fill="#b030e0" transform="rotate(88 731.1 596.3)"/><rect x="655.2" y="594.9" width="12" height="6" fill="#d0a0f0" transform="rotate(88 661.2 597.9)"/><rect x="654.5" y="603.7" width="20" height="10" fill="#f03030" transform="rotate(88 664.5 608.7)"/><rect x="696.2" y="615.0" width="11" height="6" fill="#f020d0" transform="rotate(31 701.7 618.0)"/><rect x="769.1" y="559.1" width="8" height="7" fill="#80c060" transform="rotate(-60 773.1 562.6)"/><rect x="785.5" y="579.0" width="8" height="3" fill="#30a0a0" transform="rotate(27 789.5 580.5)"/><rect x="805.0" y="577.1" width="14" height="9" fill="#e8e820" transform="rotate(67 812.0 581.6)"/><rect x="798.2" y="598.7" width="15" height="7" fill="#c0e030" transform="rotate(88 805.7 602.2)"/><rect x="751.5" y="611.1" width="11" height="6" fill="#f04030" transform="rotate(-58 757.0 614.1)"/><rect x="761.7" y="614.4" width="14" height="8" fill="#f0d890" transform="rotate(57 768.7 618.4)"/><rect x="791.6" y="614.4" width="14" height="8" fill="#30c090" transform="rotate(75 798.6 618.4)"/><rect x="822.6" y="616.0" width="9" height="4" fill="#e040a0" transform="rotate(45 827.1 618.0)"/><rect x="808.2" y="626.2" width="12" height="6" fill="#80f0c0" transform="rotate(52 814.2 629.2)"/><rect x="705.6" y="630.0" width="15" height="8" fill="#f0c020" transform="rotate(88 713.1 634.0)"/><rect x="670.0" y="630.1" width="14" height="9" fill="#30e8e8" transform="rotate(69 677.0 634.6)"/><rect x="672.4" y="642.3" width="8" height="5" fill="#c090e0" transform="rotate(-58 676.4 644.8)"/><rect x="640.1" y="648.4" width="12" height="5" fill="#30f040" transform="rotate(88 646.1 650.9)"/><rect x="755.9" y="644.8" width="14" height="7" fill="#90c060" transform="rotate(-76 762.9 648.3)"/><rect x="697.6" y="657.1" width="15" height="7" fill="#f030e0" transform="rotate(-61 705.1 660.6)"/><rect x="736.9" y="663.1" width="13" height="8" fill="#30e0c0" transform="rotate(40 743.4 667.1)"/><rect x="645.2" y="670.2" width="17" height="8" fill="#d080f0" transform="rotate(60 653.7 674.2)"/><rect x="686.7" y="671.6" width="14" height="7" fill="#c0e8c0" transform="rotate(60 693.7 675.1)"/><rect x="709.4" y="675.0" width="14" height="8" fill="#60f020" transform="rotate(-72 716.4 679.0)"/><rect x="809.0" y="683.2" width="16" height="8" fill="#e0e080" transform="rotate(88 817.0 687.2)"/><rect x="810.2" y="676.0" width="8" height="6" fill="#b0a0f0" transform="rotate(80 814.2 679.0)"/><rect x="690.5" y="689.0" width="15" height="8" fill="#a0f0c0" transform="rotate(-63 698.0 693.0)"/><rect x="669.9" y="692.9" width="16" height="9" fill="#f0e080" transform="rotate(-43 677.9 697.4)"/><rect x="665.2" y="696.4" width="8" height="4" fill="#6030e0" transform="rotate(-30 669.2 698.4)"/><rect x="650.0" y="708.5" width="15" height="8" fill="#60c0c0" transform="rotate(88 657.5 712.5)"/><rect x="677.9" y="704.0" width="12" height="7" fill="#30a0d0" transform="rotate(-54 683.9 707.5)"/><rect x="699.0" y="710.1" width="14" height="7" fill="#30a0f0" transform="rotate(-62 706.0 713.6)"/><rect x="641.2" y="717.0" width="14" height="7" fill="#5050f0" transform="rotate(-74 648.2 720.5)"/><rect x="757.6" y="709.7" width="17" height="10" fill="#c040d0" transform="rotate(65 766.1 714.7)"/><rect x="724.5" y="719.8" width="14" height="7" fill="#3040f0" transform="rotate(39 731.5 723.3)"/><rect x="734.4" y="724.2" width="18" height="10" fill="#a040e0" transform="rotate(68 743.4 729.2)"/><rect x="696.2" y="734.0" width="11" height="6" fill="#30f080" transform="rotate(-66 701.7 737.0)"/><rect x="770.8" y="738.1" width="11" height="5" fill="#90d0f0" transform="rotate(60 776.3 740.6)"/><rect x="773.4" y="742.8" width="20" height="10" fill="#30e080" transform="rotate(-52 783.4 747.8)"/><rect x="775.1" y="756.4" width="8" height="3" fill="#f0a060" transform="rotate(70 779.1 757.9)"/><rect x="825.5" y="742.1" width="12" height="7" fill="#40f020" transform="rotate(88 831.5 745.6)"/><rect x="723.3" y="745.6" width="13" height="6" fill="#f0a0f0" transform="rotate(52 729.8 748.6)"/><rect x="651.5" y="746.9" width="12" height="7" fill="#b0f0d0" transform="rotate(88 657.5 750.4)"/><rect x="795.4" y="759.3" width="15" height="8" fill="#a0f020" transform="rotate(88 802.9 763.3)"/><rect x="828.0" y="757.7" width="13" height="6" fill="#80f0f0" transform="rotate(75 834.5 760.7)"/><rect x="831.8" y="779.5" width="20" height="10" fill="#f030c0" transform="rotate(57 841.8 784.5)"/><rect x="692.8" y="758.4" width="6" height="2" fill="#3090d0" transform="rotate(-70 695.8 759.4)"/><rect x="730.8" y="771.7" width="7" height="4" fill="#30c0b0" transform="rotate(58 734.3 773.7)"/><rect x="682.8" y="776.7" width="14" height="7" fill="#f0c080" transform="rotate(88 689.8 780.2)"/><rect x="729.2" y="788.9" width="9" height="6" fill="#6020f0" transform="rotate(24 733.7 791.9)"/><rect x="773.1" y="790.7" width="12" height="8" fill="#30e060" transform="rotate(88 779.1 794.7)"/><rect x="664.7" y="794.9" width="6" height="6" fill="#60f040" transform="rotate(0 667.7 797.9)"/><rect x="844.9" y="563.3" width="9" height="2" fill="#4090d0" transform="rotate(-60 849.4 564.3)"/></g>

<g stroke="#d8d098" stroke-width="1.4" fill="none" stroke-linejoin="round">
<path d="M117.4 197.4L761.3 189.2L763.3 252.7L741.6 273.3L137.7 280.1L117.4 261.3Z"/>
<path d="M117.4 261.3L761.3 189.2M117.4 261.3L763.3 252.7M137.7 280.1L763.3 252.7"/>
</g>
<path d="M436.8 41.4L448.5 103.5Q441 100 436.8 101Q432 100 425.5 103.5Z" fill="#00f000"/>
<path d="M434.2 102L440 102L441.6 236L435.2 236Z" fill="#00f000"/>
<path d="M439 236 L439 210.2 A70 25.8 0 0 1 509 236 Z" fill="#00e800"/>
<path d="M439 236 L439 215 A62 21 0 0 1 501 236 Z" fill="#00c000"/>
<path d="M439 235 L509 235 A70 70.5 0 0 1 439 305.5 Z" fill="#7094f4"/>
<path d="M439 235 L499.5 235 A60.5 60.5 0 0 1 439 295.5 Z" fill="#5e7ac8"/>
<circle cx="438.5" cy="278.9" r="9.8" fill="#7094f4"/>
<path d="M429.5 283 L439.5 294.5 L447.5 283Z" fill="#7094f4"/>
<path d="M239.7 238.3L301 225.6L301 251Z" fill="#f00000"/>
<path d="M300 234.2L439.3 234.4L439.3 240.2L300 242Z" fill="#f00000"/>
<g stroke="#e8e0b0" stroke-width="1.2" fill="none" opacity="0.35">
<path d="M117.4 197.4L761.3 189.2L763.3 252.7L741.6 273.3L137.7 280.1L117.4 261.3Z"/>
<path d="M117.4 261.3L761.3 189.2M117.4 261.3L763.3 252.7M137.7 280.1L763.3 252.7"/>
</g>

</svg>

<div id="tb">
<svg width="856" height="56" viewBox="2 1052 856 56" style="position:absolute;left:0;top:0">
 <rect x="25" y="1068" width="24.5" height="24" fill="none" stroke="#7d7d7d" stroke-width="2"/>
 <rect x="28" y="1071" width="4" height="18" fill="#888"/>
 <rect x="105.4" y="1073.6" width="16" height="13.4" rx="1.5" fill="#000"/>
 <path d="M123 1079.5 L129.2 1074.3 L129.2 1085.6 Z" fill="#000"/>
 <path d="M400.5 1068.5 L420.5 1079.2 L400.5 1090 Z" fill="none" stroke="#8a8a8a" stroke-width="2"/>
 <g stroke="#ef7a22" stroke-width="1.6" fill="none" stroke-linecap="round">
  <circle cx="532" cy="1078.2" r="7.6"/>
  <path d="M528.4 1085.2 V1090.5 A3.6 3.6 0 0 0 535.6 1090.5 V1085.2"/>
  <path d="M532 1065.2 V1068 M523.5 1067.7 L525.3 1070.2 M540.5 1067.7 L538.7 1070.2 M518.8 1074.5 L521.8 1075.5 M545.2 1074.5 L542.2 1075.5 M518.8 1082 L521.8 1081 M545.2 1082 L542.2 1081 M523.5 1089 L525.3 1086.8 M540.5 1089 L538.7 1086.8"/>
 </g>
 <ellipse cx="599" cy="1079.5" rx="13.5" ry="7.8" fill="none" stroke="#1e1e1e" stroke-width="1.7"/>
 <rect x="592" y="1070" width="6" height="3" fill="#fff"/><rect x="600" y="1086" width="6" height="3" fill="#fff"/>
 <path d="M595.5 1071.7 L600 1069.2 L600 1074 Z M602.5 1087.3 L598 1085 L598 1089.8 Z" fill="#1e1e1e"/>
 <path d="M651.95 1075.5 V1083" stroke="#9c9c9c" stroke-width="1.8" fill="none"/>
 <path d="M651.95 1083 L646 1087.4 M651.95 1083 L657.9 1087.4" stroke="#5a5a5a" stroke-width="1.5" fill="none"/>
 <path d="M649 1075.8 L651.95 1070.5 L655 1075.8 Z M641.25 1090.7 L644.5 1085 L647.1 1089.6 Z M662.8 1090.7 L659.75 1085.2 L656.85 1089.8 Z" fill="#555" stroke="#555" stroke-width="0.6" stroke-linejoin="round"/>
 <rect x="700.3" y="1071.3" width="25.5" height="17.6" fill="none" stroke="#1e1e1e" stroke-width="1.9"/>
 <path d="M703 1087.2 L704.5 1081.5 L708.3 1085.6 Z M723.4 1073.2 L721.8 1078.7 L718 1074.8 Z" fill="#1e1e1e"/>
 <path d="M753.8 1079.8 C758.5 1071.5 763 1069.4 769 1069.4 C775 1069.4 779.5 1071.5 784.2 1079.8 C779.5 1088.3 775 1090.3 769 1090.3 C763 1090.3 758.5 1088.3 753.8 1079.8 Z" fill="none" stroke="#555" stroke-width="1.9" stroke-linejoin="round"/>
 <circle cx="769" cy="1079.8" r="5.1" fill="none" stroke="#555" stroke-width="1.9"/>
 <rect x="819.4" y="1069.2" width="27.4" height="21.6" fill="none" stroke="#7a7a7a" stroke-width="2"/>
 <path d="M825.5 1083.2 L832.8 1075.8 L840.5 1083.2 Z" fill="none" stroke="#7a7a7a" stroke-width="1.8"/>
</svg>
<div id="persp">Perspective</div>
</div>

</div>
<div id="insp"></div>
<div class="ptitle">Particle System</div>
<div class="hdr" style="left:887px;top:50.5px;letter-spacing:0.3px">Emitter</div>
<div class="lbl" style="top:92.7px;letter-spacing:0.76px">Birth rate</div>
<div class="stp" style="left:1026px;top:82px;width:158px;height:37px">
<div class="mi"></div><div class="pl"></div>
<div class="val">100</div></div>
<div class="stp" style="left:1202px;top:82px;width:160px;height:37px">
<div class="mi"></div><div class="pl"></div>
<div class="val"><span class="dl">&#916;=</span>10</div></div>
<div class="lbl" style="top:138.7px;letter-spacing:0.46px">Warmup dura...</div>
<div class="stp" style="left:1026px;top:128px;width:336px;height:37px">
<div class="mi"></div><div class="pl"></div>
<div class="val">0</div></div>
<div class="lbl" style="top:183.7px;letter-spacing:0.62px">Location</div>
<div class="pop" style="left:1028px;top:175.8px;width:335px;height:32.4px">
<div class="ptxt" style="left:14.5px;letter-spacing:0.27px">Volume</div>
<div class="arr"><svg width="29" height="34" viewBox="0 0 29 34"><path d="M8.3 14.2L14.5 7.6L20.8 14.2M8.3 19.8L14.5 26.3L20.8 19.8" fill="none" stroke="#fff" stroke-width="2.1"/></svg></div></div>
<div class="lbl" style="top:227.7px;letter-spacing:0.47px">Emission space</div>
<div class="pop" style="left:1028px;top:219.8px;width:335px;height:32.4px">
<div class="ptxt" style="left:14.5px;letter-spacing:0.3px">Local space (coordinates...</div>
<div class="arr"><svg width="29" height="34" viewBox="0 0 29 34"><path d="M8.3 14.2L14.5 7.6L20.8 14.2M8.3 19.8L14.5 26.3L20.8 19.8" fill="none" stroke="#fff" stroke-width="2.1"/></svg></div></div>
<div class="lbl" style="top:271.7px;letter-spacing:0.78px">Direction mode</div>
<div class="pop" style="left:1028px;top:263.8px;width:335px;height:32.4px">
<div class="ptxt" style="left:14.5px;letter-spacing:0.63px">Surface normal</div>
<div class="arr"><svg width="29" height="34" viewBox="0 0 29 34"><path d="M8.3 14.2L14.5 7.6L20.8 14.2M8.3 19.8L14.5 26.3L20.8 19.8" fill="none" stroke="#fff" stroke-width="2.1"/></svg></div></div>
<div class="lbl" style="top:316.7px;letter-spacing:0.4px">Spreading an...</div>
<div class="stp" style="left:1026px;top:306px;width:336px;height:37px">
<div class="mi"></div><div class="pl"></div>
<div class="val">270°</div></div>
<div class="lbl" style="top:362.7px;letter-spacing:0.55px">Initial angle</div>
<div class="stp" style="left:1026px;top:352px;width:158px;height:37px">
<div class="mi"></div><div class="pl"></div>
<div class="val">0°</div></div>
<div class="stp" style="left:1202px;top:352px;width:160px;height:37px">
<div class="mi"></div><div class="pl"></div>
<div class="val"><span class="dl">&#916;=</span>5</div></div>
<div class="lbl" style="top:407.7px;letter-spacing:0.15px">Shape</div>
<div class="pop" style="left:1028px;top:399.8px;width:335px;height:32.4px">
<div class="ptxt" style="left:14.5px;letter-spacing:-0.32px">Box</div>
<div class="arr"><svg width="29" height="34" viewBox="0 0 29 34"><path d="M8.3 14.2L14.5 7.6L20.8 14.2M8.3 19.8L14.5 26.3L20.8 19.8" fill="none" stroke="#fff" stroke-width="2.1"/></svg></div></div>
<div class="lbl" style="top:453.7px;letter-spacing:0.7px">Shape width</div>
<div class="stp" style="left:1026px;top:443px;width:336px;height:37px">
<div class="mi"></div><div class="pl"></div>
<div class="val">10</div></div>
<div class="lbl" style="top:499.7px;letter-spacing:0.63px">Shape height</div>
<div class="stp" style="left:1026px;top:489px;width:336px;height:37px">
<div class="mi"></div><div class="pl"></div>
<div class="val">1</div></div>
<div class="lbl" style="top:545.7px;letter-spacing:0.63px">Shape length</div>
<div class="stp" style="left:1026px;top:535px;width:336px;height:37px">
<div class="mi"></div><div class="pl"></div>
<div class="val">1</div></div>
<div class="sep" style="top:580px"></div>
<div class="hdr" style="left:887px;top:596px;letter-spacing:0.18px">Simulation</div>
<div class="lbl" style="top:639.2px;letter-spacing:0.54px">Life span</div>
<div class="stp focus" style="left:1026px;top:628.5px;width:158px;height:37px">
<div class="mi"></div><div class="pl"></div>
<div class="val"><span class="hl">20</span></div></div>
<div class="stp" style="left:1202px;top:628.5px;width:160px;height:37px">
<div class="mi"></div><div class="pl"></div>
<div class="val"><span class="dl">&#916;=</span>0</div></div>
<div class="lbl" style="top:685.7px;letter-spacing:0.74px">Linear velocity</div>
<div class="stp" style="left:1026px;top:675px;width:158px;height:37px">
<div class="mi"></div><div class="pl"></div>
<div class="val">0.25</div></div>
<div class="stp" style="left:1202px;top:675px;width:160px;height:37px">
<div class="mi"></div><div class="pl"></div>
<div class="val"><span class="dl">&#916;=</span>0.25</div></div>
<div class="lbl" style="top:730.2px;letter-spacing:0.68px">Acceleration</div>
<div class="stp" style="left:1026px;top:720px;width:103px;height:36px"><div class="val">0</div></div>
<div class="axl" style="left:1026px;width:103px">x</div>
<div class="stp" style="left:1141px;top:720px;width:102px;height:36px"><div class="val">0.75</div></div>
<div class="axl" style="left:1141px;width:102px">y</div>
<div class="stp" style="left:1254px;top:720px;width:108px;height:36px"><div class="val">0</div></div>
<div class="axl" style="left:1254px;width:108px">z</div>
<div class="lbl" style="top:799.7px;letter-spacing:0.78px">Speed factor</div>
<div class="stp" style="left:1026px;top:789px;width:336px;height:37px">
<div class="mi"></div><div class="pl"></div>
<div class="val">1</div></div>
<div class="lbl" style="top:845.7px;letter-spacing:0.95px">Stretch factor</div>
<div class="stp" style="left:1026px;top:835px;width:336px;height:37px">
<div class="mi"></div><div class="pl"></div>
<div class="val">0.1</div></div>
<div class="sep" style="top:880px"></div>
<div class="hdr" style="left:886px;top:896px;letter-spacing:0.52px">Image</div>
<div class="lbl" style="top:930.7px;letter-spacing:0.4px">Image</div>
<div class="pop" style="left:1030px;top:925.8px;width:331px;height:32.4px">
<div class="ptxt" style="left:21px;letter-spacing:0.35px">None</div>
<div class="arr"><svg width="29" height="34" viewBox="0 0 29 34"><path d="M8.3 14.2L14.5 7.6L20.8 14.2M8.3 19.8L14.5 26.3L20.8 19.8" fill="none" stroke="#fff" stroke-width="2.1"/></svg></div></div>
<div class="lbl" style="top:970.9px;letter-spacing:0.44px">Color</div>
<div class="pop" style="left:1030px;top:966.8px;width:331px;height:32.4px">
<div class="sw"></div>
<div class="arr"><svg width="29" height="34" viewBox="0 0 29 34"><path d="M8.3 14.2L14.5 7.6L20.8 14.2M8.3 19.8L14.5 26.3L20.8 19.8" fill="none" stroke="#fff" stroke-width="2.1"/></svg></div></div>
<div class="chk"><svg width="24" height="24" viewBox="0 0 24 24"><path d="M6 12.5L10 17L18 6.5" fill="none" stroke="#fff" stroke-width="2.4" stroke-linecap="round" stroke-linejoin="round"/></svg></div>
<div class="anim">Animate color</div>
<div class="grad"><svg width="336" height="48" viewBox="0 0 336 48" style="position:absolute;left:0;top:0;overflow:visible">
<defs>
<pattern id="chk" width="20" height="20" patternUnits="userSpaceOnUse"><rect width="20" height="20" fill="#c8c8c8"/><rect width="10" height="10" fill="#8e8e8e"/><rect x="10" y="10" width="10" height="10" fill="#8e8e8e"/></pattern>
<linearGradient id="fadeL" x1="0" x2="1"><stop offset="0" stop-color="#fff" stop-opacity="0"/><stop offset="0.55" stop-color="#fff" stop-opacity="0.15"/><stop offset="1" stop-color="#fff" stop-opacity="1"/></linearGradient>
<linearGradient id="fadeR" x1="0" x2="1"><stop offset="0" stop-color="#fff" stop-opacity="1"/><stop offset="0.45" stop-color="#fff" stop-opacity="0.15"/><stop offset="1" stop-color="#fff" stop-opacity="0"/></linearGradient>
</defs>
<rect x="0" y="0" width="336" height="29" fill="#a8a8a8"/>
<rect x="1" y="2" width="334" height="26" fill="#fff"/>
<rect x="1" y="2" width="86" height="26" fill="url(#chk)"/>
<rect x="1" y="2" width="86" height="26" fill="url(#fadeL)"/>
<rect x="251" y="2" width="84" height="26" fill="url(#chk)"/>
<rect x="251" y="2" width="84" height="26" fill="url(#fadeR)"/>
<g fill="#fff" stroke="#c8c8c8" stroke-width="0.6">
<path d="M1 6 L24 21 L1 26 Z" stroke="none"/>
<path d="M86 6 L97 21 L75 21 Z" stroke="none"/>
<path d="M252 6 L263 21 L241 21 Z" stroke="none"/>
<path d="M335 6 L312 21 L335 26 Z" stroke="none"/>
</g>
<g fill="#fff" stroke="#7a7a7a" stroke-width="1.8">
<circle cx="12" cy="26.5" r="9.5"/><circle cx="86" cy="26.5" r="9.5"/><circle cx="252" cy="26.5" r="9.5"/><circle cx="323.5" cy="26.5" r="9.5"/>
</g>
</svg></div>
<div class="lbl" style="top:1095.7px;letter-spacing:0.0px">Size</div>
<div class="stp" style="left:1026px;top:1085px;width:158px;height:37px">
<div class="mi"></div><div class="pl"></div>
<div class="val">0.05</div></div>
<div class="stp" style="left:1202px;top:1085px;width:160px;height:37px">
<div class="mi"></div><div class="pl"></div>
<div class="val"><span class="dl">&#916;=</span>0.01</div></div>
</body></html>
